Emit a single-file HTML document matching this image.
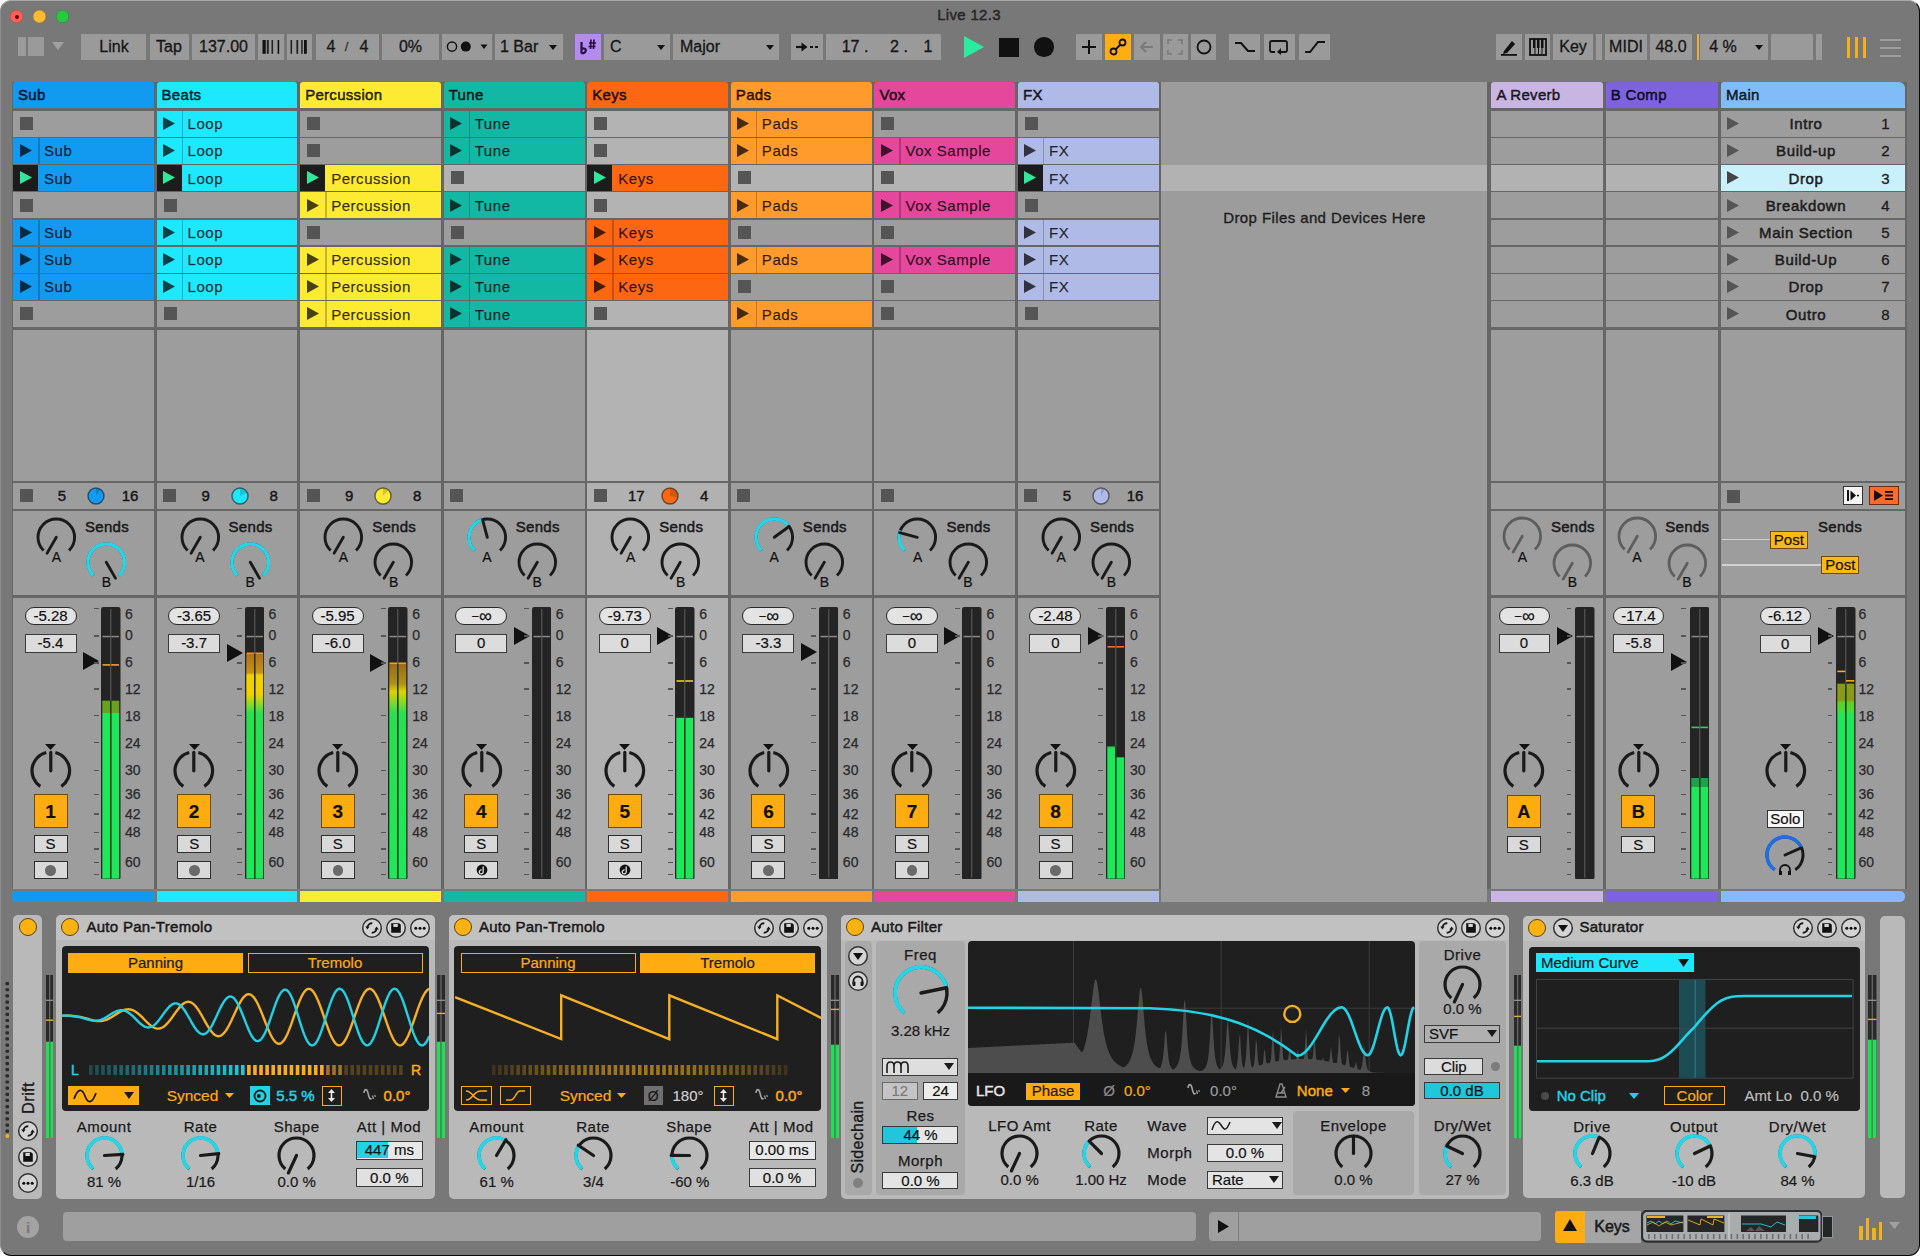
<!DOCTYPE html><html><head><meta charset="utf-8"><style>
*{margin:0;padding:0;box-sizing:border-box}
html,body{width:1920px;height:1256px;overflow:hidden;background:#ffffff}
body{position:relative;font-family:"Liberation Sans",sans-serif}
div,svg{position:absolute}
.t{white-space:nowrap;overflow:visible;-webkit-text-stroke:0.2px currentColor}
</style></head><body><div style="left:0px;top:0px;width:1920px;height:1256px;background:#787878;border-radius:11px;border-top:1px solid #a9a9a9;border-left:1px solid #8c8c8c;border-right:1.5px solid #0a0a0a;border-bottom:1.5px solid #0a0a0a;"></div>
<div style="left:10px;top:10px;width:13px;height:13px;background:#ff5f57;border-radius:50%;box-shadow:inset 0 0 0 0.5px rgba(0,0,0,0.25);"></div>
<div style="left:33px;top:10px;width:13px;height:13px;background:#febc2e;border-radius:50%;box-shadow:inset 0 0 0 0.5px rgba(0,0,0,0.25);"></div>
<div style="left:56px;top:10px;width:13px;height:13px;background:#28c840;border-radius:50%;box-shadow:inset 0 0 0 0.5px rgba(0,0,0,0.25);"></div>
<div style="left:14.5px;top:14.5px;width:4px;height:4px;background:#6b0a06;border-radius:50%;"></div>
<div class="t" style="left:819px;top:5px;width:300px;height:20px;line-height:20px;text-align:center;font-size:15px;letter-spacing:0.3px;-webkit-text-stroke:0.45px currentColor;color:#262626;">Live 12.3</div>
<div style="left:18px;top:37px;width:8px;height:19px;background:#9a9a9a;"></div>
<div style="left:28px;top:37px;width:16px;height:19px;background:#9a9a9a;"></div>
<svg style="position:absolute;left:52px;top:42px;" width="12" height="8" viewBox="0 0 12 8"><path d="M0 0H12L6 8Z" fill="#a0a0a0"/></svg>
<div style="left:81.3px;top:34px;width:65px;height:26px;background:#9a9a9a;"></div>
<div class="t" style="left:-36px;top:37px;width:300px;height:20px;line-height:20px;text-align:center;font-size:16px;color:#161616;-webkit-text-stroke:0.3px #161616;">Link</div>
<div style="left:149.5px;top:34px;width:39.3px;height:26px;background:#9a9a9a;"></div>
<div class="t" style="left:19px;top:37px;width:300px;height:20px;line-height:20px;text-align:center;font-size:16px;color:#161616;-webkit-text-stroke:0.3px #161616;">Tap</div>
<div style="left:191.7px;top:34px;width:63.3px;height:26px;background:#9a9a9a;"></div>
<div class="t" style="left:73.5px;top:37px;width:300px;height:20px;line-height:20px;text-align:center;font-size:16px;color:#161616;-webkit-text-stroke:0.3px #161616;">137.00</div>
<div style="left:257.8px;top:34px;width:26px;height:26px;background:#9a9a9a;"></div>
<svg style="position:absolute;left:262px;top:40px;" width="18" height="14" viewBox="0 0 18 14"><rect x="0.5" y="0" width="3.2" height="13.8" fill="#111"/><rect x="4.8" y="0" width="2" height="13.8" fill="#222"/><rect x="9.5" y="0" width="1.6" height="13.8" fill="#222"/><rect x="15.6" y="0" width="1.6" height="13.8" fill="#111"/></svg>
<div style="left:286.7px;top:34px;width:25.3px;height:26px;background:#9a9a9a;"></div>
<svg style="position:absolute;left:290px;top:40px;" width="18" height="14" viewBox="0 0 18 14"><rect x="0.5" y="0" width="1.6" height="13.8" fill="#222"/><rect x="6.4" y="0" width="1.8" height="13.8" fill="#222"/><rect x="11.2" y="0" width="1.5" height="13.8" fill="#222"/><rect x="14" y="0" width="2.8" height="13.8" fill="#111"/></svg>
<div style="left:315.8px;top:34px;width:62.9px;height:26px;background:#9a9a9a;"></div>
<div class="t" style="left:181px;top:37px;width:300px;height:20px;line-height:20px;text-align:center;font-size:16px;color:#161616;-webkit-text-stroke:0.3px #161616;">4</div>
<div class="t" style="left:196.5px;top:37px;width:300px;height:20px;line-height:20px;text-align:center;font-size:13px;color:#333;-webkit-text-stroke:0.3px #333;">/</div>
<div class="t" style="left:214px;top:37px;width:300px;height:20px;line-height:20px;text-align:center;font-size:16px;color:#161616;-webkit-text-stroke:0.3px #161616;">4</div>
<div style="left:382px;top:34px;width:57px;height:26px;background:#9a9a9a;"></div>
<div class="t" style="left:260.5px;top:37px;width:300px;height:20px;line-height:20px;text-align:center;font-size:16px;color:#161616;-webkit-text-stroke:0.3px #161616;">0%</div>
<div style="left:442px;top:34px;width:50px;height:26px;background:#9a9a9a;"></div>
<svg style="position:absolute;left:445px;top:40px;" width="44" height="14" viewBox="0 0 44 14"><circle cx="7" cy="6.6" r="4.6" fill="none" stroke="#111" stroke-width="1.4"/><circle cx="20.8" cy="6.6" r="5" fill="#111"/><path d="M35.5 4.5H42.5L39 9Z" fill="#111"/></svg>
<div style="left:495px;top:34px;width:67.5px;height:26px;background:#9a9a9a;"></div>
<div class="t" style="left:500px;top:37px;width:300px;height:20px;line-height:20px;text-align:left;font-size:16px;color:#161616;-webkit-text-stroke:0.3px #161616;">1 Bar</div>
<svg style="position:absolute;left:549px;top:45px;" width="8" height="5" viewBox="0 0 8 5"><path d="M0 0H8L4 5Z" fill="#111"/></svg>
<div style="left:575px;top:34px;width:26.3px;height:26px;background:#b48cf0;"></div>
<svg style="position:absolute;left:579px;top:38px;" width="20" height="18" viewBox="0 0 20 18"><path d="M2.5 4V15.5" stroke="#2a1040" stroke-width="2.2"/><path d="M2.5 15.5C8 15 8.5 9.5 2.5 10.5" fill="none" stroke="#2a1040" stroke-width="2.2"/><path d="M10 5H17M9.5 8.5H16.5M12 1.5L11.5 11M15 1.5L14.5 11" stroke="#2a1040" stroke-width="1.6"/></svg>
<div style="left:604px;top:34px;width:66px;height:26px;background:#9a9a9a;"></div>
<div class="t" style="left:610px;top:37px;width:300px;height:20px;line-height:20px;text-align:left;font-size:16px;color:#161616;-webkit-text-stroke:0.3px #161616;">C</div>
<svg style="position:absolute;left:657px;top:45px;" width="8" height="5" viewBox="0 0 8 5"><path d="M0 0H8L4 5Z" fill="#111"/></svg>
<div style="left:673px;top:34px;width:105.7px;height:26px;background:#9a9a9a;"></div>
<div class="t" style="left:680px;top:37px;width:300px;height:20px;line-height:20px;text-align:left;font-size:16px;color:#161616;-webkit-text-stroke:0.3px #161616;">Major</div>
<svg style="position:absolute;left:766px;top:45px;" width="8" height="5" viewBox="0 0 8 5"><path d="M0 0H8L4 5Z" fill="#111"/></svg>
<div style="left:790.8px;top:34px;width:32.2px;height:26px;background:#9a9a9a;"></div>
<svg style="position:absolute;left:795px;top:40px;" width="25" height="14" viewBox="0 0 25 14"><path d="M1 7H8" stroke="#111" stroke-width="2.2"/><path d="M6.5 2.5L12.5 7L6.5 11.5Z" fill="#111"/><rect x="15" y="6" width="3" height="2" fill="#111"/><rect x="20" y="6" width="3" height="2" fill="#111"/></svg>
<div style="left:826px;top:34px;width:114.8px;height:26px;background:#9a9a9a;"></div>
<div class="t" style="left:705px;top:37px;width:300px;height:20px;line-height:20px;text-align:center;font-size:16px;color:#161616;-webkit-text-stroke:0.3px #161616;">17 .</div>
<div class="t" style="left:749px;top:37px;width:300px;height:20px;line-height:20px;text-align:center;font-size:16px;color:#161616;-webkit-text-stroke:0.3px #161616;">2 .</div>
<div class="t" style="left:778px;top:37px;width:300px;height:20px;line-height:20px;text-align:center;font-size:16px;color:#161616;-webkit-text-stroke:0.3px #161616;">1</div>
<svg style="position:absolute;left:963px;top:36px;" width="22" height="22" viewBox="0 0 22 22"><path d="M1 0L21 11L1 22Z" fill="#28eca0"/></svg>
<div style="left:999px;top:37.5px;width:20px;height:19px;background:#111;"></div>
<div style="left:1034px;top:37px;width:19.5px;height:19.5px;background:#111;border-radius:50%;"></div>
<div style="left:1076.4px;top:34px;width:25.2px;height:26px;background:#9a9a9a;"></div>
<svg style="position:absolute;left:1080px;top:38px;" width="18" height="18" viewBox="0 0 18 18"><path d="M9 2V16M2 9H16" stroke="#111" stroke-width="2"/></svg>
<div style="left:1104.9px;top:34px;width:26.1px;height:26px;background:#ffad15;"></div>
<svg style="position:absolute;left:1109px;top:38px;" width="18" height="18" viewBox="0 0 18 18"><circle cx="4.5" cy="13.5" r="3" fill="none" stroke="#111" stroke-width="1.8"/><circle cx="13.5" cy="4.5" r="3" fill="none" stroke="#111" stroke-width="1.8"/><path d="M6.5 11.5L11.5 6.5" stroke="#111" stroke-width="1.8"/></svg>
<div style="left:1134px;top:34px;width:25.5px;height:26px;background:#9a9a9a;"></div>
<svg style="position:absolute;left:1138px;top:38px;" width="18" height="18" viewBox="0 0 18 18"><path d="M3 9H15M8 4L3 9L8 14" fill="none" stroke="#7a7a7a" stroke-width="2"/></svg>
<div style="left:1162.8px;top:34px;width:25.2px;height:26px;background:#9a9a9a;"></div>
<svg style="position:absolute;left:1166px;top:38px;" width="18" height="18" viewBox="0 0 18 18"><path d="M2 6V2H6M12 2H16V6M16 12V16H12M6 16H2V12" fill="none" stroke="#7a7a7a" stroke-width="1.6"/></svg>
<div style="left:1191.3px;top:34px;width:25.1px;height:26px;background:#9a9a9a;"></div>
<svg style="position:absolute;left:1195px;top:38px;" width="18" height="18" viewBox="0 0 18 18"><circle cx="9" cy="9" r="6.5" fill="none" stroke="#111" stroke-width="1.8"/></svg>
<div style="left:1228.5px;top:34px;width:31.5px;height:26px;background:#9a9a9a;"></div>
<svg style="position:absolute;left:1234px;top:38px;" width="22" height="18" viewBox="0 0 22 18"><path d="M1 5H7L14 13H21" fill="none" stroke="#111" stroke-width="2"/></svg>
<div style="left:1263.5px;top:34px;width:31.5px;height:26px;background:#9a9a9a;"></div>
<svg style="position:absolute;left:1268px;top:38px;" width="22" height="18" viewBox="0 0 22 18"><path d="M7 14H4Q2 14 2 12V5Q2 3 4 3H17Q19 3 19 5V12Q19 14 17 14H12" fill="none" stroke="#111" stroke-width="1.8"/><path d="M13 10L9 14L13 17Z" fill="#111"/></svg>
<div style="left:1298.5px;top:34px;width:31.3px;height:26px;background:#9a9a9a;"></div>
<svg style="position:absolute;left:1304px;top:38px;" width="22" height="18" viewBox="0 0 22 18"><path d="M1 14H6L14 4H21" fill="none" stroke="#111" stroke-width="2"/></svg>
<div style="left:1496px;top:34px;width:25.7px;height:26px;background:#9a9a9a;"></div>
<svg style="position:absolute;left:1499px;top:38px;" width="20" height="18" viewBox="0 0 20 18"><path d="M5 13L13 3L16 6L8 15L4 16Z" fill="#111"/><rect x="2" y="16" width="16" height="1.8" fill="#111"/></svg>
<div style="left:1525px;top:34px;width:25px;height:26px;background:#9a9a9a;"></div>
<svg style="position:absolute;left:1529px;top:38px;" width="18" height="18" viewBox="0 0 18 18"><rect x="1" y="1" width="16" height="16" fill="none" stroke="#111" stroke-width="1.8"/><rect x="4" y="1" width="2.5" height="9" fill="#111"/><rect x="8" y="1" width="2.5" height="9" fill="#111"/><rect x="12" y="1" width="2.5" height="9" fill="#111"/><path d="M6 10V17M9.5 10V17M13 10V17" stroke="#111" stroke-width="1"/></svg>
<div style="left:1553px;top:34px;width:39.7px;height:26px;background:#9a9a9a;"></div>
<div class="t" style="left:1423px;top:37px;width:300px;height:20px;line-height:20px;text-align:center;font-size:16px;color:#161616;-webkit-text-stroke:0.3px #161616;">Key</div>
<div style="left:1596px;top:34px;width:5.7px;height:26px;background:#9a9a9a;"></div>
<div style="left:1605px;top:34px;width:41.7px;height:26px;background:#9a9a9a;"></div>
<div class="t" style="left:1476px;top:37px;width:300px;height:20px;line-height:20px;text-align:center;font-size:16px;color:#161616;-webkit-text-stroke:0.3px #161616;">MIDI</div>
<div style="left:1650px;top:34px;width:42.3px;height:26px;background:#9a9a9a;"></div>
<div class="t" style="left:1521px;top:37px;width:300px;height:20px;line-height:20px;text-align:center;font-size:16px;color:#161616;-webkit-text-stroke:0.3px #161616;">48.0</div>
<div style="left:1696.5px;top:34px;width:2px;height:26px;background:#e6b23a;"></div>
<div style="left:1700px;top:34px;width:67.7px;height:26px;background:#9a9a9a;"></div>
<div class="t" style="left:1573px;top:37px;width:300px;height:20px;line-height:20px;text-align:center;font-size:16px;color:#161616;-webkit-text-stroke:0.3px #161616;">4 %</div>
<svg style="position:absolute;left:1755px;top:45px;" width="8" height="5" viewBox="0 0 8 5"><path d="M0 0H8L4 5Z" fill="#111"/></svg>
<div style="left:1771px;top:34px;width:41.7px;height:26px;background:#9a9a9a;"></div>
<div style="left:1816px;top:34px;width:5.7px;height:26px;background:#9a9a9a;"></div>
<div style="left:1847px;top:37px;width:3px;height:21px;background:#f0b020;"></div>
<div style="left:1855px;top:37px;width:3px;height:21px;background:#f0b020;"></div>
<div style="left:1863px;top:37px;width:3px;height:21px;background:#f0b020;"></div>
<div style="left:1880px;top:38.5px;width:21px;height:2.2px;background:#9d9d9d;"></div>
<div style="left:1880px;top:46.5px;width:21px;height:2.2px;background:#9d9d9d;"></div>
<div style="left:1880px;top:54.5px;width:21px;height:2.2px;background:#9d9d9d;"></div>
<div style="left:12px;top:82px;width:1149px;height:807px;background:#666666;"></div>
<div style="left:1158px;top:82px;width:333px;height:807px;background:#666666;"></div>
<div style="left:1489px;top:82px;width:418px;height:807px;background:#666666;"></div>
<div style="left:13px;top:82px;width:140.8px;height:26px;background:#129af0;border-radius:3px 3px 0 0;"></div>
<div class="t" style="left:18px;top:85px;width:300px;height:20px;line-height:20px;text-align:left;font-size:15px;letter-spacing:0.3px;color:rgba(0,0,0,0.8);-webkit-text-stroke:0.55px rgba(0,0,0,0.8);">Sub</div>
<div style="left:13px;top:110.8px;width:140.8px;height:25.8px;background:#9d9d9d;"></div>
<div style="left:20px;top:116.9px;width:13px;height:13px;background:#555555;"></div>
<div style="left:13px;top:138px;width:140.8px;height:25.8px;background:#129af0;"></div>
<svg style="position:absolute;left:19.5px;top:144.2px;" width="12" height="13" viewBox="0 0 12 13"><path d="M0 0L12 6.5L0 13Z" fill="rgba(0,0,0,0.72)"/></svg>
<div style="left:38px;top:138px;width:1.5px;height:25.8px;background:rgba(0,0,0,0.22);"></div>
<div class="t" style="left:44px;top:141.4px;width:300px;height:20px;line-height:20px;text-align:left;font-size:15px;letter-spacing:0.55px;color:rgba(0,0,0,0.8);-webkit-text-stroke:0.25px rgba(0,0,0,0.6);">Sub</div>
<div style="left:13px;top:165.2px;width:140.8px;height:25.8px;background:#129af0;"></div>
<div style="left:13px;top:165.2px;width:25px;height:25.8px;background:#1c1c1c;"></div>
<svg style="position:absolute;left:19.5px;top:171.4px;" width="12" height="13" viewBox="0 0 12 13"><path d="M0 0L12 6.5L0 13Z" fill="#2ee89c"/></svg>
<div class="t" style="left:44px;top:168.6px;width:300px;height:20px;line-height:20px;text-align:left;font-size:15px;letter-spacing:0.55px;color:rgba(0,0,0,0.8);-webkit-text-stroke:0.25px rgba(0,0,0,0.6);">Sub</div>
<div style="left:13px;top:192.4px;width:140.8px;height:25.8px;background:#9d9d9d;"></div>
<div style="left:20px;top:198.5px;width:13px;height:13px;background:#555555;"></div>
<div style="left:13px;top:219.6px;width:140.8px;height:25.8px;background:#129af0;"></div>
<svg style="position:absolute;left:19.5px;top:225.8px;" width="12" height="13" viewBox="0 0 12 13"><path d="M0 0L12 6.5L0 13Z" fill="rgba(0,0,0,0.72)"/></svg>
<div style="left:38px;top:219.6px;width:1.5px;height:25.8px;background:rgba(0,0,0,0.22);"></div>
<div class="t" style="left:44px;top:223px;width:300px;height:20px;line-height:20px;text-align:left;font-size:15px;letter-spacing:0.55px;color:rgba(0,0,0,0.8);-webkit-text-stroke:0.25px rgba(0,0,0,0.6);">Sub</div>
<div style="left:13px;top:246.8px;width:140.8px;height:25.8px;background:#129af0;"></div>
<svg style="position:absolute;left:19.5px;top:253px;" width="12" height="13" viewBox="0 0 12 13"><path d="M0 0L12 6.5L0 13Z" fill="rgba(0,0,0,0.72)"/></svg>
<div style="left:38px;top:246.8px;width:1.5px;height:25.8px;background:rgba(0,0,0,0.22);"></div>
<div class="t" style="left:44px;top:250.2px;width:300px;height:20px;line-height:20px;text-align:left;font-size:15px;letter-spacing:0.55px;color:rgba(0,0,0,0.8);-webkit-text-stroke:0.25px rgba(0,0,0,0.6);">Sub</div>
<div style="left:13px;top:274px;width:140.8px;height:25.8px;background:#129af0;"></div>
<svg style="position:absolute;left:19.5px;top:280.2px;" width="12" height="13" viewBox="0 0 12 13"><path d="M0 0L12 6.5L0 13Z" fill="rgba(0,0,0,0.72)"/></svg>
<div style="left:38px;top:274px;width:1.5px;height:25.8px;background:rgba(0,0,0,0.22);"></div>
<div class="t" style="left:44px;top:277.4px;width:300px;height:20px;line-height:20px;text-align:left;font-size:15px;letter-spacing:0.55px;color:rgba(0,0,0,0.8);-webkit-text-stroke:0.25px rgba(0,0,0,0.6);">Sub</div>
<div style="left:13px;top:301.2px;width:140.8px;height:25.8px;background:#9d9d9d;"></div>
<div style="left:20px;top:307.3px;width:13px;height:13px;background:#555555;"></div>
<div style="left:13px;top:330px;width:140.8px;height:150.5px;background:#9d9d9d;"></div>
<div style="left:156.57px;top:82px;width:140.8px;height:26px;background:#1ee8fe;border-radius:3px 3px 0 0;"></div>
<div class="t" style="left:161.57px;top:85px;width:300px;height:20px;line-height:20px;text-align:left;font-size:15px;letter-spacing:0.3px;color:rgba(0,0,0,0.8);-webkit-text-stroke:0.55px rgba(0,0,0,0.8);">Beats</div>
<div style="left:156.57px;top:110.8px;width:140.8px;height:25.8px;background:#1ee8fe;"></div>
<svg style="position:absolute;left:163.07px;top:117px;" width="12" height="13" viewBox="0 0 12 13"><path d="M0 0L12 6.5L0 13Z" fill="rgba(0,0,0,0.72)"/></svg>
<div style="left:181.57px;top:110.8px;width:1.5px;height:25.8px;background:rgba(0,0,0,0.22);"></div>
<div class="t" style="left:187.57px;top:114.2px;width:300px;height:20px;line-height:20px;text-align:left;font-size:15px;letter-spacing:0.55px;color:rgba(0,0,0,0.8);-webkit-text-stroke:0.25px rgba(0,0,0,0.6);">Loop</div>
<div style="left:156.57px;top:138px;width:140.8px;height:25.8px;background:#1ee8fe;"></div>
<svg style="position:absolute;left:163.07px;top:144.2px;" width="12" height="13" viewBox="0 0 12 13"><path d="M0 0L12 6.5L0 13Z" fill="rgba(0,0,0,0.72)"/></svg>
<div style="left:181.57px;top:138px;width:1.5px;height:25.8px;background:rgba(0,0,0,0.22);"></div>
<div class="t" style="left:187.57px;top:141.4px;width:300px;height:20px;line-height:20px;text-align:left;font-size:15px;letter-spacing:0.55px;color:rgba(0,0,0,0.8);-webkit-text-stroke:0.25px rgba(0,0,0,0.6);">Loop</div>
<div style="left:156.57px;top:165.2px;width:140.8px;height:25.8px;background:#1ee8fe;"></div>
<div style="left:156.57px;top:165.2px;width:25px;height:25.8px;background:#1c1c1c;"></div>
<svg style="position:absolute;left:163.07px;top:171.4px;" width="12" height="13" viewBox="0 0 12 13"><path d="M0 0L12 6.5L0 13Z" fill="#2ee89c"/></svg>
<div class="t" style="left:187.57px;top:168.6px;width:300px;height:20px;line-height:20px;text-align:left;font-size:15px;letter-spacing:0.55px;color:rgba(0,0,0,0.8);-webkit-text-stroke:0.25px rgba(0,0,0,0.6);">Loop</div>
<div style="left:156.57px;top:192.4px;width:140.8px;height:25.8px;background:#9d9d9d;"></div>
<div style="left:163.57px;top:198.5px;width:13px;height:13px;background:#555555;"></div>
<div style="left:156.57px;top:219.6px;width:140.8px;height:25.8px;background:#1ee8fe;"></div>
<svg style="position:absolute;left:163.07px;top:225.8px;" width="12" height="13" viewBox="0 0 12 13"><path d="M0 0L12 6.5L0 13Z" fill="rgba(0,0,0,0.72)"/></svg>
<div style="left:181.57px;top:219.6px;width:1.5px;height:25.8px;background:rgba(0,0,0,0.22);"></div>
<div class="t" style="left:187.57px;top:223px;width:300px;height:20px;line-height:20px;text-align:left;font-size:15px;letter-spacing:0.55px;color:rgba(0,0,0,0.8);-webkit-text-stroke:0.25px rgba(0,0,0,0.6);">Loop</div>
<div style="left:156.57px;top:246.8px;width:140.8px;height:25.8px;background:#1ee8fe;"></div>
<svg style="position:absolute;left:163.07px;top:253px;" width="12" height="13" viewBox="0 0 12 13"><path d="M0 0L12 6.5L0 13Z" fill="rgba(0,0,0,0.72)"/></svg>
<div style="left:181.57px;top:246.8px;width:1.5px;height:25.8px;background:rgba(0,0,0,0.22);"></div>
<div class="t" style="left:187.57px;top:250.2px;width:300px;height:20px;line-height:20px;text-align:left;font-size:15px;letter-spacing:0.55px;color:rgba(0,0,0,0.8);-webkit-text-stroke:0.25px rgba(0,0,0,0.6);">Loop</div>
<div style="left:156.57px;top:274px;width:140.8px;height:25.8px;background:#1ee8fe;"></div>
<svg style="position:absolute;left:163.07px;top:280.2px;" width="12" height="13" viewBox="0 0 12 13"><path d="M0 0L12 6.5L0 13Z" fill="rgba(0,0,0,0.72)"/></svg>
<div style="left:181.57px;top:274px;width:1.5px;height:25.8px;background:rgba(0,0,0,0.22);"></div>
<div class="t" style="left:187.57px;top:277.4px;width:300px;height:20px;line-height:20px;text-align:left;font-size:15px;letter-spacing:0.55px;color:rgba(0,0,0,0.8);-webkit-text-stroke:0.25px rgba(0,0,0,0.6);">Loop</div>
<div style="left:156.57px;top:301.2px;width:140.8px;height:25.8px;background:#9d9d9d;"></div>
<div style="left:163.57px;top:307.3px;width:13px;height:13px;background:#555555;"></div>
<div style="left:156.57px;top:330px;width:140.8px;height:150.5px;background:#9d9d9d;"></div>
<div style="left:300.14px;top:82px;width:140.8px;height:26px;background:#fdea32;border-radius:3px 3px 0 0;"></div>
<div class="t" style="left:305.14px;top:85px;width:300px;height:20px;line-height:20px;text-align:left;font-size:15px;letter-spacing:0.3px;color:rgba(0,0,0,0.8);-webkit-text-stroke:0.55px rgba(0,0,0,0.8);">Percussion</div>
<div style="left:300.14px;top:110.8px;width:140.8px;height:25.8px;background:#9d9d9d;"></div>
<div style="left:307.14px;top:116.9px;width:13px;height:13px;background:#555555;"></div>
<div style="left:300.14px;top:138px;width:140.8px;height:25.8px;background:#9d9d9d;"></div>
<div style="left:307.14px;top:144.1px;width:13px;height:13px;background:#555555;"></div>
<div style="left:300.14px;top:165.2px;width:140.8px;height:25.8px;background:#fdea32;"></div>
<div style="left:300.14px;top:165.2px;width:25px;height:25.8px;background:#1c1c1c;"></div>
<svg style="position:absolute;left:306.64px;top:171.4px;" width="12" height="13" viewBox="0 0 12 13"><path d="M0 0L12 6.5L0 13Z" fill="#2ee89c"/></svg>
<div class="t" style="left:331.14px;top:168.6px;width:300px;height:20px;line-height:20px;text-align:left;font-size:15px;letter-spacing:0.55px;color:rgba(0,0,0,0.8);-webkit-text-stroke:0.25px rgba(0,0,0,0.6);">Percussion</div>
<div style="left:300.14px;top:192.4px;width:140.8px;height:25.8px;background:#fdea32;"></div>
<svg style="position:absolute;left:306.64px;top:198.6px;" width="12" height="13" viewBox="0 0 12 13"><path d="M0 0L12 6.5L0 13Z" fill="rgba(0,0,0,0.72)"/></svg>
<div style="left:325.14px;top:192.4px;width:1.5px;height:25.8px;background:rgba(0,0,0,0.22);"></div>
<div class="t" style="left:331.14px;top:195.8px;width:300px;height:20px;line-height:20px;text-align:left;font-size:15px;letter-spacing:0.55px;color:rgba(0,0,0,0.8);-webkit-text-stroke:0.25px rgba(0,0,0,0.6);">Percussion</div>
<div style="left:300.14px;top:219.6px;width:140.8px;height:25.8px;background:#9d9d9d;"></div>
<div style="left:307.14px;top:225.7px;width:13px;height:13px;background:#555555;"></div>
<div style="left:300.14px;top:246.8px;width:140.8px;height:25.8px;background:#fdea32;"></div>
<svg style="position:absolute;left:306.64px;top:253px;" width="12" height="13" viewBox="0 0 12 13"><path d="M0 0L12 6.5L0 13Z" fill="rgba(0,0,0,0.72)"/></svg>
<div style="left:325.14px;top:246.8px;width:1.5px;height:25.8px;background:rgba(0,0,0,0.22);"></div>
<div class="t" style="left:331.14px;top:250.2px;width:300px;height:20px;line-height:20px;text-align:left;font-size:15px;letter-spacing:0.55px;color:rgba(0,0,0,0.8);-webkit-text-stroke:0.25px rgba(0,0,0,0.6);">Percussion</div>
<div style="left:300.14px;top:274px;width:140.8px;height:25.8px;background:#fdea32;"></div>
<svg style="position:absolute;left:306.64px;top:280.2px;" width="12" height="13" viewBox="0 0 12 13"><path d="M0 0L12 6.5L0 13Z" fill="rgba(0,0,0,0.72)"/></svg>
<div style="left:325.14px;top:274px;width:1.5px;height:25.8px;background:rgba(0,0,0,0.22);"></div>
<div class="t" style="left:331.14px;top:277.4px;width:300px;height:20px;line-height:20px;text-align:left;font-size:15px;letter-spacing:0.55px;color:rgba(0,0,0,0.8);-webkit-text-stroke:0.25px rgba(0,0,0,0.6);">Percussion</div>
<div style="left:300.14px;top:301.2px;width:140.8px;height:25.8px;background:#fdea32;"></div>
<svg style="position:absolute;left:306.64px;top:307.4px;" width="12" height="13" viewBox="0 0 12 13"><path d="M0 0L12 6.5L0 13Z" fill="rgba(0,0,0,0.72)"/></svg>
<div style="left:325.14px;top:301.2px;width:1.5px;height:25.8px;background:rgba(0,0,0,0.22);"></div>
<div class="t" style="left:331.14px;top:304.6px;width:300px;height:20px;line-height:20px;text-align:left;font-size:15px;letter-spacing:0.55px;color:rgba(0,0,0,0.8);-webkit-text-stroke:0.25px rgba(0,0,0,0.6);">Percussion</div>
<div style="left:300.14px;top:330px;width:140.8px;height:150.5px;background:#9d9d9d;"></div>
<div style="left:443.71px;top:82px;width:140.8px;height:26px;background:#13b8a5;border-radius:3px 3px 0 0;"></div>
<div class="t" style="left:448.71px;top:85px;width:300px;height:20px;line-height:20px;text-align:left;font-size:15px;letter-spacing:0.3px;color:rgba(0,0,0,0.8);-webkit-text-stroke:0.55px rgba(0,0,0,0.8);">Tune</div>
<div style="left:443.71px;top:110.8px;width:140.8px;height:25.8px;background:#13b8a5;"></div>
<svg style="position:absolute;left:450.21px;top:117px;" width="12" height="13" viewBox="0 0 12 13"><path d="M0 0L12 6.5L0 13Z" fill="rgba(0,0,0,0.72)"/></svg>
<div style="left:468.71px;top:110.8px;width:1.5px;height:25.8px;background:rgba(0,0,0,0.22);"></div>
<div class="t" style="left:474.71px;top:114.2px;width:300px;height:20px;line-height:20px;text-align:left;font-size:15px;letter-spacing:0.55px;color:rgba(0,0,0,0.8);-webkit-text-stroke:0.25px rgba(0,0,0,0.6);">Tune</div>
<div style="left:443.71px;top:138px;width:140.8px;height:25.8px;background:#13b8a5;"></div>
<svg style="position:absolute;left:450.21px;top:144.2px;" width="12" height="13" viewBox="0 0 12 13"><path d="M0 0L12 6.5L0 13Z" fill="rgba(0,0,0,0.72)"/></svg>
<div style="left:468.71px;top:138px;width:1.5px;height:25.8px;background:rgba(0,0,0,0.22);"></div>
<div class="t" style="left:474.71px;top:141.4px;width:300px;height:20px;line-height:20px;text-align:left;font-size:15px;letter-spacing:0.55px;color:rgba(0,0,0,0.8);-webkit-text-stroke:0.25px rgba(0,0,0,0.6);">Tune</div>
<div style="left:443.71px;top:165.2px;width:140.8px;height:25.8px;background:#b3b3b3;"></div>
<div style="left:450.71px;top:171.3px;width:13px;height:13px;background:#555555;"></div>
<div style="left:443.71px;top:192.4px;width:140.8px;height:25.8px;background:#13b8a5;"></div>
<svg style="position:absolute;left:450.21px;top:198.6px;" width="12" height="13" viewBox="0 0 12 13"><path d="M0 0L12 6.5L0 13Z" fill="rgba(0,0,0,0.72)"/></svg>
<div style="left:468.71px;top:192.4px;width:1.5px;height:25.8px;background:rgba(0,0,0,0.22);"></div>
<div class="t" style="left:474.71px;top:195.8px;width:300px;height:20px;line-height:20px;text-align:left;font-size:15px;letter-spacing:0.55px;color:rgba(0,0,0,0.8);-webkit-text-stroke:0.25px rgba(0,0,0,0.6);">Tune</div>
<div style="left:443.71px;top:219.6px;width:140.8px;height:25.8px;background:#9d9d9d;"></div>
<div style="left:450.71px;top:225.7px;width:13px;height:13px;background:#555555;"></div>
<div style="left:443.71px;top:246.8px;width:140.8px;height:25.8px;background:#13b8a5;"></div>
<svg style="position:absolute;left:450.21px;top:253px;" width="12" height="13" viewBox="0 0 12 13"><path d="M0 0L12 6.5L0 13Z" fill="rgba(0,0,0,0.72)"/></svg>
<div style="left:468.71px;top:246.8px;width:1.5px;height:25.8px;background:rgba(0,0,0,0.22);"></div>
<div class="t" style="left:474.71px;top:250.2px;width:300px;height:20px;line-height:20px;text-align:left;font-size:15px;letter-spacing:0.55px;color:rgba(0,0,0,0.8);-webkit-text-stroke:0.25px rgba(0,0,0,0.6);">Tune</div>
<div style="left:443.71px;top:274px;width:140.8px;height:25.8px;background:#13b8a5;"></div>
<svg style="position:absolute;left:450.21px;top:280.2px;" width="12" height="13" viewBox="0 0 12 13"><path d="M0 0L12 6.5L0 13Z" fill="rgba(0,0,0,0.72)"/></svg>
<div style="left:468.71px;top:274px;width:1.5px;height:25.8px;background:rgba(0,0,0,0.22);"></div>
<div class="t" style="left:474.71px;top:277.4px;width:300px;height:20px;line-height:20px;text-align:left;font-size:15px;letter-spacing:0.55px;color:rgba(0,0,0,0.8);-webkit-text-stroke:0.25px rgba(0,0,0,0.6);">Tune</div>
<div style="left:443.71px;top:301.2px;width:140.8px;height:25.8px;background:#13b8a5;"></div>
<svg style="position:absolute;left:450.21px;top:307.4px;" width="12" height="13" viewBox="0 0 12 13"><path d="M0 0L12 6.5L0 13Z" fill="rgba(0,0,0,0.72)"/></svg>
<div style="left:468.71px;top:301.2px;width:1.5px;height:25.8px;background:rgba(0,0,0,0.22);"></div>
<div class="t" style="left:474.71px;top:304.6px;width:300px;height:20px;line-height:20px;text-align:left;font-size:15px;letter-spacing:0.55px;color:rgba(0,0,0,0.8);-webkit-text-stroke:0.25px rgba(0,0,0,0.6);">Tune</div>
<div style="left:443.71px;top:330px;width:140.8px;height:150.5px;background:#9d9d9d;"></div>
<div style="left:587.28px;top:82px;width:140.8px;height:26px;background:#fe6712;border-radius:3px 3px 0 0;"></div>
<div class="t" style="left:592.28px;top:85px;width:300px;height:20px;line-height:20px;text-align:left;font-size:15px;letter-spacing:0.3px;color:rgba(0,0,0,0.8);-webkit-text-stroke:0.55px rgba(0,0,0,0.8);">Keys</div>
<div style="left:587.28px;top:110.8px;width:140.8px;height:25.8px;background:#b3b3b3;"></div>
<div style="left:594.28px;top:116.9px;width:13px;height:13px;background:#555555;"></div>
<div style="left:587.28px;top:138px;width:140.8px;height:25.8px;background:#b3b3b3;"></div>
<div style="left:594.28px;top:144.1px;width:13px;height:13px;background:#555555;"></div>
<div style="left:587.28px;top:165.2px;width:140.8px;height:25.8px;background:#fe6712;"></div>
<div style="left:587.28px;top:165.2px;width:25px;height:25.8px;background:#1c1c1c;"></div>
<svg style="position:absolute;left:593.78px;top:171.4px;" width="12" height="13" viewBox="0 0 12 13"><path d="M0 0L12 6.5L0 13Z" fill="#2ee89c"/></svg>
<div class="t" style="left:618.28px;top:168.6px;width:300px;height:20px;line-height:20px;text-align:left;font-size:15px;letter-spacing:0.55px;color:rgba(0,0,0,0.8);-webkit-text-stroke:0.25px rgba(0,0,0,0.6);">Keys</div>
<div style="left:587.28px;top:192.4px;width:140.8px;height:25.8px;background:#b3b3b3;"></div>
<div style="left:594.28px;top:198.5px;width:13px;height:13px;background:#555555;"></div>
<div style="left:587.28px;top:219.6px;width:140.8px;height:25.8px;background:#fe6712;"></div>
<svg style="position:absolute;left:593.78px;top:225.8px;" width="12" height="13" viewBox="0 0 12 13"><path d="M0 0L12 6.5L0 13Z" fill="rgba(0,0,0,0.72)"/></svg>
<div style="left:612.28px;top:219.6px;width:1.5px;height:25.8px;background:rgba(0,0,0,0.22);"></div>
<div class="t" style="left:618.28px;top:223px;width:300px;height:20px;line-height:20px;text-align:left;font-size:15px;letter-spacing:0.55px;color:rgba(0,0,0,0.8);-webkit-text-stroke:0.25px rgba(0,0,0,0.6);">Keys</div>
<div style="left:587.28px;top:246.8px;width:140.8px;height:25.8px;background:#fe6712;"></div>
<svg style="position:absolute;left:593.78px;top:253px;" width="12" height="13" viewBox="0 0 12 13"><path d="M0 0L12 6.5L0 13Z" fill="rgba(0,0,0,0.72)"/></svg>
<div style="left:612.28px;top:246.8px;width:1.5px;height:25.8px;background:rgba(0,0,0,0.22);"></div>
<div class="t" style="left:618.28px;top:250.2px;width:300px;height:20px;line-height:20px;text-align:left;font-size:15px;letter-spacing:0.55px;color:rgba(0,0,0,0.8);-webkit-text-stroke:0.25px rgba(0,0,0,0.6);">Keys</div>
<div style="left:587.28px;top:274px;width:140.8px;height:25.8px;background:#fe6712;"></div>
<svg style="position:absolute;left:593.78px;top:280.2px;" width="12" height="13" viewBox="0 0 12 13"><path d="M0 0L12 6.5L0 13Z" fill="rgba(0,0,0,0.72)"/></svg>
<div style="left:612.28px;top:274px;width:1.5px;height:25.8px;background:rgba(0,0,0,0.22);"></div>
<div class="t" style="left:618.28px;top:277.4px;width:300px;height:20px;line-height:20px;text-align:left;font-size:15px;letter-spacing:0.55px;color:rgba(0,0,0,0.8);-webkit-text-stroke:0.25px rgba(0,0,0,0.6);">Keys</div>
<div style="left:587.28px;top:301.2px;width:140.8px;height:25.8px;background:#b3b3b3;"></div>
<div style="left:594.28px;top:307.3px;width:13px;height:13px;background:#555555;"></div>
<div style="left:587.28px;top:330px;width:140.8px;height:150.5px;background:#b3b3b3;"></div>
<div style="left:730.85px;top:82px;width:140.8px;height:26px;background:#fe9b2c;border-radius:3px 3px 0 0;"></div>
<div class="t" style="left:735.85px;top:85px;width:300px;height:20px;line-height:20px;text-align:left;font-size:15px;letter-spacing:0.3px;color:rgba(0,0,0,0.8);-webkit-text-stroke:0.55px rgba(0,0,0,0.8);">Pads</div>
<div style="left:730.85px;top:110.8px;width:140.8px;height:25.8px;background:#fe9b2c;"></div>
<svg style="position:absolute;left:737.35px;top:117px;" width="12" height="13" viewBox="0 0 12 13"><path d="M0 0L12 6.5L0 13Z" fill="rgba(0,0,0,0.72)"/></svg>
<div style="left:755.85px;top:110.8px;width:1.5px;height:25.8px;background:rgba(0,0,0,0.22);"></div>
<div class="t" style="left:761.85px;top:114.2px;width:300px;height:20px;line-height:20px;text-align:left;font-size:15px;letter-spacing:0.55px;color:rgba(0,0,0,0.8);-webkit-text-stroke:0.25px rgba(0,0,0,0.6);">Pads</div>
<div style="left:730.85px;top:138px;width:140.8px;height:25.8px;background:#fe9b2c;"></div>
<svg style="position:absolute;left:737.35px;top:144.2px;" width="12" height="13" viewBox="0 0 12 13"><path d="M0 0L12 6.5L0 13Z" fill="rgba(0,0,0,0.72)"/></svg>
<div style="left:755.85px;top:138px;width:1.5px;height:25.8px;background:rgba(0,0,0,0.22);"></div>
<div class="t" style="left:761.85px;top:141.4px;width:300px;height:20px;line-height:20px;text-align:left;font-size:15px;letter-spacing:0.55px;color:rgba(0,0,0,0.8);-webkit-text-stroke:0.25px rgba(0,0,0,0.6);">Pads</div>
<div style="left:730.85px;top:165.2px;width:140.8px;height:25.8px;background:#b3b3b3;"></div>
<div style="left:737.85px;top:171.3px;width:13px;height:13px;background:#555555;"></div>
<div style="left:730.85px;top:192.4px;width:140.8px;height:25.8px;background:#fe9b2c;"></div>
<svg style="position:absolute;left:737.35px;top:198.6px;" width="12" height="13" viewBox="0 0 12 13"><path d="M0 0L12 6.5L0 13Z" fill="rgba(0,0,0,0.72)"/></svg>
<div style="left:755.85px;top:192.4px;width:1.5px;height:25.8px;background:rgba(0,0,0,0.22);"></div>
<div class="t" style="left:761.85px;top:195.8px;width:300px;height:20px;line-height:20px;text-align:left;font-size:15px;letter-spacing:0.55px;color:rgba(0,0,0,0.8);-webkit-text-stroke:0.25px rgba(0,0,0,0.6);">Pads</div>
<div style="left:730.85px;top:219.6px;width:140.8px;height:25.8px;background:#9d9d9d;"></div>
<div style="left:737.85px;top:225.7px;width:13px;height:13px;background:#555555;"></div>
<div style="left:730.85px;top:246.8px;width:140.8px;height:25.8px;background:#fe9b2c;"></div>
<svg style="position:absolute;left:737.35px;top:253px;" width="12" height="13" viewBox="0 0 12 13"><path d="M0 0L12 6.5L0 13Z" fill="rgba(0,0,0,0.72)"/></svg>
<div style="left:755.85px;top:246.8px;width:1.5px;height:25.8px;background:rgba(0,0,0,0.22);"></div>
<div class="t" style="left:761.85px;top:250.2px;width:300px;height:20px;line-height:20px;text-align:left;font-size:15px;letter-spacing:0.55px;color:rgba(0,0,0,0.8);-webkit-text-stroke:0.25px rgba(0,0,0,0.6);">Pads</div>
<div style="left:730.85px;top:274px;width:140.8px;height:25.8px;background:#9d9d9d;"></div>
<div style="left:737.85px;top:280.1px;width:13px;height:13px;background:#555555;"></div>
<div style="left:730.85px;top:301.2px;width:140.8px;height:25.8px;background:#fe9b2c;"></div>
<svg style="position:absolute;left:737.35px;top:307.4px;" width="12" height="13" viewBox="0 0 12 13"><path d="M0 0L12 6.5L0 13Z" fill="rgba(0,0,0,0.72)"/></svg>
<div style="left:755.85px;top:301.2px;width:1.5px;height:25.8px;background:rgba(0,0,0,0.22);"></div>
<div class="t" style="left:761.85px;top:304.6px;width:300px;height:20px;line-height:20px;text-align:left;font-size:15px;letter-spacing:0.55px;color:rgba(0,0,0,0.8);-webkit-text-stroke:0.25px rgba(0,0,0,0.6);">Pads</div>
<div style="left:730.85px;top:330px;width:140.8px;height:150.5px;background:#9d9d9d;"></div>
<div style="left:874.42px;top:82px;width:140.8px;height:26px;background:#e4479b;border-radius:3px 3px 0 0;"></div>
<div class="t" style="left:879.42px;top:85px;width:300px;height:20px;line-height:20px;text-align:left;font-size:15px;letter-spacing:0.3px;color:rgba(0,0,0,0.8);-webkit-text-stroke:0.55px rgba(0,0,0,0.8);">Vox</div>
<div style="left:874.42px;top:110.8px;width:140.8px;height:25.8px;background:#9d9d9d;"></div>
<div style="left:881.42px;top:116.9px;width:13px;height:13px;background:#555555;"></div>
<div style="left:874.42px;top:138px;width:140.8px;height:25.8px;background:#e4479b;"></div>
<svg style="position:absolute;left:880.92px;top:144.2px;" width="12" height="13" viewBox="0 0 12 13"><path d="M0 0L12 6.5L0 13Z" fill="rgba(0,0,0,0.72)"/></svg>
<div style="left:899.42px;top:138px;width:1.5px;height:25.8px;background:rgba(0,0,0,0.22);"></div>
<div class="t" style="left:905.42px;top:141.4px;width:300px;height:20px;line-height:20px;text-align:left;font-size:15px;letter-spacing:0.55px;color:rgba(0,0,0,0.8);-webkit-text-stroke:0.25px rgba(0,0,0,0.6);">Vox Sample</div>
<div style="left:874.42px;top:165.2px;width:140.8px;height:25.8px;background:#b3b3b3;"></div>
<div style="left:881.42px;top:171.3px;width:13px;height:13px;background:#555555;"></div>
<div style="left:874.42px;top:192.4px;width:140.8px;height:25.8px;background:#e4479b;"></div>
<svg style="position:absolute;left:880.92px;top:198.6px;" width="12" height="13" viewBox="0 0 12 13"><path d="M0 0L12 6.5L0 13Z" fill="rgba(0,0,0,0.72)"/></svg>
<div style="left:899.42px;top:192.4px;width:1.5px;height:25.8px;background:rgba(0,0,0,0.22);"></div>
<div class="t" style="left:905.42px;top:195.8px;width:300px;height:20px;line-height:20px;text-align:left;font-size:15px;letter-spacing:0.55px;color:rgba(0,0,0,0.8);-webkit-text-stroke:0.25px rgba(0,0,0,0.6);">Vox Sample</div>
<div style="left:874.42px;top:219.6px;width:140.8px;height:25.8px;background:#9d9d9d;"></div>
<div style="left:881.42px;top:225.7px;width:13px;height:13px;background:#555555;"></div>
<div style="left:874.42px;top:246.8px;width:140.8px;height:25.8px;background:#e4479b;"></div>
<svg style="position:absolute;left:880.92px;top:253px;" width="12" height="13" viewBox="0 0 12 13"><path d="M0 0L12 6.5L0 13Z" fill="rgba(0,0,0,0.72)"/></svg>
<div style="left:899.42px;top:246.8px;width:1.5px;height:25.8px;background:rgba(0,0,0,0.22);"></div>
<div class="t" style="left:905.42px;top:250.2px;width:300px;height:20px;line-height:20px;text-align:left;font-size:15px;letter-spacing:0.55px;color:rgba(0,0,0,0.8);-webkit-text-stroke:0.25px rgba(0,0,0,0.6);">Vox Sample</div>
<div style="left:874.42px;top:274px;width:140.8px;height:25.8px;background:#9d9d9d;"></div>
<div style="left:881.42px;top:280.1px;width:13px;height:13px;background:#555555;"></div>
<div style="left:874.42px;top:301.2px;width:140.8px;height:25.8px;background:#9d9d9d;"></div>
<div style="left:881.42px;top:307.3px;width:13px;height:13px;background:#555555;"></div>
<div style="left:874.42px;top:330px;width:140.8px;height:150.5px;background:#9d9d9d;"></div>
<div style="left:1017.99px;top:82px;width:140.8px;height:26px;background:#b0bae6;border-radius:3px 3px 0 0;"></div>
<div class="t" style="left:1022.99px;top:85px;width:300px;height:20px;line-height:20px;text-align:left;font-size:15px;letter-spacing:0.3px;color:rgba(0,0,0,0.8);-webkit-text-stroke:0.55px rgba(0,0,0,0.8);">FX</div>
<div style="left:1017.99px;top:110.8px;width:140.8px;height:25.8px;background:#9d9d9d;"></div>
<div style="left:1024.99px;top:116.9px;width:13px;height:13px;background:#555555;"></div>
<div style="left:1017.99px;top:138px;width:140.8px;height:25.8px;background:#b0bae6;"></div>
<svg style="position:absolute;left:1024.49px;top:144.2px;" width="12" height="13" viewBox="0 0 12 13"><path d="M0 0L12 6.5L0 13Z" fill="rgba(0,0,0,0.72)"/></svg>
<div style="left:1042.99px;top:138px;width:1.5px;height:25.8px;background:rgba(0,0,0,0.22);"></div>
<div class="t" style="left:1048.99px;top:141.4px;width:300px;height:20px;line-height:20px;text-align:left;font-size:15px;letter-spacing:0.55px;color:rgba(0,0,0,0.8);-webkit-text-stroke:0.25px rgba(0,0,0,0.6);">FX</div>
<div style="left:1017.99px;top:165.2px;width:140.8px;height:25.8px;background:#b0bae6;"></div>
<div style="left:1017.99px;top:165.2px;width:25px;height:25.8px;background:#1c1c1c;"></div>
<svg style="position:absolute;left:1024.49px;top:171.4px;" width="12" height="13" viewBox="0 0 12 13"><path d="M0 0L12 6.5L0 13Z" fill="#2ee89c"/></svg>
<div class="t" style="left:1048.99px;top:168.6px;width:300px;height:20px;line-height:20px;text-align:left;font-size:15px;letter-spacing:0.55px;color:rgba(0,0,0,0.8);-webkit-text-stroke:0.25px rgba(0,0,0,0.6);">FX</div>
<div style="left:1017.99px;top:192.4px;width:140.8px;height:25.8px;background:#9d9d9d;"></div>
<div style="left:1024.99px;top:198.5px;width:13px;height:13px;background:#555555;"></div>
<div style="left:1017.99px;top:219.6px;width:140.8px;height:25.8px;background:#b0bae6;"></div>
<svg style="position:absolute;left:1024.49px;top:225.8px;" width="12" height="13" viewBox="0 0 12 13"><path d="M0 0L12 6.5L0 13Z" fill="rgba(0,0,0,0.72)"/></svg>
<div style="left:1042.99px;top:219.6px;width:1.5px;height:25.8px;background:rgba(0,0,0,0.22);"></div>
<div class="t" style="left:1048.99px;top:223px;width:300px;height:20px;line-height:20px;text-align:left;font-size:15px;letter-spacing:0.55px;color:rgba(0,0,0,0.8);-webkit-text-stroke:0.25px rgba(0,0,0,0.6);">FX</div>
<div style="left:1017.99px;top:246.8px;width:140.8px;height:25.8px;background:#b0bae6;"></div>
<svg style="position:absolute;left:1024.49px;top:253px;" width="12" height="13" viewBox="0 0 12 13"><path d="M0 0L12 6.5L0 13Z" fill="rgba(0,0,0,0.72)"/></svg>
<div style="left:1042.99px;top:246.8px;width:1.5px;height:25.8px;background:rgba(0,0,0,0.22);"></div>
<div class="t" style="left:1048.99px;top:250.2px;width:300px;height:20px;line-height:20px;text-align:left;font-size:15px;letter-spacing:0.55px;color:rgba(0,0,0,0.8);-webkit-text-stroke:0.25px rgba(0,0,0,0.6);">FX</div>
<div style="left:1017.99px;top:274px;width:140.8px;height:25.8px;background:#b0bae6;"></div>
<svg style="position:absolute;left:1024.49px;top:280.2px;" width="12" height="13" viewBox="0 0 12 13"><path d="M0 0L12 6.5L0 13Z" fill="rgba(0,0,0,0.72)"/></svg>
<div style="left:1042.99px;top:274px;width:1.5px;height:25.8px;background:rgba(0,0,0,0.22);"></div>
<div class="t" style="left:1048.99px;top:277.4px;width:300px;height:20px;line-height:20px;text-align:left;font-size:15px;letter-spacing:0.55px;color:rgba(0,0,0,0.8);-webkit-text-stroke:0.25px rgba(0,0,0,0.6);">FX</div>
<div style="left:1017.99px;top:301.2px;width:140.8px;height:25.8px;background:#9d9d9d;"></div>
<div style="left:1024.99px;top:307.3px;width:13px;height:13px;background:#555555;"></div>
<div style="left:1017.99px;top:330px;width:140.8px;height:150.5px;background:#9d9d9d;"></div>
<div style="left:13px;top:483px;width:140.8px;height:25.5px;background:#9d9d9d;"></div>
<div style="left:19.5px;top:489px;width:13px;height:13px;background:#555555;"></div>
<div class="t" style="left:-88px;top:486px;width:300px;height:20px;line-height:20px;text-align:center;font-size:15px;color:#151515;-webkit-text-stroke:0.4px #151515;">5</div>
<svg style="position:absolute;left:86px;top:486px;" width="20" height="20" viewBox="0 0 20 20"><circle cx="10" cy="10" r="8" fill="#129af0"/><path d="M10 10L10 2.6A7.4 7.4 0 0 1 14.35 4.01Z" fill="rgba(0,0,0,0.16)"/><circle cx="10" cy="10" r="8" fill="none" stroke="rgba(0,0,0,0.5)" stroke-width="1.4"/></svg>
<div class="t" style="left:-20px;top:486px;width:300px;height:20px;line-height:20px;text-align:center;font-size:15px;color:#151515;-webkit-text-stroke:0.4px #151515;">16</div>
<div style="left:13px;top:511px;width:140.8px;height:83.5px;background:#9d9d9d;"></div>
<div class="t" style="left:85px;top:517.4px;width:300px;height:20px;line-height:20px;text-align:left;font-size:15px;letter-spacing:0.3px;color:#1a1a1a;-webkit-text-stroke:0.5px #1a1a1a;">Sends</div>
<svg style="position:absolute;left:32px;top:512.7px;" width="48.6" height="48.6" viewBox="0 0 48.6 48.6"><path d="M11.59 37.46A18.3 18.3 0 1 1 37.01 37.46" fill="none" stroke="#1a1a1a" stroke-width="2.9"/><line x1="24.3" y1="24.3" x2="15.15" y2="40.15" stroke="#1a1a1a" stroke-width="2.9" stroke-linecap="round"/></svg>
<div class="t" style="left:-93.7px;top:546.5px;width:300px;height:20px;line-height:20px;text-align:center;font-size:14px;color:#111;">A</div>
<svg style="position:absolute;left:82.2px;top:537.7px;" width="48.6" height="48.6" viewBox="0 0 48.6 48.6"><path d="M11.59 37.46A18.3 18.3 0 1 1 37.01 37.46" fill="none" stroke="#1a1a1a" stroke-width="2.9"/><path d="M11.59 37.46A18.3 18.3 0 1 1 37.01 37.46" fill="none" stroke="#23d6e8" stroke-width="3.3349999999999995"/><line x1="24.3" y1="24.3" x2="33.45" y2="40.15" stroke="#1a1a1a" stroke-width="2.9" stroke-linecap="round"/></svg>
<div class="t" style="left:-43.5px;top:571.5px;width:300px;height:20px;line-height:20px;text-align:center;font-size:14px;color:#111;">B</div>
<div style="left:13px;top:597.5px;width:140.8px;height:291px;background:#9d9d9d;"></div>
<div style="left:24.5px;top:607.3px;width:52px;height:18px;background:#e3e3e3;border:1.4px solid #2a2a2a;border-radius:9px;"></div>
<div class="t" style="left:-99.5px;top:606.3px;width:300px;height:20px;line-height:20px;text-align:center;font-size:15px;color:#111;">-5.28</div>
<div style="left:24.5px;top:634px;width:52px;height:18.7px;background:#dcdcdc;border:1.4px solid #3a3a3a;"></div>
<div class="t" style="left:-99.5px;top:633.4px;width:300px;height:20px;line-height:20px;text-align:center;font-size:15px;color:#111;">-5.4</div>
<svg style="position:absolute;left:83px;top:651.5px;" width="16" height="18" viewBox="0 0 16 18"><path d="M0 0L16 9L0 18Z" fill="#111"/></svg>
<svg style="position:absolute;left:101px;top:606.7px;" width="19.5" height="272.8" viewBox="0 0 19.5 272.8"><rect x="0" y="0" width="19.5" height="272.8" rx="2.5" fill="#242424"/><defs><linearGradient id="g101_0" gradientUnits="userSpaceOnUse" x1="0" y1="0" x2="0" y2="272.8"><stop offset="0.34" stop-color="#6aa020"/><stop offset="0.39" stop-color="#6aa020"/><stop offset="0.39" stop-color="#1ee85a"/><stop offset="1" stop-color="#1ee85a"/></linearGradient></defs><rect x="1.3" y="93.7" width="8.1" height="177.9" fill="url(#g101_0)"/><defs><linearGradient id="g101_1" gradientUnits="userSpaceOnUse" x1="0" y1="0" x2="0" y2="272.8"><stop offset="0.34" stop-color="#6aa020"/><stop offset="0.39" stop-color="#6aa020"/><stop offset="0.39" stop-color="#1ee85a"/><stop offset="1" stop-color="#1ee85a"/></linearGradient></defs><rect x="10.1" y="93.7" width="8.1" height="177.9" fill="url(#g101_1)"/><rect x="1.5" y="28.8" width="16.5" height="1.5" fill="#8a8a8a"/><rect x="1.5" y="57.1" width="16.5" height="1.6" fill="#f0a030"/><rect x="9.15" y="2" width="1.2" height="268.8" fill="#555"/><rect x="9.15" y="93.7" width="1.2" height="178.1" fill="#0d3a18"/></svg>
<div style="left:93.5px;top:607.9px;width:5px;height:1.3px;background:#555;"></div>
<div style="left:93.5px;top:635.4px;width:5px;height:1.3px;background:#555;"></div>
<div style="left:93.5px;top:662.4px;width:5px;height:1.3px;background:#555;"></div>
<div style="left:93.5px;top:688.4px;width:5px;height:1.3px;background:#555;"></div>
<div style="left:93.5px;top:715.2px;width:5px;height:1.3px;background:#555;"></div>
<div style="left:93.5px;top:742.2px;width:5px;height:1.3px;background:#555;"></div>
<div style="left:93.5px;top:769.6px;width:5px;height:1.3px;background:#555;"></div>
<div style="left:93.5px;top:793.8px;width:5px;height:1.3px;background:#555;"></div>
<div style="left:93.5px;top:813.4px;width:5px;height:1.3px;background:#555;"></div>
<div style="left:93.5px;top:831.7px;width:5px;height:1.3px;background:#555;"></div>
<div style="left:93.5px;top:848.4px;width:5px;height:1.3px;background:#555;"></div>
<div style="left:93.5px;top:861.8px;width:5px;height:1.3px;background:#555;"></div>
<div style="left:93.5px;top:874px;width:5px;height:1.3px;background:#555;"></div>
<div class="t" style="left:125px;top:604px;width:300px;height:20px;line-height:20px;text-align:left;font-size:14px;color:#2a2a2a;-webkit-text-stroke:0.25px #2a2a2a;">6</div>
<div class="t" style="left:125px;top:625.4px;width:300px;height:20px;line-height:20px;text-align:left;font-size:14px;color:#2a2a2a;-webkit-text-stroke:0.25px #2a2a2a;">0</div>
<div class="t" style="left:125px;top:652px;width:300px;height:20px;line-height:20px;text-align:left;font-size:14px;color:#2a2a2a;-webkit-text-stroke:0.25px #2a2a2a;">6</div>
<div class="t" style="left:125px;top:678.5px;width:300px;height:20px;line-height:20px;text-align:left;font-size:14px;color:#2a2a2a;-webkit-text-stroke:0.25px #2a2a2a;">12</div>
<div class="t" style="left:125px;top:705.5px;width:300px;height:20px;line-height:20px;text-align:left;font-size:14px;color:#2a2a2a;-webkit-text-stroke:0.25px #2a2a2a;">18</div>
<div class="t" style="left:125px;top:733px;width:300px;height:20px;line-height:20px;text-align:left;font-size:14px;color:#2a2a2a;-webkit-text-stroke:0.25px #2a2a2a;">24</div>
<div class="t" style="left:125px;top:760px;width:300px;height:20px;line-height:20px;text-align:left;font-size:14px;color:#2a2a2a;-webkit-text-stroke:0.25px #2a2a2a;">30</div>
<div class="t" style="left:125px;top:784px;width:300px;height:20px;line-height:20px;text-align:left;font-size:14px;color:#2a2a2a;-webkit-text-stroke:0.25px #2a2a2a;">36</div>
<div class="t" style="left:125px;top:804px;width:300px;height:20px;line-height:20px;text-align:left;font-size:14px;color:#2a2a2a;-webkit-text-stroke:0.25px #2a2a2a;">42</div>
<div class="t" style="left:125px;top:822.2px;width:300px;height:20px;line-height:20px;text-align:left;font-size:14px;color:#2a2a2a;-webkit-text-stroke:0.25px #2a2a2a;">48</div>
<div class="t" style="left:125px;top:852px;width:300px;height:20px;line-height:20px;text-align:left;font-size:14px;color:#2a2a2a;-webkit-text-stroke:0.25px #2a2a2a;">60</div>
<svg style="position:absolute;left:45.2px;top:744px;" width="11" height="6" viewBox="0 0 11 6"><path d="M0 0H11L5.5 6Z" fill="#111"/></svg>
<svg style="position:absolute;left:25.9px;top:745.6px;" width="49.6" height="49.6" viewBox="0 0 49.6 49.6"><path d="M14.29 40.39A18.8 18.8 0 0 1 20.25 6.56" fill="none" stroke="#1a1a1a" stroke-width="3.2"/><path d="M29.35 6.56A18.8 18.8 0 0 1 35.31 40.39" fill="none" stroke="#1a1a1a" stroke-width="3.2"/><line x1="24.8" y1="24.8" x2="24.8" y2="6.38" stroke="#1a1a1a" stroke-width="3.2" stroke-linecap="round"/></svg>
<div style="left:33.6px;top:794px;width:34px;height:34px;background:#ffab12;border:1.3px solid #6a4a10;"></div>
<div class="t" style="left:-99.4px;top:801.5px;width:300px;height:20px;line-height:20px;text-align:center;font-size:19px;font-weight:bold;color:#111;">1</div>
<div style="left:33.6px;top:835.4px;width:34px;height:18px;background:#d9d9d9;border:1.3px solid #2e2e2e;"></div>
<div class="t" style="left:-99.4px;top:834.4px;width:300px;height:20px;line-height:20px;text-align:center;font-size:15px;color:#111;">S</div>
<div style="left:33.6px;top:860.8px;width:34px;height:18.6px;background:#d9d9d9;border:1.3px solid #2e2e2e;"></div>
<div style="left:45.4px;top:865px;width:10.6px;height:10.6px;background:#6a6a6a;border-radius:50%;"></div>
<div style="left:12px;top:891px;width:141.8px;height:11px;background:#129af0;border-radius:4px 0 0 4px;"></div>
<div style="left:156.57px;top:483px;width:140.8px;height:25.5px;background:#9d9d9d;"></div>
<div style="left:163.07px;top:489px;width:13px;height:13px;background:#555555;"></div>
<div class="t" style="left:55.57px;top:486px;width:300px;height:20px;line-height:20px;text-align:center;font-size:15px;color:#151515;-webkit-text-stroke:0.4px #151515;">9</div>
<svg style="position:absolute;left:229.57px;top:486px;" width="20" height="20" viewBox="0 0 20 20"><circle cx="10" cy="10" r="8" fill="#1ee8fe"/><path d="M10 10L10 2.6A7.4 7.4 0 0 1 16.7 6.85Z" fill="rgba(0,0,0,0.16)"/><circle cx="10" cy="10" r="8" fill="none" stroke="rgba(0,0,0,0.5)" stroke-width="1.4"/></svg>
<div class="t" style="left:123.57px;top:486px;width:300px;height:20px;line-height:20px;text-align:center;font-size:15px;color:#151515;-webkit-text-stroke:0.4px #151515;">8</div>
<div style="left:156.57px;top:511px;width:140.8px;height:83.5px;background:#9d9d9d;"></div>
<div class="t" style="left:228.57px;top:517.4px;width:300px;height:20px;line-height:20px;text-align:left;font-size:15px;letter-spacing:0.3px;color:#1a1a1a;-webkit-text-stroke:0.5px #1a1a1a;">Sends</div>
<svg style="position:absolute;left:175.57px;top:512.7px;" width="48.6" height="48.6" viewBox="0 0 48.6 48.6"><path d="M11.59 37.46A18.3 18.3 0 1 1 37.01 37.46" fill="none" stroke="#1a1a1a" stroke-width="2.9"/><line x1="24.3" y1="24.3" x2="15.15" y2="40.15" stroke="#1a1a1a" stroke-width="2.9" stroke-linecap="round"/></svg>
<div class="t" style="left:49.87px;top:546.5px;width:300px;height:20px;line-height:20px;text-align:center;font-size:14px;color:#111;">A</div>
<svg style="position:absolute;left:225.77px;top:537.7px;" width="48.6" height="48.6" viewBox="0 0 48.6 48.6"><path d="M11.59 37.46A18.3 18.3 0 1 1 37.01 37.46" fill="none" stroke="#1a1a1a" stroke-width="2.9"/><path d="M11.59 37.46A18.3 18.3 0 1 1 37.01 37.46" fill="none" stroke="#23d6e8" stroke-width="3.3349999999999995"/><line x1="24.3" y1="24.3" x2="33.45" y2="40.15" stroke="#1a1a1a" stroke-width="2.9" stroke-linecap="round"/></svg>
<div class="t" style="left:100.07px;top:571.5px;width:300px;height:20px;line-height:20px;text-align:center;font-size:14px;color:#111;">B</div>
<div style="left:156.57px;top:597.5px;width:140.8px;height:291px;background:#9d9d9d;"></div>
<div style="left:168.07px;top:607.3px;width:52px;height:18px;background:#e3e3e3;border:1.4px solid #2a2a2a;border-radius:9px;"></div>
<div class="t" style="left:44.07px;top:606.3px;width:300px;height:20px;line-height:20px;text-align:center;font-size:15px;color:#111;">-3.65</div>
<div style="left:168.07px;top:634px;width:52px;height:18.7px;background:#dcdcdc;border:1.4px solid #3a3a3a;"></div>
<div class="t" style="left:44.07px;top:633.4px;width:300px;height:20px;line-height:20px;text-align:center;font-size:15px;color:#111;">-3.7</div>
<svg style="position:absolute;left:226.57px;top:644px;" width="16" height="18" viewBox="0 0 16 18"><path d="M0 0L16 9L0 18Z" fill="#111"/></svg>
<svg style="position:absolute;left:244.57px;top:606.7px;" width="19.5" height="272.8" viewBox="0 0 19.5 272.8"><rect x="0" y="0" width="19.5" height="272.8" rx="2.5" fill="#242424"/><defs><linearGradient id="g244_0" gradientUnits="userSpaceOnUse" x1="0" y1="0" x2="0" y2="272.8"><stop offset="0.17" stop-color="#b07018"/><stop offset="0.24" stop-color="#c89018"/><stop offset="0.25" stop-color="#f2d000"/><stop offset="0.32" stop-color="#f2d000"/><stop offset="0.39" stop-color="#28e050"/><stop offset="1" stop-color="#1ee85a"/></linearGradient></defs><rect x="1.3" y="46.8" width="8.1" height="224.8" fill="url(#g244_0)"/><defs><linearGradient id="g244_1" gradientUnits="userSpaceOnUse" x1="0" y1="0" x2="0" y2="272.8"><stop offset="0.17" stop-color="#b07018"/><stop offset="0.24" stop-color="#c89018"/><stop offset="0.25" stop-color="#f2d000"/><stop offset="0.32" stop-color="#f2d000"/><stop offset="0.39" stop-color="#28e050"/><stop offset="1" stop-color="#1ee85a"/></linearGradient></defs><rect x="10.1" y="46.8" width="8.1" height="224.8" fill="url(#g244_1)"/><rect x="1.5" y="28.8" width="16.5" height="1.5" fill="#8a8a8a"/><rect x="1.5" y="45.5" width="16.5" height="1.6" fill="#f09020"/><rect x="9.15" y="2" width="1.2" height="268.8" fill="#555"/><rect x="9.15" y="46.8" width="1.2" height="225" fill="#0d3a18"/></svg>
<div style="left:237.07px;top:607.9px;width:5px;height:1.3px;background:#555;"></div>
<div style="left:237.07px;top:635.4px;width:5px;height:1.3px;background:#555;"></div>
<div style="left:237.07px;top:662.4px;width:5px;height:1.3px;background:#555;"></div>
<div style="left:237.07px;top:688.4px;width:5px;height:1.3px;background:#555;"></div>
<div style="left:237.07px;top:715.2px;width:5px;height:1.3px;background:#555;"></div>
<div style="left:237.07px;top:742.2px;width:5px;height:1.3px;background:#555;"></div>
<div style="left:237.07px;top:769.6px;width:5px;height:1.3px;background:#555;"></div>
<div style="left:237.07px;top:793.8px;width:5px;height:1.3px;background:#555;"></div>
<div style="left:237.07px;top:813.4px;width:5px;height:1.3px;background:#555;"></div>
<div style="left:237.07px;top:831.7px;width:5px;height:1.3px;background:#555;"></div>
<div style="left:237.07px;top:848.4px;width:5px;height:1.3px;background:#555;"></div>
<div style="left:237.07px;top:861.8px;width:5px;height:1.3px;background:#555;"></div>
<div style="left:237.07px;top:874px;width:5px;height:1.3px;background:#555;"></div>
<div class="t" style="left:268.57px;top:604px;width:300px;height:20px;line-height:20px;text-align:left;font-size:14px;color:#2a2a2a;-webkit-text-stroke:0.25px #2a2a2a;">6</div>
<div class="t" style="left:268.57px;top:625.4px;width:300px;height:20px;line-height:20px;text-align:left;font-size:14px;color:#2a2a2a;-webkit-text-stroke:0.25px #2a2a2a;">0</div>
<div class="t" style="left:268.57px;top:652px;width:300px;height:20px;line-height:20px;text-align:left;font-size:14px;color:#2a2a2a;-webkit-text-stroke:0.25px #2a2a2a;">6</div>
<div class="t" style="left:268.57px;top:678.5px;width:300px;height:20px;line-height:20px;text-align:left;font-size:14px;color:#2a2a2a;-webkit-text-stroke:0.25px #2a2a2a;">12</div>
<div class="t" style="left:268.57px;top:705.5px;width:300px;height:20px;line-height:20px;text-align:left;font-size:14px;color:#2a2a2a;-webkit-text-stroke:0.25px #2a2a2a;">18</div>
<div class="t" style="left:268.57px;top:733px;width:300px;height:20px;line-height:20px;text-align:left;font-size:14px;color:#2a2a2a;-webkit-text-stroke:0.25px #2a2a2a;">24</div>
<div class="t" style="left:268.57px;top:760px;width:300px;height:20px;line-height:20px;text-align:left;font-size:14px;color:#2a2a2a;-webkit-text-stroke:0.25px #2a2a2a;">30</div>
<div class="t" style="left:268.57px;top:784px;width:300px;height:20px;line-height:20px;text-align:left;font-size:14px;color:#2a2a2a;-webkit-text-stroke:0.25px #2a2a2a;">36</div>
<div class="t" style="left:268.57px;top:804px;width:300px;height:20px;line-height:20px;text-align:left;font-size:14px;color:#2a2a2a;-webkit-text-stroke:0.25px #2a2a2a;">42</div>
<div class="t" style="left:268.57px;top:822.2px;width:300px;height:20px;line-height:20px;text-align:left;font-size:14px;color:#2a2a2a;-webkit-text-stroke:0.25px #2a2a2a;">48</div>
<div class="t" style="left:268.57px;top:852px;width:300px;height:20px;line-height:20px;text-align:left;font-size:14px;color:#2a2a2a;-webkit-text-stroke:0.25px #2a2a2a;">60</div>
<svg style="position:absolute;left:188.77px;top:744px;" width="11" height="6" viewBox="0 0 11 6"><path d="M0 0H11L5.5 6Z" fill="#111"/></svg>
<svg style="position:absolute;left:169.47px;top:745.6px;" width="49.6" height="49.6" viewBox="0 0 49.6 49.6"><path d="M14.29 40.39A18.8 18.8 0 0 1 20.25 6.56" fill="none" stroke="#1a1a1a" stroke-width="3.2"/><path d="M29.35 6.56A18.8 18.8 0 0 1 35.31 40.39" fill="none" stroke="#1a1a1a" stroke-width="3.2"/><line x1="24.8" y1="24.8" x2="24.8" y2="6.38" stroke="#1a1a1a" stroke-width="3.2" stroke-linecap="round"/></svg>
<div style="left:177.17px;top:794px;width:34px;height:34px;background:#ffab12;border:1.3px solid #6a4a10;"></div>
<div class="t" style="left:44.17px;top:801.5px;width:300px;height:20px;line-height:20px;text-align:center;font-size:19px;font-weight:bold;color:#111;">2</div>
<div style="left:177.17px;top:835.4px;width:34px;height:18px;background:#d9d9d9;border:1.3px solid #2e2e2e;"></div>
<div class="t" style="left:44.17px;top:834.4px;width:300px;height:20px;line-height:20px;text-align:center;font-size:15px;color:#111;">S</div>
<div style="left:177.17px;top:860.8px;width:34px;height:18.6px;background:#d9d9d9;border:1.3px solid #2e2e2e;"></div>
<div style="left:188.97px;top:865px;width:10.6px;height:10.6px;background:#6a6a6a;border-radius:50%;"></div>
<div style="left:156.57px;top:891px;width:140.8px;height:11px;background:#1ee8fe;"></div>
<div style="left:300.14px;top:483px;width:140.8px;height:25.5px;background:#9d9d9d;"></div>
<div style="left:306.64px;top:489px;width:13px;height:13px;background:#555555;"></div>
<div class="t" style="left:199.14px;top:486px;width:300px;height:20px;line-height:20px;text-align:center;font-size:15px;color:#151515;-webkit-text-stroke:0.4px #151515;">9</div>
<svg style="position:absolute;left:373.14px;top:486px;" width="20" height="20" viewBox="0 0 20 20"><circle cx="10" cy="10" r="8" fill="#fdea32"/><path d="M10 10L10 2.6A7.4 7.4 0 0 1 15.07 4.61Z" fill="rgba(0,0,0,0.16)"/><circle cx="10" cy="10" r="8" fill="none" stroke="rgba(0,0,0,0.5)" stroke-width="1.4"/></svg>
<div class="t" style="left:267.14px;top:486px;width:300px;height:20px;line-height:20px;text-align:center;font-size:15px;color:#151515;-webkit-text-stroke:0.4px #151515;">8</div>
<div style="left:300.14px;top:511px;width:140.8px;height:83.5px;background:#9d9d9d;"></div>
<div class="t" style="left:372.14px;top:517.4px;width:300px;height:20px;line-height:20px;text-align:left;font-size:15px;letter-spacing:0.3px;color:#1a1a1a;-webkit-text-stroke:0.5px #1a1a1a;">Sends</div>
<svg style="position:absolute;left:319.14px;top:512.7px;" width="48.6" height="48.6" viewBox="0 0 48.6 48.6"><path d="M11.59 37.46A18.3 18.3 0 1 1 37.01 37.46" fill="none" stroke="#1a1a1a" stroke-width="2.9"/><line x1="24.3" y1="24.3" x2="15.15" y2="40.15" stroke="#1a1a1a" stroke-width="2.9" stroke-linecap="round"/></svg>
<div class="t" style="left:193.44px;top:546.5px;width:300px;height:20px;line-height:20px;text-align:center;font-size:14px;color:#111;">A</div>
<svg style="position:absolute;left:369.34px;top:537.7px;" width="48.6" height="48.6" viewBox="0 0 48.6 48.6"><path d="M11.59 37.46A18.3 18.3 0 1 1 37.01 37.46" fill="none" stroke="#1a1a1a" stroke-width="2.9"/><line x1="24.3" y1="24.3" x2="15.15" y2="40.15" stroke="#1a1a1a" stroke-width="2.9" stroke-linecap="round"/></svg>
<div class="t" style="left:243.64px;top:571.5px;width:300px;height:20px;line-height:20px;text-align:center;font-size:14px;color:#111;">B</div>
<div style="left:300.14px;top:597.5px;width:140.8px;height:291px;background:#9d9d9d;"></div>
<div style="left:311.64px;top:607.3px;width:52px;height:18px;background:#e3e3e3;border:1.4px solid #2a2a2a;border-radius:9px;"></div>
<div class="t" style="left:187.64px;top:606.3px;width:300px;height:20px;line-height:20px;text-align:center;font-size:15px;color:#111;">-5.95</div>
<div style="left:311.64px;top:634px;width:52px;height:18.7px;background:#dcdcdc;border:1.4px solid #3a3a3a;"></div>
<div class="t" style="left:187.64px;top:633.4px;width:300px;height:20px;line-height:20px;text-align:center;font-size:15px;color:#111;">-6.0</div>
<svg style="position:absolute;left:370.14px;top:654px;" width="16" height="18" viewBox="0 0 16 18"><path d="M0 0L16 9L0 18Z" fill="#111"/></svg>
<svg style="position:absolute;left:388.14px;top:606.7px;" width="19.5" height="272.8" viewBox="0 0 19.5 272.8"><rect x="0" y="0" width="19.5" height="272.8" rx="2.5" fill="#242424"/><defs><linearGradient id="g388_0" gradientUnits="userSpaceOnUse" x1="0" y1="0" x2="0" y2="272.8"><stop offset="0.21" stop-color="#9a6a18"/><stop offset="0.28" stop-color="#b09018"/><stop offset="0.31" stop-color="#e0d000"/><stop offset="0.39" stop-color="#28e050"/><stop offset="1" stop-color="#1ee85a"/></linearGradient></defs><rect x="1.3" y="56.8" width="8.1" height="214.8" fill="url(#g388_0)"/><defs><linearGradient id="g388_1" gradientUnits="userSpaceOnUse" x1="0" y1="0" x2="0" y2="272.8"><stop offset="0.21" stop-color="#9a6a18"/><stop offset="0.28" stop-color="#b09018"/><stop offset="0.31" stop-color="#e0d000"/><stop offset="0.39" stop-color="#28e050"/><stop offset="1" stop-color="#1ee85a"/></linearGradient></defs><rect x="10.1" y="56.8" width="8.1" height="214.8" fill="url(#g388_1)"/><rect x="1.5" y="28.8" width="16.5" height="1.5" fill="#8a8a8a"/><rect x="1.5" y="55.5" width="16.5" height="1.6" fill="#f0a020"/><rect x="9.15" y="2" width="1.2" height="268.8" fill="#555"/><rect x="9.15" y="56.8" width="1.2" height="215" fill="#0d3a18"/></svg>
<div style="left:380.64px;top:607.9px;width:5px;height:1.3px;background:#555;"></div>
<div style="left:380.64px;top:635.4px;width:5px;height:1.3px;background:#555;"></div>
<div style="left:380.64px;top:662.4px;width:5px;height:1.3px;background:#555;"></div>
<div style="left:380.64px;top:688.4px;width:5px;height:1.3px;background:#555;"></div>
<div style="left:380.64px;top:715.2px;width:5px;height:1.3px;background:#555;"></div>
<div style="left:380.64px;top:742.2px;width:5px;height:1.3px;background:#555;"></div>
<div style="left:380.64px;top:769.6px;width:5px;height:1.3px;background:#555;"></div>
<div style="left:380.64px;top:793.8px;width:5px;height:1.3px;background:#555;"></div>
<div style="left:380.64px;top:813.4px;width:5px;height:1.3px;background:#555;"></div>
<div style="left:380.64px;top:831.7px;width:5px;height:1.3px;background:#555;"></div>
<div style="left:380.64px;top:848.4px;width:5px;height:1.3px;background:#555;"></div>
<div style="left:380.64px;top:861.8px;width:5px;height:1.3px;background:#555;"></div>
<div style="left:380.64px;top:874px;width:5px;height:1.3px;background:#555;"></div>
<div class="t" style="left:412.14px;top:604px;width:300px;height:20px;line-height:20px;text-align:left;font-size:14px;color:#2a2a2a;-webkit-text-stroke:0.25px #2a2a2a;">6</div>
<div class="t" style="left:412.14px;top:625.4px;width:300px;height:20px;line-height:20px;text-align:left;font-size:14px;color:#2a2a2a;-webkit-text-stroke:0.25px #2a2a2a;">0</div>
<div class="t" style="left:412.14px;top:652px;width:300px;height:20px;line-height:20px;text-align:left;font-size:14px;color:#2a2a2a;-webkit-text-stroke:0.25px #2a2a2a;">6</div>
<div class="t" style="left:412.14px;top:678.5px;width:300px;height:20px;line-height:20px;text-align:left;font-size:14px;color:#2a2a2a;-webkit-text-stroke:0.25px #2a2a2a;">12</div>
<div class="t" style="left:412.14px;top:705.5px;width:300px;height:20px;line-height:20px;text-align:left;font-size:14px;color:#2a2a2a;-webkit-text-stroke:0.25px #2a2a2a;">18</div>
<div class="t" style="left:412.14px;top:733px;width:300px;height:20px;line-height:20px;text-align:left;font-size:14px;color:#2a2a2a;-webkit-text-stroke:0.25px #2a2a2a;">24</div>
<div class="t" style="left:412.14px;top:760px;width:300px;height:20px;line-height:20px;text-align:left;font-size:14px;color:#2a2a2a;-webkit-text-stroke:0.25px #2a2a2a;">30</div>
<div class="t" style="left:412.14px;top:784px;width:300px;height:20px;line-height:20px;text-align:left;font-size:14px;color:#2a2a2a;-webkit-text-stroke:0.25px #2a2a2a;">36</div>
<div class="t" style="left:412.14px;top:804px;width:300px;height:20px;line-height:20px;text-align:left;font-size:14px;color:#2a2a2a;-webkit-text-stroke:0.25px #2a2a2a;">42</div>
<div class="t" style="left:412.14px;top:822.2px;width:300px;height:20px;line-height:20px;text-align:left;font-size:14px;color:#2a2a2a;-webkit-text-stroke:0.25px #2a2a2a;">48</div>
<div class="t" style="left:412.14px;top:852px;width:300px;height:20px;line-height:20px;text-align:left;font-size:14px;color:#2a2a2a;-webkit-text-stroke:0.25px #2a2a2a;">60</div>
<svg style="position:absolute;left:332.34px;top:744px;" width="11" height="6" viewBox="0 0 11 6"><path d="M0 0H11L5.5 6Z" fill="#111"/></svg>
<svg style="position:absolute;left:313.04px;top:745.6px;" width="49.6" height="49.6" viewBox="0 0 49.6 49.6"><path d="M14.29 40.39A18.8 18.8 0 0 1 20.25 6.56" fill="none" stroke="#1a1a1a" stroke-width="3.2"/><path d="M29.35 6.56A18.8 18.8 0 0 1 35.31 40.39" fill="none" stroke="#1a1a1a" stroke-width="3.2"/><line x1="24.8" y1="24.8" x2="24.8" y2="6.38" stroke="#1a1a1a" stroke-width="3.2" stroke-linecap="round"/></svg>
<div style="left:320.74px;top:794px;width:34px;height:34px;background:#ffab12;border:1.3px solid #6a4a10;"></div>
<div class="t" style="left:187.74px;top:801.5px;width:300px;height:20px;line-height:20px;text-align:center;font-size:19px;font-weight:bold;color:#111;">3</div>
<div style="left:320.74px;top:835.4px;width:34px;height:18px;background:#d9d9d9;border:1.3px solid #2e2e2e;"></div>
<div class="t" style="left:187.74px;top:834.4px;width:300px;height:20px;line-height:20px;text-align:center;font-size:15px;color:#111;">S</div>
<div style="left:320.74px;top:860.8px;width:34px;height:18.6px;background:#d9d9d9;border:1.3px solid #2e2e2e;"></div>
<div style="left:332.54px;top:865px;width:10.6px;height:10.6px;background:#6a6a6a;border-radius:50%;"></div>
<div style="left:300.14px;top:891px;width:140.8px;height:11px;background:#fdea32;"></div>
<div style="left:443.71px;top:483px;width:140.8px;height:25.5px;background:#9d9d9d;"></div>
<div style="left:450.21px;top:489px;width:13px;height:13px;background:#555555;"></div>
<div style="left:443.71px;top:511px;width:140.8px;height:83.5px;background:#9d9d9d;"></div>
<div class="t" style="left:515.71px;top:517.4px;width:300px;height:20px;line-height:20px;text-align:left;font-size:15px;letter-spacing:0.3px;color:#1a1a1a;-webkit-text-stroke:0.5px #1a1a1a;">Sends</div>
<svg style="position:absolute;left:462.71px;top:512.7px;" width="48.6" height="48.6" viewBox="0 0 48.6 48.6"><path d="M11.59 37.46A18.3 18.3 0 1 1 37.01 37.46" fill="none" stroke="#1a1a1a" stroke-width="2.9"/><path d="M11.59 37.46A18.3 18.3 0 0 1 20 6.51" fill="none" stroke="#23d6e8" stroke-width="3.3349999999999995"/><line x1="24.3" y1="24.3" x2="19.56" y2="6.62" stroke="#1a1a1a" stroke-width="2.9" stroke-linecap="round"/></svg>
<div class="t" style="left:337.01px;top:546.5px;width:300px;height:20px;line-height:20px;text-align:center;font-size:14px;color:#111;">A</div>
<svg style="position:absolute;left:512.91px;top:537.7px;" width="48.6" height="48.6" viewBox="0 0 48.6 48.6"><path d="M11.59 37.46A18.3 18.3 0 1 1 37.01 37.46" fill="none" stroke="#1a1a1a" stroke-width="2.9"/><line x1="24.3" y1="24.3" x2="15.15" y2="40.15" stroke="#1a1a1a" stroke-width="2.9" stroke-linecap="round"/></svg>
<div class="t" style="left:387.21px;top:571.5px;width:300px;height:20px;line-height:20px;text-align:center;font-size:14px;color:#111;">B</div>
<div style="left:443.71px;top:597.5px;width:140.8px;height:291px;background:#9d9d9d;"></div>
<div style="left:455.21px;top:607.3px;width:52px;height:18px;background:#e3e3e3;border:1.4px solid #2a2a2a;border-radius:9px;"></div>
<div class="t" style="left:331.21px;top:606.3px;width:300px;height:20px;line-height:20px;text-align:center;font-size:15px;color:#111;"><span style="font-size:13px;position:relative;top:-1px">&minus;</span><span style="font-size:18px;letter-spacing:-1px">&infin;</span></div>
<div style="left:455.21px;top:634px;width:52px;height:18.7px;background:#dcdcdc;border:1.4px solid #3a3a3a;"></div>
<div class="t" style="left:331.21px;top:633.4px;width:300px;height:20px;line-height:20px;text-align:center;font-size:15px;color:#111;">0</div>
<svg style="position:absolute;left:513.71px;top:626.5px;" width="16" height="18" viewBox="0 0 16 18"><path d="M0 0L16 9L0 18Z" fill="#111"/></svg>
<svg style="position:absolute;left:531.71px;top:606.7px;" width="19.5" height="272.8" viewBox="0 0 19.5 272.8"><rect x="0" y="0" width="19.5" height="272.8" rx="2.5" fill="#242424"/><rect x="1.5" y="28.8" width="16.5" height="1.5" fill="#8a8a8a"/><rect x="9.15" y="2" width="1.2" height="268.8" fill="#555"/></svg>
<div style="left:524.21px;top:607.9px;width:5px;height:1.3px;background:#555;"></div>
<div style="left:524.21px;top:635.4px;width:5px;height:1.3px;background:#555;"></div>
<div style="left:524.21px;top:662.4px;width:5px;height:1.3px;background:#555;"></div>
<div style="left:524.21px;top:688.4px;width:5px;height:1.3px;background:#555;"></div>
<div style="left:524.21px;top:715.2px;width:5px;height:1.3px;background:#555;"></div>
<div style="left:524.21px;top:742.2px;width:5px;height:1.3px;background:#555;"></div>
<div style="left:524.21px;top:769.6px;width:5px;height:1.3px;background:#555;"></div>
<div style="left:524.21px;top:793.8px;width:5px;height:1.3px;background:#555;"></div>
<div style="left:524.21px;top:813.4px;width:5px;height:1.3px;background:#555;"></div>
<div style="left:524.21px;top:831.7px;width:5px;height:1.3px;background:#555;"></div>
<div style="left:524.21px;top:848.4px;width:5px;height:1.3px;background:#555;"></div>
<div style="left:524.21px;top:861.8px;width:5px;height:1.3px;background:#555;"></div>
<div style="left:524.21px;top:874px;width:5px;height:1.3px;background:#555;"></div>
<div class="t" style="left:555.71px;top:604px;width:300px;height:20px;line-height:20px;text-align:left;font-size:14px;color:#2a2a2a;-webkit-text-stroke:0.25px #2a2a2a;">6</div>
<div class="t" style="left:555.71px;top:625.4px;width:300px;height:20px;line-height:20px;text-align:left;font-size:14px;color:#2a2a2a;-webkit-text-stroke:0.25px #2a2a2a;">0</div>
<div class="t" style="left:555.71px;top:652px;width:300px;height:20px;line-height:20px;text-align:left;font-size:14px;color:#2a2a2a;-webkit-text-stroke:0.25px #2a2a2a;">6</div>
<div class="t" style="left:555.71px;top:678.5px;width:300px;height:20px;line-height:20px;text-align:left;font-size:14px;color:#2a2a2a;-webkit-text-stroke:0.25px #2a2a2a;">12</div>
<div class="t" style="left:555.71px;top:705.5px;width:300px;height:20px;line-height:20px;text-align:left;font-size:14px;color:#2a2a2a;-webkit-text-stroke:0.25px #2a2a2a;">18</div>
<div class="t" style="left:555.71px;top:733px;width:300px;height:20px;line-height:20px;text-align:left;font-size:14px;color:#2a2a2a;-webkit-text-stroke:0.25px #2a2a2a;">24</div>
<div class="t" style="left:555.71px;top:760px;width:300px;height:20px;line-height:20px;text-align:left;font-size:14px;color:#2a2a2a;-webkit-text-stroke:0.25px #2a2a2a;">30</div>
<div class="t" style="left:555.71px;top:784px;width:300px;height:20px;line-height:20px;text-align:left;font-size:14px;color:#2a2a2a;-webkit-text-stroke:0.25px #2a2a2a;">36</div>
<div class="t" style="left:555.71px;top:804px;width:300px;height:20px;line-height:20px;text-align:left;font-size:14px;color:#2a2a2a;-webkit-text-stroke:0.25px #2a2a2a;">42</div>
<div class="t" style="left:555.71px;top:822.2px;width:300px;height:20px;line-height:20px;text-align:left;font-size:14px;color:#2a2a2a;-webkit-text-stroke:0.25px #2a2a2a;">48</div>
<div class="t" style="left:555.71px;top:852px;width:300px;height:20px;line-height:20px;text-align:left;font-size:14px;color:#2a2a2a;-webkit-text-stroke:0.25px #2a2a2a;">60</div>
<svg style="position:absolute;left:475.91px;top:744px;" width="11" height="6" viewBox="0 0 11 6"><path d="M0 0H11L5.5 6Z" fill="#111"/></svg>
<svg style="position:absolute;left:456.61px;top:745.6px;" width="49.6" height="49.6" viewBox="0 0 49.6 49.6"><path d="M14.29 40.39A18.8 18.8 0 0 1 20.25 6.56" fill="none" stroke="#1a1a1a" stroke-width="3.2"/><path d="M29.35 6.56A18.8 18.8 0 0 1 35.31 40.39" fill="none" stroke="#1a1a1a" stroke-width="3.2"/><line x1="24.8" y1="24.8" x2="24.8" y2="6.38" stroke="#1a1a1a" stroke-width="3.2" stroke-linecap="round"/></svg>
<div style="left:464.31px;top:794px;width:34px;height:34px;background:#ffab12;border:1.3px solid #6a4a10;"></div>
<div class="t" style="left:331.31px;top:801.5px;width:300px;height:20px;line-height:20px;text-align:center;font-size:19px;font-weight:bold;color:#111;">4</div>
<div style="left:464.31px;top:835.4px;width:34px;height:18px;background:#d9d9d9;border:1.3px solid #2e2e2e;"></div>
<div class="t" style="left:331.31px;top:834.4px;width:300px;height:20px;line-height:20px;text-align:center;font-size:15px;color:#111;">S</div>
<div style="left:464.31px;top:860.8px;width:34px;height:18.6px;background:#d9d9d9;border:1.3px solid #2e2e2e;"></div>
<svg style="position:absolute;left:475.51px;top:864.3px;" width="12" height="12" viewBox="0 0 12 12"><circle cx="6" cy="6" r="5.4" fill="#111"/><path d="M7.2 2.6V7.6A2 2 0 1 1 5.6 6" fill="none" stroke="#e0e0e0" stroke-width="1.3"/></svg>
<div style="left:443.71px;top:891px;width:140.8px;height:11px;background:#13b8a5;"></div>
<div style="left:587.28px;top:483px;width:140.8px;height:25.5px;background:#b1b1b1;"></div>
<div style="left:593.78px;top:489px;width:13px;height:13px;background:#555555;"></div>
<div class="t" style="left:486.28px;top:486px;width:300px;height:20px;line-height:20px;text-align:center;font-size:15px;color:#151515;-webkit-text-stroke:0.4px #151515;">17</div>
<svg style="position:absolute;left:660.28px;top:486px;" width="20" height="20" viewBox="0 0 20 20"><circle cx="10" cy="10" r="8" fill="#fe6712"/><path d="M10 10L10 2.6A7.4 7.4 0 0 1 17.27 11.39Z" fill="rgba(0,0,0,0.16)"/><circle cx="10" cy="10" r="8" fill="none" stroke="rgba(0,0,0,0.5)" stroke-width="1.4"/></svg>
<div class="t" style="left:554.28px;top:486px;width:300px;height:20px;line-height:20px;text-align:center;font-size:15px;color:#151515;-webkit-text-stroke:0.4px #151515;">4</div>
<div style="left:587.28px;top:511px;width:140.8px;height:83.5px;background:#b1b1b1;"></div>
<div class="t" style="left:659.28px;top:517.4px;width:300px;height:20px;line-height:20px;text-align:left;font-size:15px;letter-spacing:0.3px;color:#1a1a1a;-webkit-text-stroke:0.5px #1a1a1a;">Sends</div>
<svg style="position:absolute;left:606.28px;top:512.7px;" width="48.6" height="48.6" viewBox="0 0 48.6 48.6"><path d="M11.59 37.46A18.3 18.3 0 1 1 37.01 37.46" fill="none" stroke="#1a1a1a" stroke-width="2.9"/><line x1="24.3" y1="24.3" x2="15.15" y2="40.15" stroke="#1a1a1a" stroke-width="2.9" stroke-linecap="round"/></svg>
<div class="t" style="left:480.58px;top:546.5px;width:300px;height:20px;line-height:20px;text-align:center;font-size:14px;color:#111;">A</div>
<svg style="position:absolute;left:656.48px;top:537.7px;" width="48.6" height="48.6" viewBox="0 0 48.6 48.6"><path d="M11.59 37.46A18.3 18.3 0 1 1 37.01 37.46" fill="none" stroke="#1a1a1a" stroke-width="2.9"/><line x1="24.3" y1="24.3" x2="15.15" y2="40.15" stroke="#1a1a1a" stroke-width="2.9" stroke-linecap="round"/></svg>
<div class="t" style="left:530.78px;top:571.5px;width:300px;height:20px;line-height:20px;text-align:center;font-size:14px;color:#111;">B</div>
<div style="left:587.28px;top:597.5px;width:140.8px;height:291px;background:#b1b1b1;"></div>
<div style="left:598.78px;top:607.3px;width:52px;height:18px;background:#e3e3e3;border:1.4px solid #2a2a2a;border-radius:9px;"></div>
<div class="t" style="left:474.78px;top:606.3px;width:300px;height:20px;line-height:20px;text-align:center;font-size:15px;color:#111;">-9.73</div>
<div style="left:598.78px;top:634px;width:52px;height:18.7px;background:#dcdcdc;border:1.4px solid #3a3a3a;"></div>
<div class="t" style="left:474.78px;top:633.4px;width:300px;height:20px;line-height:20px;text-align:center;font-size:15px;color:#111;">0</div>
<svg style="position:absolute;left:657.28px;top:626.5px;" width="16" height="18" viewBox="0 0 16 18"><path d="M0 0L16 9L0 18Z" fill="#111"/></svg>
<svg style="position:absolute;left:675.28px;top:606.7px;" width="19.5" height="272.8" viewBox="0 0 19.5 272.8"><rect x="0" y="0" width="19.5" height="272.8" rx="2.5" fill="#242424"/><defs><linearGradient id="g675_0" gradientUnits="userSpaceOnUse" x1="0" y1="0" x2="0" y2="272.8"><stop offset="0.4" stop-color="#1ee85a"/><stop offset="1" stop-color="#1ee85a"/></linearGradient></defs><rect x="1.3" y="110.8" width="8.1" height="160.8" fill="url(#g675_0)"/><defs><linearGradient id="g675_1" gradientUnits="userSpaceOnUse" x1="0" y1="0" x2="0" y2="272.8"><stop offset="0.4" stop-color="#1ee85a"/><stop offset="1" stop-color="#1ee85a"/></linearGradient></defs><rect x="10.1" y="110.8" width="8.1" height="160.8" fill="url(#g675_1)"/><rect x="1.5" y="28.8" width="16.5" height="1.5" fill="#8a8a8a"/><rect x="1.5" y="73.2" width="16.5" height="1.6" fill="#e8d020"/><rect x="9.15" y="2" width="1.2" height="268.8" fill="#555"/><rect x="9.15" y="110.8" width="1.2" height="161" fill="#0d3a18"/></svg>
<div style="left:667.78px;top:607.9px;width:5px;height:1.3px;background:#555;"></div>
<div style="left:667.78px;top:635.4px;width:5px;height:1.3px;background:#555;"></div>
<div style="left:667.78px;top:662.4px;width:5px;height:1.3px;background:#555;"></div>
<div style="left:667.78px;top:688.4px;width:5px;height:1.3px;background:#555;"></div>
<div style="left:667.78px;top:715.2px;width:5px;height:1.3px;background:#555;"></div>
<div style="left:667.78px;top:742.2px;width:5px;height:1.3px;background:#555;"></div>
<div style="left:667.78px;top:769.6px;width:5px;height:1.3px;background:#555;"></div>
<div style="left:667.78px;top:793.8px;width:5px;height:1.3px;background:#555;"></div>
<div style="left:667.78px;top:813.4px;width:5px;height:1.3px;background:#555;"></div>
<div style="left:667.78px;top:831.7px;width:5px;height:1.3px;background:#555;"></div>
<div style="left:667.78px;top:848.4px;width:5px;height:1.3px;background:#555;"></div>
<div style="left:667.78px;top:861.8px;width:5px;height:1.3px;background:#555;"></div>
<div style="left:667.78px;top:874px;width:5px;height:1.3px;background:#555;"></div>
<div class="t" style="left:699.28px;top:604px;width:300px;height:20px;line-height:20px;text-align:left;font-size:14px;color:#2a2a2a;-webkit-text-stroke:0.25px #2a2a2a;">6</div>
<div class="t" style="left:699.28px;top:625.4px;width:300px;height:20px;line-height:20px;text-align:left;font-size:14px;color:#2a2a2a;-webkit-text-stroke:0.25px #2a2a2a;">0</div>
<div class="t" style="left:699.28px;top:652px;width:300px;height:20px;line-height:20px;text-align:left;font-size:14px;color:#2a2a2a;-webkit-text-stroke:0.25px #2a2a2a;">6</div>
<div class="t" style="left:699.28px;top:678.5px;width:300px;height:20px;line-height:20px;text-align:left;font-size:14px;color:#2a2a2a;-webkit-text-stroke:0.25px #2a2a2a;">12</div>
<div class="t" style="left:699.28px;top:705.5px;width:300px;height:20px;line-height:20px;text-align:left;font-size:14px;color:#2a2a2a;-webkit-text-stroke:0.25px #2a2a2a;">18</div>
<div class="t" style="left:699.28px;top:733px;width:300px;height:20px;line-height:20px;text-align:left;font-size:14px;color:#2a2a2a;-webkit-text-stroke:0.25px #2a2a2a;">24</div>
<div class="t" style="left:699.28px;top:760px;width:300px;height:20px;line-height:20px;text-align:left;font-size:14px;color:#2a2a2a;-webkit-text-stroke:0.25px #2a2a2a;">30</div>
<div class="t" style="left:699.28px;top:784px;width:300px;height:20px;line-height:20px;text-align:left;font-size:14px;color:#2a2a2a;-webkit-text-stroke:0.25px #2a2a2a;">36</div>
<div class="t" style="left:699.28px;top:804px;width:300px;height:20px;line-height:20px;text-align:left;font-size:14px;color:#2a2a2a;-webkit-text-stroke:0.25px #2a2a2a;">42</div>
<div class="t" style="left:699.28px;top:822.2px;width:300px;height:20px;line-height:20px;text-align:left;font-size:14px;color:#2a2a2a;-webkit-text-stroke:0.25px #2a2a2a;">48</div>
<div class="t" style="left:699.28px;top:852px;width:300px;height:20px;line-height:20px;text-align:left;font-size:14px;color:#2a2a2a;-webkit-text-stroke:0.25px #2a2a2a;">60</div>
<svg style="position:absolute;left:619.48px;top:744px;" width="11" height="6" viewBox="0 0 11 6"><path d="M0 0H11L5.5 6Z" fill="#111"/></svg>
<svg style="position:absolute;left:600.18px;top:745.6px;" width="49.6" height="49.6" viewBox="0 0 49.6 49.6"><path d="M14.29 40.39A18.8 18.8 0 0 1 20.25 6.56" fill="none" stroke="#1a1a1a" stroke-width="3.2"/><path d="M29.35 6.56A18.8 18.8 0 0 1 35.31 40.39" fill="none" stroke="#1a1a1a" stroke-width="3.2"/><line x1="24.8" y1="24.8" x2="24.8" y2="6.38" stroke="#1a1a1a" stroke-width="3.2" stroke-linecap="round"/></svg>
<div style="left:607.88px;top:794px;width:34px;height:34px;background:#ffab12;border:1.3px solid #6a4a10;"></div>
<div class="t" style="left:474.88px;top:801.5px;width:300px;height:20px;line-height:20px;text-align:center;font-size:19px;font-weight:bold;color:#111;">5</div>
<div style="left:607.88px;top:835.4px;width:34px;height:18px;background:#d9d9d9;border:1.3px solid #2e2e2e;"></div>
<div class="t" style="left:474.88px;top:834.4px;width:300px;height:20px;line-height:20px;text-align:center;font-size:15px;color:#111;">S</div>
<div style="left:607.88px;top:860.8px;width:34px;height:18.6px;background:#d9d9d9;border:1.3px solid #2e2e2e;"></div>
<svg style="position:absolute;left:619.08px;top:864.3px;" width="12" height="12" viewBox="0 0 12 12"><circle cx="6" cy="6" r="5.4" fill="#111"/><path d="M7.2 2.6V7.6A2 2 0 1 1 5.6 6" fill="none" stroke="#e0e0e0" stroke-width="1.3"/></svg>
<div style="left:587.28px;top:891px;width:140.8px;height:11px;background:#fe6712;"></div>
<div style="left:730.85px;top:483px;width:140.8px;height:25.5px;background:#9d9d9d;"></div>
<div style="left:737.35px;top:489px;width:13px;height:13px;background:#555555;"></div>
<div style="left:730.85px;top:511px;width:140.8px;height:83.5px;background:#9d9d9d;"></div>
<div class="t" style="left:802.85px;top:517.4px;width:300px;height:20px;line-height:20px;text-align:left;font-size:15px;letter-spacing:0.3px;color:#1a1a1a;-webkit-text-stroke:0.5px #1a1a1a;">Sends</div>
<svg style="position:absolute;left:749.85px;top:512.7px;" width="48.6" height="48.6" viewBox="0 0 48.6 48.6"><path d="M11.59 37.46A18.3 18.3 0 1 1 37.01 37.46" fill="none" stroke="#1a1a1a" stroke-width="2.9"/><path d="M11.59 37.46A18.3 18.3 0 1 1 38.1 12.28" fill="none" stroke="#23d6e8" stroke-width="3.3349999999999995"/><line x1="24.3" y1="24.3" x2="39.11" y2="13.54" stroke="#1a1a1a" stroke-width="2.9" stroke-linecap="round"/></svg>
<div class="t" style="left:624.15px;top:546.5px;width:300px;height:20px;line-height:20px;text-align:center;font-size:14px;color:#111;">A</div>
<svg style="position:absolute;left:800.05px;top:537.7px;" width="48.6" height="48.6" viewBox="0 0 48.6 48.6"><path d="M11.59 37.46A18.3 18.3 0 1 1 37.01 37.46" fill="none" stroke="#1a1a1a" stroke-width="2.9"/><line x1="24.3" y1="24.3" x2="15.15" y2="40.15" stroke="#1a1a1a" stroke-width="2.9" stroke-linecap="round"/></svg>
<div class="t" style="left:674.35px;top:571.5px;width:300px;height:20px;line-height:20px;text-align:center;font-size:14px;color:#111;">B</div>
<div style="left:730.85px;top:597.5px;width:140.8px;height:291px;background:#9d9d9d;"></div>
<div style="left:742.35px;top:607.3px;width:52px;height:18px;background:#e3e3e3;border:1.4px solid #2a2a2a;border-radius:9px;"></div>
<div class="t" style="left:618.35px;top:606.3px;width:300px;height:20px;line-height:20px;text-align:center;font-size:15px;color:#111;"><span style="font-size:13px;position:relative;top:-1px">&minus;</span><span style="font-size:18px;letter-spacing:-1px">&infin;</span></div>
<div style="left:742.35px;top:634px;width:52px;height:18.7px;background:#dcdcdc;border:1.4px solid #3a3a3a;"></div>
<div class="t" style="left:618.35px;top:633.4px;width:300px;height:20px;line-height:20px;text-align:center;font-size:15px;color:#111;">-3.3</div>
<svg style="position:absolute;left:800.85px;top:642.6px;" width="16" height="18" viewBox="0 0 16 18"><path d="M0 0L16 9L0 18Z" fill="#111"/></svg>
<svg style="position:absolute;left:818.85px;top:606.7px;" width="19.5" height="272.8" viewBox="0 0 19.5 272.8"><rect x="0" y="0" width="19.5" height="272.8" rx="2.5" fill="#242424"/><rect x="1.5" y="28.8" width="16.5" height="1.5" fill="#8a8a8a"/><rect x="9.15" y="2" width="1.2" height="268.8" fill="#555"/></svg>
<div style="left:811.35px;top:607.9px;width:5px;height:1.3px;background:#555;"></div>
<div style="left:811.35px;top:635.4px;width:5px;height:1.3px;background:#555;"></div>
<div style="left:811.35px;top:662.4px;width:5px;height:1.3px;background:#555;"></div>
<div style="left:811.35px;top:688.4px;width:5px;height:1.3px;background:#555;"></div>
<div style="left:811.35px;top:715.2px;width:5px;height:1.3px;background:#555;"></div>
<div style="left:811.35px;top:742.2px;width:5px;height:1.3px;background:#555;"></div>
<div style="left:811.35px;top:769.6px;width:5px;height:1.3px;background:#555;"></div>
<div style="left:811.35px;top:793.8px;width:5px;height:1.3px;background:#555;"></div>
<div style="left:811.35px;top:813.4px;width:5px;height:1.3px;background:#555;"></div>
<div style="left:811.35px;top:831.7px;width:5px;height:1.3px;background:#555;"></div>
<div style="left:811.35px;top:848.4px;width:5px;height:1.3px;background:#555;"></div>
<div style="left:811.35px;top:861.8px;width:5px;height:1.3px;background:#555;"></div>
<div style="left:811.35px;top:874px;width:5px;height:1.3px;background:#555;"></div>
<div class="t" style="left:842.85px;top:604px;width:300px;height:20px;line-height:20px;text-align:left;font-size:14px;color:#2a2a2a;-webkit-text-stroke:0.25px #2a2a2a;">6</div>
<div class="t" style="left:842.85px;top:625.4px;width:300px;height:20px;line-height:20px;text-align:left;font-size:14px;color:#2a2a2a;-webkit-text-stroke:0.25px #2a2a2a;">0</div>
<div class="t" style="left:842.85px;top:652px;width:300px;height:20px;line-height:20px;text-align:left;font-size:14px;color:#2a2a2a;-webkit-text-stroke:0.25px #2a2a2a;">6</div>
<div class="t" style="left:842.85px;top:678.5px;width:300px;height:20px;line-height:20px;text-align:left;font-size:14px;color:#2a2a2a;-webkit-text-stroke:0.25px #2a2a2a;">12</div>
<div class="t" style="left:842.85px;top:705.5px;width:300px;height:20px;line-height:20px;text-align:left;font-size:14px;color:#2a2a2a;-webkit-text-stroke:0.25px #2a2a2a;">18</div>
<div class="t" style="left:842.85px;top:733px;width:300px;height:20px;line-height:20px;text-align:left;font-size:14px;color:#2a2a2a;-webkit-text-stroke:0.25px #2a2a2a;">24</div>
<div class="t" style="left:842.85px;top:760px;width:300px;height:20px;line-height:20px;text-align:left;font-size:14px;color:#2a2a2a;-webkit-text-stroke:0.25px #2a2a2a;">30</div>
<div class="t" style="left:842.85px;top:784px;width:300px;height:20px;line-height:20px;text-align:left;font-size:14px;color:#2a2a2a;-webkit-text-stroke:0.25px #2a2a2a;">36</div>
<div class="t" style="left:842.85px;top:804px;width:300px;height:20px;line-height:20px;text-align:left;font-size:14px;color:#2a2a2a;-webkit-text-stroke:0.25px #2a2a2a;">42</div>
<div class="t" style="left:842.85px;top:822.2px;width:300px;height:20px;line-height:20px;text-align:left;font-size:14px;color:#2a2a2a;-webkit-text-stroke:0.25px #2a2a2a;">48</div>
<div class="t" style="left:842.85px;top:852px;width:300px;height:20px;line-height:20px;text-align:left;font-size:14px;color:#2a2a2a;-webkit-text-stroke:0.25px #2a2a2a;">60</div>
<svg style="position:absolute;left:763.05px;top:744px;" width="11" height="6" viewBox="0 0 11 6"><path d="M0 0H11L5.5 6Z" fill="#111"/></svg>
<svg style="position:absolute;left:743.75px;top:745.6px;" width="49.6" height="49.6" viewBox="0 0 49.6 49.6"><path d="M14.29 40.39A18.8 18.8 0 0 1 20.25 6.56" fill="none" stroke="#1a1a1a" stroke-width="3.2"/><path d="M29.35 6.56A18.8 18.8 0 0 1 35.31 40.39" fill="none" stroke="#1a1a1a" stroke-width="3.2"/><line x1="24.8" y1="24.8" x2="24.8" y2="6.38" stroke="#1a1a1a" stroke-width="3.2" stroke-linecap="round"/></svg>
<div style="left:751.45px;top:794px;width:34px;height:34px;background:#ffab12;border:1.3px solid #6a4a10;"></div>
<div class="t" style="left:618.45px;top:801.5px;width:300px;height:20px;line-height:20px;text-align:center;font-size:19px;font-weight:bold;color:#111;">6</div>
<div style="left:751.45px;top:835.4px;width:34px;height:18px;background:#d9d9d9;border:1.3px solid #2e2e2e;"></div>
<div class="t" style="left:618.45px;top:834.4px;width:300px;height:20px;line-height:20px;text-align:center;font-size:15px;color:#111;">S</div>
<div style="left:751.45px;top:860.8px;width:34px;height:18.6px;background:#d9d9d9;border:1.3px solid #2e2e2e;"></div>
<div style="left:763.25px;top:865px;width:10.6px;height:10.6px;background:#6a6a6a;border-radius:50%;"></div>
<div style="left:730.85px;top:891px;width:140.8px;height:11px;background:#fe9b2c;"></div>
<div style="left:874.42px;top:483px;width:140.8px;height:25.5px;background:#9d9d9d;"></div>
<div style="left:880.92px;top:489px;width:13px;height:13px;background:#555555;"></div>
<div style="left:874.42px;top:511px;width:140.8px;height:83.5px;background:#9d9d9d;"></div>
<div class="t" style="left:946.42px;top:517.4px;width:300px;height:20px;line-height:20px;text-align:left;font-size:15px;letter-spacing:0.3px;color:#1a1a1a;-webkit-text-stroke:0.5px #1a1a1a;">Sends</div>
<svg style="position:absolute;left:893.42px;top:512.7px;" width="48.6" height="48.6" viewBox="0 0 48.6 48.6"><path d="M11.59 37.46A18.3 18.3 0 1 1 37.01 37.46" fill="none" stroke="#1a1a1a" stroke-width="2.9"/><path d="M11.59 37.46A18.3 18.3 0 0 1 7.33 17.44" fill="none" stroke="#23d6e8" stroke-width="3.3349999999999995"/><line x1="24.3" y1="24.3" x2="6.62" y2="19.56" stroke="#1a1a1a" stroke-width="2.9" stroke-linecap="round"/></svg>
<div class="t" style="left:767.72px;top:546.5px;width:300px;height:20px;line-height:20px;text-align:center;font-size:14px;color:#111;">A</div>
<svg style="position:absolute;left:943.62px;top:537.7px;" width="48.6" height="48.6" viewBox="0 0 48.6 48.6"><path d="M11.59 37.46A18.3 18.3 0 1 1 37.01 37.46" fill="none" stroke="#1a1a1a" stroke-width="2.9"/><line x1="24.3" y1="24.3" x2="15.15" y2="40.15" stroke="#1a1a1a" stroke-width="2.9" stroke-linecap="round"/></svg>
<div class="t" style="left:817.92px;top:571.5px;width:300px;height:20px;line-height:20px;text-align:center;font-size:14px;color:#111;">B</div>
<div style="left:874.42px;top:597.5px;width:140.8px;height:291px;background:#9d9d9d;"></div>
<div style="left:885.92px;top:607.3px;width:52px;height:18px;background:#e3e3e3;border:1.4px solid #2a2a2a;border-radius:9px;"></div>
<div class="t" style="left:761.92px;top:606.3px;width:300px;height:20px;line-height:20px;text-align:center;font-size:15px;color:#111;"><span style="font-size:13px;position:relative;top:-1px">&minus;</span><span style="font-size:18px;letter-spacing:-1px">&infin;</span></div>
<div style="left:885.92px;top:634px;width:52px;height:18.7px;background:#dcdcdc;border:1.4px solid #3a3a3a;"></div>
<div class="t" style="left:761.92px;top:633.4px;width:300px;height:20px;line-height:20px;text-align:center;font-size:15px;color:#111;">0</div>
<svg style="position:absolute;left:944.42px;top:626.5px;" width="16" height="18" viewBox="0 0 16 18"><path d="M0 0L16 9L0 18Z" fill="#111"/></svg>
<svg style="position:absolute;left:962.42px;top:606.7px;" width="19.5" height="272.8" viewBox="0 0 19.5 272.8"><rect x="0" y="0" width="19.5" height="272.8" rx="2.5" fill="#242424"/><rect x="1.5" y="28.8" width="16.5" height="1.5" fill="#8a8a8a"/><rect x="9.15" y="2" width="1.2" height="268.8" fill="#555"/></svg>
<div style="left:954.92px;top:607.9px;width:5px;height:1.3px;background:#555;"></div>
<div style="left:954.92px;top:635.4px;width:5px;height:1.3px;background:#555;"></div>
<div style="left:954.92px;top:662.4px;width:5px;height:1.3px;background:#555;"></div>
<div style="left:954.92px;top:688.4px;width:5px;height:1.3px;background:#555;"></div>
<div style="left:954.92px;top:715.2px;width:5px;height:1.3px;background:#555;"></div>
<div style="left:954.92px;top:742.2px;width:5px;height:1.3px;background:#555;"></div>
<div style="left:954.92px;top:769.6px;width:5px;height:1.3px;background:#555;"></div>
<div style="left:954.92px;top:793.8px;width:5px;height:1.3px;background:#555;"></div>
<div style="left:954.92px;top:813.4px;width:5px;height:1.3px;background:#555;"></div>
<div style="left:954.92px;top:831.7px;width:5px;height:1.3px;background:#555;"></div>
<div style="left:954.92px;top:848.4px;width:5px;height:1.3px;background:#555;"></div>
<div style="left:954.92px;top:861.8px;width:5px;height:1.3px;background:#555;"></div>
<div style="left:954.92px;top:874px;width:5px;height:1.3px;background:#555;"></div>
<div class="t" style="left:986.42px;top:604px;width:300px;height:20px;line-height:20px;text-align:left;font-size:14px;color:#2a2a2a;-webkit-text-stroke:0.25px #2a2a2a;">6</div>
<div class="t" style="left:986.42px;top:625.4px;width:300px;height:20px;line-height:20px;text-align:left;font-size:14px;color:#2a2a2a;-webkit-text-stroke:0.25px #2a2a2a;">0</div>
<div class="t" style="left:986.42px;top:652px;width:300px;height:20px;line-height:20px;text-align:left;font-size:14px;color:#2a2a2a;-webkit-text-stroke:0.25px #2a2a2a;">6</div>
<div class="t" style="left:986.42px;top:678.5px;width:300px;height:20px;line-height:20px;text-align:left;font-size:14px;color:#2a2a2a;-webkit-text-stroke:0.25px #2a2a2a;">12</div>
<div class="t" style="left:986.42px;top:705.5px;width:300px;height:20px;line-height:20px;text-align:left;font-size:14px;color:#2a2a2a;-webkit-text-stroke:0.25px #2a2a2a;">18</div>
<div class="t" style="left:986.42px;top:733px;width:300px;height:20px;line-height:20px;text-align:left;font-size:14px;color:#2a2a2a;-webkit-text-stroke:0.25px #2a2a2a;">24</div>
<div class="t" style="left:986.42px;top:760px;width:300px;height:20px;line-height:20px;text-align:left;font-size:14px;color:#2a2a2a;-webkit-text-stroke:0.25px #2a2a2a;">30</div>
<div class="t" style="left:986.42px;top:784px;width:300px;height:20px;line-height:20px;text-align:left;font-size:14px;color:#2a2a2a;-webkit-text-stroke:0.25px #2a2a2a;">36</div>
<div class="t" style="left:986.42px;top:804px;width:300px;height:20px;line-height:20px;text-align:left;font-size:14px;color:#2a2a2a;-webkit-text-stroke:0.25px #2a2a2a;">42</div>
<div class="t" style="left:986.42px;top:822.2px;width:300px;height:20px;line-height:20px;text-align:left;font-size:14px;color:#2a2a2a;-webkit-text-stroke:0.25px #2a2a2a;">48</div>
<div class="t" style="left:986.42px;top:852px;width:300px;height:20px;line-height:20px;text-align:left;font-size:14px;color:#2a2a2a;-webkit-text-stroke:0.25px #2a2a2a;">60</div>
<svg style="position:absolute;left:906.62px;top:744px;" width="11" height="6" viewBox="0 0 11 6"><path d="M0 0H11L5.5 6Z" fill="#111"/></svg>
<svg style="position:absolute;left:887.32px;top:745.6px;" width="49.6" height="49.6" viewBox="0 0 49.6 49.6"><path d="M14.29 40.39A18.8 18.8 0 0 1 20.25 6.56" fill="none" stroke="#1a1a1a" stroke-width="3.2"/><path d="M29.35 6.56A18.8 18.8 0 0 1 35.31 40.39" fill="none" stroke="#1a1a1a" stroke-width="3.2"/><line x1="24.8" y1="24.8" x2="24.8" y2="6.38" stroke="#1a1a1a" stroke-width="3.2" stroke-linecap="round"/></svg>
<div style="left:895.02px;top:794px;width:34px;height:34px;background:#ffab12;border:1.3px solid #6a4a10;"></div>
<div class="t" style="left:762.02px;top:801.5px;width:300px;height:20px;line-height:20px;text-align:center;font-size:19px;font-weight:bold;color:#111;">7</div>
<div style="left:895.02px;top:835.4px;width:34px;height:18px;background:#d9d9d9;border:1.3px solid #2e2e2e;"></div>
<div class="t" style="left:762.02px;top:834.4px;width:300px;height:20px;line-height:20px;text-align:center;font-size:15px;color:#111;">S</div>
<div style="left:895.02px;top:860.8px;width:34px;height:18.6px;background:#d9d9d9;border:1.3px solid #2e2e2e;"></div>
<div style="left:906.82px;top:865px;width:10.6px;height:10.6px;background:#6a6a6a;border-radius:50%;"></div>
<div style="left:874.42px;top:891px;width:140.8px;height:11px;background:#e4479b;"></div>
<div style="left:1017.99px;top:483px;width:140.8px;height:25.5px;background:#9d9d9d;"></div>
<div style="left:1024.49px;top:489px;width:13px;height:13px;background:#555555;"></div>
<div class="t" style="left:916.99px;top:486px;width:300px;height:20px;line-height:20px;text-align:center;font-size:15px;color:#151515;-webkit-text-stroke:0.4px #151515;">5</div>
<svg style="position:absolute;left:1090.99px;top:486px;" width="20" height="20" viewBox="0 0 20 20"><circle cx="10" cy="10" r="8" fill="#b0bae6"/><path d="M10 10L10 2.6A7.4 7.4 0 0 1 13.56 3.52Z" fill="rgba(0,0,0,0.16)"/><circle cx="10" cy="10" r="8" fill="none" stroke="rgba(0,0,0,0.5)" stroke-width="1.4"/></svg>
<div class="t" style="left:984.99px;top:486px;width:300px;height:20px;line-height:20px;text-align:center;font-size:15px;color:#151515;-webkit-text-stroke:0.4px #151515;">16</div>
<div style="left:1017.99px;top:511px;width:140.8px;height:83.5px;background:#9d9d9d;"></div>
<div class="t" style="left:1089.99px;top:517.4px;width:300px;height:20px;line-height:20px;text-align:left;font-size:15px;letter-spacing:0.3px;color:#1a1a1a;-webkit-text-stroke:0.5px #1a1a1a;">Sends</div>
<svg style="position:absolute;left:1036.99px;top:512.7px;" width="48.6" height="48.6" viewBox="0 0 48.6 48.6"><path d="M11.59 37.46A18.3 18.3 0 1 1 37.01 37.46" fill="none" stroke="#1a1a1a" stroke-width="2.9"/><line x1="24.3" y1="24.3" x2="15.15" y2="40.15" stroke="#1a1a1a" stroke-width="2.9" stroke-linecap="round"/></svg>
<div class="t" style="left:911.29px;top:546.5px;width:300px;height:20px;line-height:20px;text-align:center;font-size:14px;color:#111;">A</div>
<svg style="position:absolute;left:1087.19px;top:537.7px;" width="48.6" height="48.6" viewBox="0 0 48.6 48.6"><path d="M11.59 37.46A18.3 18.3 0 1 1 37.01 37.46" fill="none" stroke="#1a1a1a" stroke-width="2.9"/><line x1="24.3" y1="24.3" x2="15.15" y2="40.15" stroke="#1a1a1a" stroke-width="2.9" stroke-linecap="round"/></svg>
<div class="t" style="left:961.49px;top:571.5px;width:300px;height:20px;line-height:20px;text-align:center;font-size:14px;color:#111;">B</div>
<div style="left:1017.99px;top:597.5px;width:140.8px;height:291px;background:#9d9d9d;"></div>
<div style="left:1029.49px;top:607.3px;width:52px;height:18px;background:#e3e3e3;border:1.4px solid #2a2a2a;border-radius:9px;"></div>
<div class="t" style="left:905.49px;top:606.3px;width:300px;height:20px;line-height:20px;text-align:center;font-size:15px;color:#111;">-2.48</div>
<div style="left:1029.49px;top:634px;width:52px;height:18.7px;background:#dcdcdc;border:1.4px solid #3a3a3a;"></div>
<div class="t" style="left:905.49px;top:633.4px;width:300px;height:20px;line-height:20px;text-align:center;font-size:15px;color:#111;">0</div>
<svg style="position:absolute;left:1087.99px;top:626.5px;" width="16" height="18" viewBox="0 0 16 18"><path d="M0 0L16 9L0 18Z" fill="#111"/></svg>
<svg style="position:absolute;left:1105.99px;top:606.7px;" width="19.5" height="272.8" viewBox="0 0 19.5 272.8"><rect x="0" y="0" width="19.5" height="272.8" rx="2.5" fill="#242424"/><defs><linearGradient id="g1105_0" gradientUnits="userSpaceOnUse" x1="0" y1="0" x2="0" y2="272.8"><stop offset="0.51" stop-color="#20b048"/><stop offset="0.52" stop-color="#1ee85a"/><stop offset="1" stop-color="#1ee85a"/></linearGradient></defs><rect x="1.3" y="139.3" width="8.1" height="132.3" fill="url(#g1105_0)"/><defs><linearGradient id="g1105_1" gradientUnits="userSpaceOnUse" x1="0" y1="0" x2="0" y2="272.8"><stop offset="0.55" stop-color="#1ee85a"/><stop offset="1" stop-color="#1ee85a"/></linearGradient></defs><rect x="10.1" y="150.3" width="8.1" height="121.3" fill="url(#g1105_1)"/><rect x="1.5" y="28.8" width="16.5" height="1.5" fill="#8a8a8a"/><rect x="1.5" y="39" width="16.5" height="1.6" fill="#f07020"/><rect x="9.15" y="2" width="1.2" height="268.8" fill="#555"/><rect x="9.15" y="139.3" width="1.2" height="132.5" fill="#0d3a18"/></svg>
<div style="left:1098.49px;top:607.9px;width:5px;height:1.3px;background:#555;"></div>
<div style="left:1098.49px;top:635.4px;width:5px;height:1.3px;background:#555;"></div>
<div style="left:1098.49px;top:662.4px;width:5px;height:1.3px;background:#555;"></div>
<div style="left:1098.49px;top:688.4px;width:5px;height:1.3px;background:#555;"></div>
<div style="left:1098.49px;top:715.2px;width:5px;height:1.3px;background:#555;"></div>
<div style="left:1098.49px;top:742.2px;width:5px;height:1.3px;background:#555;"></div>
<div style="left:1098.49px;top:769.6px;width:5px;height:1.3px;background:#555;"></div>
<div style="left:1098.49px;top:793.8px;width:5px;height:1.3px;background:#555;"></div>
<div style="left:1098.49px;top:813.4px;width:5px;height:1.3px;background:#555;"></div>
<div style="left:1098.49px;top:831.7px;width:5px;height:1.3px;background:#555;"></div>
<div style="left:1098.49px;top:848.4px;width:5px;height:1.3px;background:#555;"></div>
<div style="left:1098.49px;top:861.8px;width:5px;height:1.3px;background:#555;"></div>
<div style="left:1098.49px;top:874px;width:5px;height:1.3px;background:#555;"></div>
<div class="t" style="left:1129.99px;top:604px;width:300px;height:20px;line-height:20px;text-align:left;font-size:14px;color:#2a2a2a;-webkit-text-stroke:0.25px #2a2a2a;">6</div>
<div class="t" style="left:1129.99px;top:625.4px;width:300px;height:20px;line-height:20px;text-align:left;font-size:14px;color:#2a2a2a;-webkit-text-stroke:0.25px #2a2a2a;">0</div>
<div class="t" style="left:1129.99px;top:652px;width:300px;height:20px;line-height:20px;text-align:left;font-size:14px;color:#2a2a2a;-webkit-text-stroke:0.25px #2a2a2a;">6</div>
<div class="t" style="left:1129.99px;top:678.5px;width:300px;height:20px;line-height:20px;text-align:left;font-size:14px;color:#2a2a2a;-webkit-text-stroke:0.25px #2a2a2a;">12</div>
<div class="t" style="left:1129.99px;top:705.5px;width:300px;height:20px;line-height:20px;text-align:left;font-size:14px;color:#2a2a2a;-webkit-text-stroke:0.25px #2a2a2a;">18</div>
<div class="t" style="left:1129.99px;top:733px;width:300px;height:20px;line-height:20px;text-align:left;font-size:14px;color:#2a2a2a;-webkit-text-stroke:0.25px #2a2a2a;">24</div>
<div class="t" style="left:1129.99px;top:760px;width:300px;height:20px;line-height:20px;text-align:left;font-size:14px;color:#2a2a2a;-webkit-text-stroke:0.25px #2a2a2a;">30</div>
<div class="t" style="left:1129.99px;top:784px;width:300px;height:20px;line-height:20px;text-align:left;font-size:14px;color:#2a2a2a;-webkit-text-stroke:0.25px #2a2a2a;">36</div>
<div class="t" style="left:1129.99px;top:804px;width:300px;height:20px;line-height:20px;text-align:left;font-size:14px;color:#2a2a2a;-webkit-text-stroke:0.25px #2a2a2a;">42</div>
<div class="t" style="left:1129.99px;top:822.2px;width:300px;height:20px;line-height:20px;text-align:left;font-size:14px;color:#2a2a2a;-webkit-text-stroke:0.25px #2a2a2a;">48</div>
<div class="t" style="left:1129.99px;top:852px;width:300px;height:20px;line-height:20px;text-align:left;font-size:14px;color:#2a2a2a;-webkit-text-stroke:0.25px #2a2a2a;">60</div>
<svg style="position:absolute;left:1050.19px;top:744px;" width="11" height="6" viewBox="0 0 11 6"><path d="M0 0H11L5.5 6Z" fill="#111"/></svg>
<svg style="position:absolute;left:1030.89px;top:745.6px;" width="49.6" height="49.6" viewBox="0 0 49.6 49.6"><path d="M14.29 40.39A18.8 18.8 0 0 1 20.25 6.56" fill="none" stroke="#1a1a1a" stroke-width="3.2"/><path d="M29.35 6.56A18.8 18.8 0 0 1 35.31 40.39" fill="none" stroke="#1a1a1a" stroke-width="3.2"/><line x1="24.8" y1="24.8" x2="24.8" y2="6.38" stroke="#1a1a1a" stroke-width="3.2" stroke-linecap="round"/></svg>
<div style="left:1038.59px;top:794px;width:34px;height:34px;background:#ffab12;border:1.3px solid #6a4a10;"></div>
<div class="t" style="left:905.59px;top:801.5px;width:300px;height:20px;line-height:20px;text-align:center;font-size:19px;font-weight:bold;color:#111;">8</div>
<div style="left:1038.59px;top:835.4px;width:34px;height:18px;background:#d9d9d9;border:1.3px solid #2e2e2e;"></div>
<div class="t" style="left:905.59px;top:834.4px;width:300px;height:20px;line-height:20px;text-align:center;font-size:15px;color:#111;">S</div>
<div style="left:1038.59px;top:860.8px;width:34px;height:18.6px;background:#d9d9d9;border:1.3px solid #2e2e2e;"></div>
<div style="left:1050.39px;top:865px;width:10.6px;height:10.6px;background:#6a6a6a;border-radius:50%;"></div>
<div style="left:1017.99px;top:891px;width:140.8px;height:11px;background:#b0bae6;"></div>
<div style="left:1161px;top:82px;width:326px;height:819.7px;background:#9c9c9c;"></div>
<div style="left:1161px;top:164.9px;width:326px;height:26.6px;background:#b2b2b2;"></div>
<div class="t" style="left:1174.5px;top:207.5px;width:300px;height:20px;line-height:20px;text-align:center;font-size:15px;letter-spacing:0.4px;color:#1e1e1e;-webkit-text-stroke:0.35px #1e1e1e;">Drop Files and Devices Here</div>
<div style="left:1491.4px;top:82px;width:112px;height:26px;background:#c8b5e2;border-radius:3px 3px 0 0;"></div>
<div class="t" style="left:1496.4px;top:85px;width:300px;height:20px;line-height:20px;text-align:left;font-size:15px;letter-spacing:0.3px;color:rgba(0,0,0,0.8);-webkit-text-stroke:0.55px rgba(0,0,0,0.8);">A Reverb</div>
<div style="left:1491.4px;top:110.8px;width:112px;height:25.8px;background:#9d9d9d;"></div>
<div style="left:1491.4px;top:138px;width:112px;height:25.8px;background:#9d9d9d;"></div>
<div style="left:1491.4px;top:165.2px;width:112px;height:25.8px;background:#b2b2b2;"></div>
<div style="left:1491.4px;top:192.4px;width:112px;height:25.8px;background:#9d9d9d;"></div>
<div style="left:1491.4px;top:219.6px;width:112px;height:25.8px;background:#9d9d9d;"></div>
<div style="left:1491.4px;top:246.8px;width:112px;height:25.8px;background:#9d9d9d;"></div>
<div style="left:1491.4px;top:274px;width:112px;height:25.8px;background:#9d9d9d;"></div>
<div style="left:1491.4px;top:301.2px;width:112px;height:25.8px;background:#9d9d9d;"></div>
<div style="left:1491.4px;top:330px;width:112px;height:150.5px;background:#9d9d9d;"></div>
<div style="left:1491.4px;top:483px;width:112px;height:25.5px;background:#9d9d9d;"></div>
<div style="left:1491.4px;top:511px;width:112px;height:83.5px;background:#9d9d9d;"></div>
<div style="left:1491.4px;top:597.5px;width:112px;height:291px;background:#9d9d9d;"></div>
<div style="left:1491.4px;top:891px;width:112px;height:10.5px;background:#c8b5e2;"></div>
<div style="left:1605.8px;top:82px;width:112.5px;height:26px;background:#7d63e0;border-radius:3px 3px 0 0;"></div>
<div class="t" style="left:1610.8px;top:85px;width:300px;height:20px;line-height:20px;text-align:left;font-size:15px;letter-spacing:0.3px;color:rgba(0,0,0,0.8);-webkit-text-stroke:0.55px rgba(0,0,0,0.8);">B Comp</div>
<div style="left:1605.8px;top:110.8px;width:112.5px;height:25.8px;background:#9d9d9d;"></div>
<div style="left:1605.8px;top:138px;width:112.5px;height:25.8px;background:#9d9d9d;"></div>
<div style="left:1605.8px;top:165.2px;width:112.5px;height:25.8px;background:#b2b2b2;"></div>
<div style="left:1605.8px;top:192.4px;width:112.5px;height:25.8px;background:#9d9d9d;"></div>
<div style="left:1605.8px;top:219.6px;width:112.5px;height:25.8px;background:#9d9d9d;"></div>
<div style="left:1605.8px;top:246.8px;width:112.5px;height:25.8px;background:#9d9d9d;"></div>
<div style="left:1605.8px;top:274px;width:112.5px;height:25.8px;background:#9d9d9d;"></div>
<div style="left:1605.8px;top:301.2px;width:112.5px;height:25.8px;background:#9d9d9d;"></div>
<div style="left:1605.8px;top:330px;width:112.5px;height:150.5px;background:#9d9d9d;"></div>
<div style="left:1605.8px;top:483px;width:112.5px;height:25.5px;background:#9d9d9d;"></div>
<div style="left:1605.8px;top:511px;width:112.5px;height:83.5px;background:#9d9d9d;"></div>
<div style="left:1605.8px;top:597.5px;width:112.5px;height:291px;background:#9d9d9d;"></div>
<div style="left:1605.8px;top:891px;width:112.5px;height:10.5px;background:#7d63e0;"></div>
<div style="left:1721px;top:82px;width:184px;height:26px;background:#81bcf8;border-radius:3px 6px 0 0;"></div>
<div class="t" style="left:1726px;top:85px;width:300px;height:20px;line-height:20px;text-align:left;font-size:15px;letter-spacing:0.3px;color:rgba(0,0,0,0.8);-webkit-text-stroke:0.55px rgba(0,0,0,0.8);">Main</div>
<div style="left:1721px;top:110.8px;width:184px;height:25.8px;background:#9d9d9d;"></div>
<svg style="position:absolute;left:1727px;top:117px;" width="12" height="13" viewBox="0 0 12 13"><path d="M0 0L12 6.5L0 13Z" fill="#555555"/></svg>
<div class="t" style="left:1656px;top:114.2px;width:300px;height:20px;line-height:20px;text-align:center;font-size:15px;letter-spacing:0.6px;color:#1c1c1c;-webkit-text-stroke:0.5px #1c1c1c;">Intro</div>
<div class="t" style="left:1735.5px;top:114.2px;width:300px;height:20px;line-height:20px;text-align:center;font-size:15px;color:#1c1c1c;-webkit-text-stroke:0.3px #1c1c1c;">1</div>
<div style="left:1721px;top:138px;width:184px;height:25.8px;background:#9d9d9d;"></div>
<svg style="position:absolute;left:1727px;top:144.2px;" width="12" height="13" viewBox="0 0 12 13"><path d="M0 0L12 6.5L0 13Z" fill="#555555"/></svg>
<div class="t" style="left:1656px;top:141.4px;width:300px;height:20px;line-height:20px;text-align:center;font-size:15px;letter-spacing:0.6px;color:#1c1c1c;-webkit-text-stroke:0.5px #1c1c1c;">Build-up</div>
<div class="t" style="left:1735.5px;top:141.4px;width:300px;height:20px;line-height:20px;text-align:center;font-size:15px;color:#1c1c1c;-webkit-text-stroke:0.3px #1c1c1c;">2</div>
<div style="left:1721px;top:165.2px;width:184px;height:25.8px;background:#c9f1fb;"></div>
<svg style="position:absolute;left:1727px;top:171.4px;" width="12" height="13" viewBox="0 0 12 13"><path d="M0 0L12 6.5L0 13Z" fill="#444444"/></svg>
<div class="t" style="left:1656px;top:168.6px;width:300px;height:20px;line-height:20px;text-align:center;font-size:15px;letter-spacing:0.6px;color:#1c1c1c;-webkit-text-stroke:0.5px #1c1c1c;">Drop</div>
<div class="t" style="left:1735.5px;top:168.6px;width:300px;height:20px;line-height:20px;text-align:center;font-size:15px;color:#1c1c1c;-webkit-text-stroke:0.3px #1c1c1c;">3</div>
<div style="left:1721px;top:192.4px;width:184px;height:25.8px;background:#9d9d9d;"></div>
<svg style="position:absolute;left:1727px;top:198.6px;" width="12" height="13" viewBox="0 0 12 13"><path d="M0 0L12 6.5L0 13Z" fill="#555555"/></svg>
<div class="t" style="left:1656px;top:195.8px;width:300px;height:20px;line-height:20px;text-align:center;font-size:15px;letter-spacing:0.6px;color:#1c1c1c;-webkit-text-stroke:0.5px #1c1c1c;">Breakdown</div>
<div class="t" style="left:1735.5px;top:195.8px;width:300px;height:20px;line-height:20px;text-align:center;font-size:15px;color:#1c1c1c;-webkit-text-stroke:0.3px #1c1c1c;">4</div>
<div style="left:1721px;top:219.6px;width:184px;height:25.8px;background:#9d9d9d;"></div>
<svg style="position:absolute;left:1727px;top:225.8px;" width="12" height="13" viewBox="0 0 12 13"><path d="M0 0L12 6.5L0 13Z" fill="#555555"/></svg>
<div class="t" style="left:1656px;top:223px;width:300px;height:20px;line-height:20px;text-align:center;font-size:15px;letter-spacing:0.6px;color:#1c1c1c;-webkit-text-stroke:0.5px #1c1c1c;">Main Section</div>
<div class="t" style="left:1735.5px;top:223px;width:300px;height:20px;line-height:20px;text-align:center;font-size:15px;color:#1c1c1c;-webkit-text-stroke:0.3px #1c1c1c;">5</div>
<div style="left:1721px;top:246.8px;width:184px;height:25.8px;background:#9d9d9d;"></div>
<svg style="position:absolute;left:1727px;top:253px;" width="12" height="13" viewBox="0 0 12 13"><path d="M0 0L12 6.5L0 13Z" fill="#555555"/></svg>
<div class="t" style="left:1656px;top:250.2px;width:300px;height:20px;line-height:20px;text-align:center;font-size:15px;letter-spacing:0.6px;color:#1c1c1c;-webkit-text-stroke:0.5px #1c1c1c;">Build-Up</div>
<div class="t" style="left:1735.5px;top:250.2px;width:300px;height:20px;line-height:20px;text-align:center;font-size:15px;color:#1c1c1c;-webkit-text-stroke:0.3px #1c1c1c;">6</div>
<div style="left:1721px;top:274px;width:184px;height:25.8px;background:#9d9d9d;"></div>
<svg style="position:absolute;left:1727px;top:280.2px;" width="12" height="13" viewBox="0 0 12 13"><path d="M0 0L12 6.5L0 13Z" fill="#555555"/></svg>
<div class="t" style="left:1656px;top:277.4px;width:300px;height:20px;line-height:20px;text-align:center;font-size:15px;letter-spacing:0.6px;color:#1c1c1c;-webkit-text-stroke:0.5px #1c1c1c;">Drop</div>
<div class="t" style="left:1735.5px;top:277.4px;width:300px;height:20px;line-height:20px;text-align:center;font-size:15px;color:#1c1c1c;-webkit-text-stroke:0.3px #1c1c1c;">7</div>
<div style="left:1721px;top:301.2px;width:184px;height:25.8px;background:#9d9d9d;"></div>
<svg style="position:absolute;left:1727px;top:307.4px;" width="12" height="13" viewBox="0 0 12 13"><path d="M0 0L12 6.5L0 13Z" fill="#555555"/></svg>
<div class="t" style="left:1656px;top:304.6px;width:300px;height:20px;line-height:20px;text-align:center;font-size:15px;letter-spacing:0.6px;color:#1c1c1c;-webkit-text-stroke:0.5px #1c1c1c;">Outro</div>
<div class="t" style="left:1735.5px;top:304.6px;width:300px;height:20px;line-height:20px;text-align:center;font-size:15px;color:#1c1c1c;-webkit-text-stroke:0.3px #1c1c1c;">8</div>
<div style="left:1721px;top:330px;width:184px;height:150.5px;background:#9d9d9d;"></div>
<div style="left:1721px;top:483px;width:184px;height:25.5px;background:#9d9d9d;"></div>
<div style="left:1721px;top:511px;width:184px;height:83.5px;background:#9d9d9d;"></div>
<div style="left:1721px;top:597.5px;width:184px;height:291px;background:#9d9d9d;"></div>
<div style="left:1721px;top:891px;width:184px;height:10.5px;background:#81bcf8;border-radius:0 5px 5px 0;"></div>
<div class="t" style="left:1550.9px;top:517.3px;width:300px;height:20px;line-height:20px;text-align:left;font-size:15px;letter-spacing:0.3px;color:#1a1a1a;-webkit-text-stroke:0.5px #1a1a1a;">Sends</div>
<svg style="position:absolute;left:1498.1px;top:512.2px;" width="48.6" height="48.6" viewBox="0 0 48.6 48.6"><path d="M11.59 37.46A18.3 18.3 0 1 1 37.01 37.46" fill="none" stroke="#5e5e5e" stroke-width="2.8"/><line x1="24.3" y1="24.3" x2="15.15" y2="40.15" stroke="#5e5e5e" stroke-width="2.8" stroke-linecap="round"/></svg>
<div class="t" style="left:1372.4px;top:546.6px;width:300px;height:20px;line-height:20px;text-align:center;font-size:14px;color:#111;">A</div>
<svg style="position:absolute;left:1548.1px;top:538.5px;" width="48.6" height="48.6" viewBox="0 0 48.6 48.6"><path d="M11.59 37.46A18.3 18.3 0 1 1 37.01 37.46" fill="none" stroke="#5e5e5e" stroke-width="2.8"/><line x1="24.3" y1="24.3" x2="15.15" y2="40.15" stroke="#5e5e5e" stroke-width="2.8" stroke-linecap="round"/></svg>
<div class="t" style="left:1422.4px;top:572px;width:300px;height:20px;line-height:20px;text-align:center;font-size:14px;color:#111;">B</div>
<div style="left:1498.5px;top:607.3px;width:51px;height:18px;background:#e3e3e3;border:1.4px solid #2a2a2a;border-radius:9px;"></div>
<div class="t" style="left:1374px;top:606.3px;width:300px;height:20px;line-height:20px;text-align:center;font-size:15px;color:#111;"><span style="font-size:13px;position:relative;top:-1px">&minus;</span><span style="font-size:18px;letter-spacing:-1px">&infin;</span></div>
<div style="left:1498.5px;top:634px;width:51px;height:18.7px;background:#dcdcdc;border:1.4px solid #3a3a3a;"></div>
<div class="t" style="left:1374px;top:633.4px;width:300px;height:20px;line-height:20px;text-align:center;font-size:15px;color:#111;">0</div>
<svg style="position:absolute;left:1556.5px;top:627.3px;" width="16" height="18" viewBox="0 0 16 18"><path d="M0 0L16 9L0 18Z" fill="#111"/></svg>
<svg style="position:absolute;left:1575px;top:606.7px;" width="19.5" height="272.8" viewBox="0 0 19.5 272.8"><rect x="0" y="0" width="19.5" height="272.8" rx="2.5" fill="#242424"/><rect x="1.5" y="28.8" width="16.5" height="1.5" fill="#8a8a8a"/><rect x="9.15" y="2" width="1.2" height="268.8" fill="#555"/></svg>
<div style="left:1566.9px;top:607.9px;width:4.5px;height:1.3px;background:#555;"></div>
<div style="left:1566.9px;top:635.4px;width:4.5px;height:1.3px;background:#555;"></div>
<div style="left:1566.9px;top:662.4px;width:4.5px;height:1.3px;background:#555;"></div>
<div style="left:1566.9px;top:688.4px;width:4.5px;height:1.3px;background:#555;"></div>
<div style="left:1566.9px;top:715.2px;width:4.5px;height:1.3px;background:#555;"></div>
<div style="left:1566.9px;top:742.2px;width:4.5px;height:1.3px;background:#555;"></div>
<div style="left:1566.9px;top:769.6px;width:4.5px;height:1.3px;background:#555;"></div>
<div style="left:1566.9px;top:793.8px;width:4.5px;height:1.3px;background:#555;"></div>
<div style="left:1566.9px;top:813.4px;width:4.5px;height:1.3px;background:#555;"></div>
<div style="left:1566.9px;top:831.7px;width:4.5px;height:1.3px;background:#555;"></div>
<div style="left:1566.9px;top:848.4px;width:4.5px;height:1.3px;background:#555;"></div>
<div style="left:1566.9px;top:861.8px;width:4.5px;height:1.3px;background:#555;"></div>
<div style="left:1566.9px;top:874px;width:4.5px;height:1.3px;background:#555;"></div>
<svg style="position:absolute;left:1518.5px;top:744px;" width="11" height="6" viewBox="0 0 11 6"><path d="M0 0H11L5.5 6Z" fill="#111"/></svg>
<svg style="position:absolute;left:1499.2px;top:745.5px;" width="49.6" height="49.6" viewBox="0 0 49.6 49.6"><path d="M14.29 40.39A18.8 18.8 0 0 1 20.25 6.56" fill="none" stroke="#1a1a1a" stroke-width="3.2"/><path d="M29.35 6.56A18.8 18.8 0 0 1 35.31 40.39" fill="none" stroke="#1a1a1a" stroke-width="3.2"/><line x1="24.8" y1="24.8" x2="24.8" y2="6.38" stroke="#1a1a1a" stroke-width="3.2" stroke-linecap="round"/></svg>
<div style="left:1507px;top:794.5px;width:33.5px;height:33px;background:#ffab12;border:1.3px solid #6a4a10;"></div>
<div class="t" style="left:1373.8px;top:801.5px;width:300px;height:20px;line-height:20px;text-align:center;font-size:18px;font-weight:bold;color:#111;">A</div>
<div style="left:1507px;top:835.7px;width:33.5px;height:17.8px;background:#d9d9d9;border:1.3px solid #2e2e2e;"></div>
<div class="t" style="left:1373.8px;top:834.6px;width:300px;height:20px;line-height:20px;text-align:center;font-size:15px;color:#111;">S</div>
<div class="t" style="left:1665.3px;top:517.3px;width:300px;height:20px;line-height:20px;text-align:left;font-size:15px;letter-spacing:0.3px;color:#1a1a1a;-webkit-text-stroke:0.5px #1a1a1a;">Sends</div>
<svg style="position:absolute;left:1612.5px;top:512.2px;" width="48.6" height="48.6" viewBox="0 0 48.6 48.6"><path d="M11.59 37.46A18.3 18.3 0 1 1 37.01 37.46" fill="none" stroke="#5e5e5e" stroke-width="2.8"/><line x1="24.3" y1="24.3" x2="15.15" y2="40.15" stroke="#5e5e5e" stroke-width="2.8" stroke-linecap="round"/></svg>
<div class="t" style="left:1486.8px;top:546.6px;width:300px;height:20px;line-height:20px;text-align:center;font-size:14px;color:#111;">A</div>
<svg style="position:absolute;left:1662.5px;top:538.5px;" width="48.6" height="48.6" viewBox="0 0 48.6 48.6"><path d="M11.59 37.46A18.3 18.3 0 1 1 37.01 37.46" fill="none" stroke="#5e5e5e" stroke-width="2.8"/><line x1="24.3" y1="24.3" x2="15.15" y2="40.15" stroke="#5e5e5e" stroke-width="2.8" stroke-linecap="round"/></svg>
<div class="t" style="left:1536.8px;top:572px;width:300px;height:20px;line-height:20px;text-align:center;font-size:14px;color:#111;">B</div>
<div style="left:1612.9px;top:607.3px;width:51px;height:18px;background:#e3e3e3;border:1.4px solid #2a2a2a;border-radius:9px;"></div>
<div class="t" style="left:1488.4px;top:606.3px;width:300px;height:20px;line-height:20px;text-align:center;font-size:15px;color:#111;">-17.4</div>
<div style="left:1612.9px;top:634px;width:51px;height:18.7px;background:#dcdcdc;border:1.4px solid #3a3a3a;"></div>
<div class="t" style="left:1488.4px;top:633.4px;width:300px;height:20px;line-height:20px;text-align:center;font-size:15px;color:#111;">-5.8</div>
<svg style="position:absolute;left:1671px;top:652.7px;" width="16" height="18" viewBox="0 0 16 18"><path d="M0 0L16 9L0 18Z" fill="#111"/></svg>
<svg style="position:absolute;left:1689.8px;top:606.7px;" width="19.5" height="272.8" viewBox="0 0 19.5 272.8"><rect x="0" y="0" width="19.5" height="272.8" rx="2.5" fill="#242424"/><defs><linearGradient id="g1689_0" gradientUnits="userSpaceOnUse" x1="0" y1="0" x2="0" y2="272.8"><stop offset="0.62" stop-color="#20a048"/><stop offset="0.66" stop-color="#20a048"/><stop offset="0.66" stop-color="#1ee85a"/><stop offset="1" stop-color="#1ee85a"/></linearGradient></defs><rect x="1.3" y="171" width="8.1" height="100.6" fill="url(#g1689_0)"/><defs><linearGradient id="g1689_1" gradientUnits="userSpaceOnUse" x1="0" y1="0" x2="0" y2="272.8"><stop offset="0.62" stop-color="#20a048"/><stop offset="0.66" stop-color="#20a048"/><stop offset="0.66" stop-color="#1ee85a"/><stop offset="1" stop-color="#1ee85a"/></linearGradient></defs><rect x="10.1" y="171" width="8.1" height="100.6" fill="url(#g1689_1)"/><rect x="1.5" y="28.8" width="16.5" height="1.5" fill="#8a8a8a"/><rect x="1.5" y="119.6" width="16.5" height="1.6" fill="#30d060"/><rect x="9.15" y="2" width="1.2" height="268.8" fill="#555"/><rect x="9.15" y="171" width="1.2" height="100.8" fill="#0d3a18"/></svg>
<div style="left:1681.3px;top:607.9px;width:4.5px;height:1.3px;background:#555;"></div>
<div style="left:1681.3px;top:635.4px;width:4.5px;height:1.3px;background:#555;"></div>
<div style="left:1681.3px;top:662.4px;width:4.5px;height:1.3px;background:#555;"></div>
<div style="left:1681.3px;top:688.4px;width:4.5px;height:1.3px;background:#555;"></div>
<div style="left:1681.3px;top:715.2px;width:4.5px;height:1.3px;background:#555;"></div>
<div style="left:1681.3px;top:742.2px;width:4.5px;height:1.3px;background:#555;"></div>
<div style="left:1681.3px;top:769.6px;width:4.5px;height:1.3px;background:#555;"></div>
<div style="left:1681.3px;top:793.8px;width:4.5px;height:1.3px;background:#555;"></div>
<div style="left:1681.3px;top:813.4px;width:4.5px;height:1.3px;background:#555;"></div>
<div style="left:1681.3px;top:831.7px;width:4.5px;height:1.3px;background:#555;"></div>
<div style="left:1681.3px;top:848.4px;width:4.5px;height:1.3px;background:#555;"></div>
<div style="left:1681.3px;top:861.8px;width:4.5px;height:1.3px;background:#555;"></div>
<div style="left:1681.3px;top:874px;width:4.5px;height:1.3px;background:#555;"></div>
<svg style="position:absolute;left:1632.9px;top:744px;" width="11" height="6" viewBox="0 0 11 6"><path d="M0 0H11L5.5 6Z" fill="#111"/></svg>
<svg style="position:absolute;left:1613.6px;top:745.5px;" width="49.6" height="49.6" viewBox="0 0 49.6 49.6"><path d="M14.29 40.39A18.8 18.8 0 0 1 20.25 6.56" fill="none" stroke="#1a1a1a" stroke-width="3.2"/><path d="M29.35 6.56A18.8 18.8 0 0 1 35.31 40.39" fill="none" stroke="#1a1a1a" stroke-width="3.2"/><line x1="24.8" y1="24.8" x2="24.8" y2="6.38" stroke="#1a1a1a" stroke-width="3.2" stroke-linecap="round"/></svg>
<div style="left:1621.4px;top:794.5px;width:33.5px;height:33px;background:#ffab12;border:1.3px solid #6a4a10;"></div>
<div class="t" style="left:1488.2px;top:801.5px;width:300px;height:20px;line-height:20px;text-align:center;font-size:18px;font-weight:bold;color:#111;">B</div>
<div style="left:1621.4px;top:835.7px;width:33.5px;height:17.8px;background:#d9d9d9;border:1.3px solid #2e2e2e;"></div>
<div class="t" style="left:1488.2px;top:834.6px;width:300px;height:20px;line-height:20px;text-align:center;font-size:15px;color:#111;">S</div>
<div style="left:1727px;top:489.5px;width:13px;height:13px;background:#555555;"></div>
<div style="left:1843.2px;top:486px;width:19.5px;height:18.8px;background:#f4f4f4;border:1.2px solid #333;"></div>
<svg style="position:absolute;left:1846px;top:489px;" width="14" height="13" viewBox="0 0 14 13"><rect x="1" y="1" width="2" height="11" fill="#111"/><path d="M4.5 1.5L10 6.5L4.5 11.5Z" fill="#111"/><rect x="11" y="5.8" width="2" height="1.5" fill="#111"/></svg>
<div style="left:1869px;top:486px;width:30px;height:18.8px;background:#fe6a2a;border:1.2px solid #6a2a10;"></div>
<svg style="position:absolute;left:1873px;top:489px;" width="22" height="13" viewBox="0 0 22 13"><path d="M1 1L10 6.5L1 12Z" fill="#111"/><rect x="12" y="2" width="8" height="1.8" fill="#111"/><rect x="12" y="5.6" width="8" height="1.8" fill="#111"/><rect x="12" y="9.2" width="8" height="1.8" fill="#111"/></svg>
<div class="t" style="left:1818px;top:517.3px;width:300px;height:20px;line-height:20px;text-align:left;font-size:15px;letter-spacing:0.3px;color:#1a1a1a;-webkit-text-stroke:0.5px #1a1a1a;">Sends</div>
<div style="left:1721.7px;top:538.5px;width:48.5px;height:1.5px;background:#d0d0d0;"></div>
<div style="left:1769.9px;top:530.7px;width:37.8px;height:18px;background:#fcb814;border:1.2px solid #6a4a10;"></div>
<div class="t" style="left:1638.8px;top:529.7px;width:300px;height:20px;line-height:20px;text-align:center;font-size:15px;color:#111;">Post</div>
<div style="left:1721.7px;top:564.4px;width:99.7px;height:1.5px;background:#d0d0d0;"></div>
<div style="left:1821.4px;top:556px;width:37.8px;height:18.3px;background:#fcb814;border:1.2px solid #6a4a10;"></div>
<div class="t" style="left:1690.3px;top:555.2px;width:300px;height:20px;line-height:20px;text-align:center;font-size:15px;color:#111;">Post</div>
<div style="left:1759.6px;top:607.4px;width:51px;height:18px;background:#e3e3e3;border:1.4px solid #2a2a2a;border-radius:9px;"></div>
<div class="t" style="left:1635.1px;top:606.4px;width:300px;height:20px;line-height:20px;text-align:center;font-size:15px;color:#111;">-6.12</div>
<div style="left:1759.6px;top:634.5px;width:51px;height:18px;background:#dcdcdc;border:1.4px solid #3a3a3a;"></div>
<div class="t" style="left:1635.1px;top:633.5px;width:300px;height:20px;line-height:20px;text-align:center;font-size:15px;color:#111;">0</div>
<svg style="position:absolute;left:1817.6px;top:627.3px;" width="16" height="18" viewBox="0 0 16 18"><path d="M0 0L16 9L0 18Z" fill="#111"/></svg>
<svg style="position:absolute;left:1836px;top:606.7px;" width="19.5" height="272.8" viewBox="0 0 19.5 272.8"><rect x="0" y="0" width="19.5" height="272.8" rx="2.5" fill="#242424"/><defs><linearGradient id="g1836_0" gradientUnits="userSpaceOnUse" x1="0" y1="0" x2="0" y2="272.8"><stop offset="0.28" stop-color="#8a9a18"/><stop offset="0.34" stop-color="#8a9a18"/><stop offset="0.35" stop-color="#60d020"/><stop offset="0.39" stop-color="#40e040"/><stop offset="0.39" stop-color="#1ee85a"/><stop offset="1" stop-color="#1ee85a"/></linearGradient></defs><rect x="1.3" y="76.7" width="8.1" height="194.9" fill="url(#g1836_0)"/><defs><linearGradient id="g1836_1" gradientUnits="userSpaceOnUse" x1="0" y1="0" x2="0" y2="272.8"><stop offset="0.28" stop-color="#8a9a18"/><stop offset="0.34" stop-color="#8a9a18"/><stop offset="0.35" stop-color="#60d020"/><stop offset="0.39" stop-color="#40e040"/><stop offset="0.39" stop-color="#1ee85a"/><stop offset="1" stop-color="#1ee85a"/></linearGradient></defs><rect x="10.1" y="76.7" width="8.1" height="194.9" fill="url(#g1836_1)"/><rect x="1.5" y="28.8" width="16.5" height="1.5" fill="#8a8a8a"/><rect x="9.15" y="2" width="1.2" height="268.8" fill="#555"/><rect x="9.15" y="76.7" width="1.2" height="195.1" fill="#0d3a18"/></svg>
<svg style="position:absolute;left:1836px;top:606.7px;" width="19.5" height="100" viewBox="0 0 19.5 100"><rect x="1.3" y="63.6" width="8.1" height="1.6" fill="#f0b020"/><rect x="10.1" y="73" width="8.1" height="1.6" fill="#f0b020"/></svg>
<div style="left:1827.5px;top:607.9px;width:4.5px;height:1.3px;background:#555;"></div>
<div style="left:1827.5px;top:635.4px;width:4.5px;height:1.3px;background:#555;"></div>
<div style="left:1827.5px;top:662.4px;width:4.5px;height:1.3px;background:#555;"></div>
<div style="left:1827.5px;top:688.4px;width:4.5px;height:1.3px;background:#555;"></div>
<div style="left:1827.5px;top:715.2px;width:4.5px;height:1.3px;background:#555;"></div>
<div style="left:1827.5px;top:742.2px;width:4.5px;height:1.3px;background:#555;"></div>
<div style="left:1827.5px;top:769.6px;width:4.5px;height:1.3px;background:#555;"></div>
<div style="left:1827.5px;top:793.8px;width:4.5px;height:1.3px;background:#555;"></div>
<div style="left:1827.5px;top:813.4px;width:4.5px;height:1.3px;background:#555;"></div>
<div style="left:1827.5px;top:831.7px;width:4.5px;height:1.3px;background:#555;"></div>
<div style="left:1827.5px;top:848.4px;width:4.5px;height:1.3px;background:#555;"></div>
<div style="left:1827.5px;top:861.8px;width:4.5px;height:1.3px;background:#555;"></div>
<div style="left:1827.5px;top:874px;width:4.5px;height:1.3px;background:#555;"></div>
<div class="t" style="left:1858.5px;top:604px;width:300px;height:20px;line-height:20px;text-align:left;font-size:14px;color:#2a2a2a;-webkit-text-stroke:0.25px #2a2a2a;">6</div>
<div class="t" style="left:1858.5px;top:625.4px;width:300px;height:20px;line-height:20px;text-align:left;font-size:14px;color:#2a2a2a;-webkit-text-stroke:0.25px #2a2a2a;">0</div>
<div class="t" style="left:1858.5px;top:652px;width:300px;height:20px;line-height:20px;text-align:left;font-size:14px;color:#2a2a2a;-webkit-text-stroke:0.25px #2a2a2a;">6</div>
<div class="t" style="left:1858.5px;top:678.5px;width:300px;height:20px;line-height:20px;text-align:left;font-size:14px;color:#2a2a2a;-webkit-text-stroke:0.25px #2a2a2a;">12</div>
<div class="t" style="left:1858.5px;top:705.5px;width:300px;height:20px;line-height:20px;text-align:left;font-size:14px;color:#2a2a2a;-webkit-text-stroke:0.25px #2a2a2a;">18</div>
<div class="t" style="left:1858.5px;top:733px;width:300px;height:20px;line-height:20px;text-align:left;font-size:14px;color:#2a2a2a;-webkit-text-stroke:0.25px #2a2a2a;">24</div>
<div class="t" style="left:1858.5px;top:760px;width:300px;height:20px;line-height:20px;text-align:left;font-size:14px;color:#2a2a2a;-webkit-text-stroke:0.25px #2a2a2a;">30</div>
<div class="t" style="left:1858.5px;top:784px;width:300px;height:20px;line-height:20px;text-align:left;font-size:14px;color:#2a2a2a;-webkit-text-stroke:0.25px #2a2a2a;">36</div>
<div class="t" style="left:1858.5px;top:804px;width:300px;height:20px;line-height:20px;text-align:left;font-size:14px;color:#2a2a2a;-webkit-text-stroke:0.25px #2a2a2a;">42</div>
<div class="t" style="left:1858.5px;top:822.2px;width:300px;height:20px;line-height:20px;text-align:left;font-size:14px;color:#2a2a2a;-webkit-text-stroke:0.25px #2a2a2a;">48</div>
<div class="t" style="left:1858.5px;top:852px;width:300px;height:20px;line-height:20px;text-align:left;font-size:14px;color:#2a2a2a;-webkit-text-stroke:0.25px #2a2a2a;">60</div>
<svg style="position:absolute;left:1779.8px;top:744px;" width="11" height="6" viewBox="0 0 11 6"><path d="M0 0H11L5.5 6Z" fill="#111"/></svg>
<svg style="position:absolute;left:1760.5px;top:745.5px;" width="49.6" height="49.6" viewBox="0 0 49.6 49.6"><path d="M14.29 40.39A18.8 18.8 0 0 1 20.25 6.56" fill="none" stroke="#1a1a1a" stroke-width="3.2"/><path d="M29.35 6.56A18.8 18.8 0 0 1 35.31 40.39" fill="none" stroke="#1a1a1a" stroke-width="3.2"/><line x1="24.8" y1="24.8" x2="24.8" y2="6.38" stroke="#1a1a1a" stroke-width="3.2" stroke-linecap="round"/></svg>
<div style="left:1766.8px;top:809.8px;width:37px;height:18.5px;background:#f6f6f6;border:1.2px solid #333;"></div>
<div class="t" style="left:1635.3px;top:809px;width:300px;height:20px;line-height:20px;text-align:center;font-size:15px;color:#111;">Solo</div>
<svg style="position:absolute;left:1761.3px;top:831.4px;" width="48" height="48" viewBox="0 0 48 48"><path d="M13.68 38.74A18 18 0 1 1 34.32 38.74" fill="none" stroke="#1a1a1a" stroke-width="3"/><path d="M13.68 38.74A18 18 0 1 1 40.15 16.05" fill="none" stroke="#1f6fe0" stroke-width="3.4499999999999997"/><line x1="24" y1="24" x2="39.62" y2="17.04" stroke="#1a1a1a" stroke-width="3" stroke-linecap="round"/></svg>
<svg style="position:absolute;left:1777px;top:862px;" width="16" height="14" viewBox="0 0 16 14"><path d="M3 12V8A5 5 0 0 1 13 8V12" fill="none" stroke="#111" stroke-width="1.8"/><rect x="2" y="9" width="3" height="4" fill="#111"/><rect x="11" y="9" width="3" height="4" fill="#111"/></svg>
<div style="left:13.4px;top:914.6px;width:28.6px;height:284.2px;background:#b9b9b9;border-radius:5px;"></div>
<div style="left:18.7px;top:918.3px;width:18px;height:18px;background:#fdb213;border-radius:50%;border:1.5px solid #5a4410;"></div>
<div class="t" style="left:-2.2px;top:1088px;width:60px;height:20px;line-height:20px;text-align:center;transform:rotate(-90deg);font-size:16.5px;letter-spacing:0.3px;color:#1a1a1a;-webkit-text-stroke:0.35px #1a1a1a;">Drift</div>
<svg style="position:absolute;left:16.8px;top:1120px;" width="22" height="22" viewBox="0 0 22 22"><circle cx="11" cy="11" r="9.3" fill="#d4d4d4" stroke="#333" stroke-width="1.5"/><path d="M11.3 6.3A4.7 4.7 0 0 0 6.4 10.6" fill="none" stroke="#1a1a1a" stroke-width="1.9"/><path d="M10.7 15.7A4.7 4.7 0 0 0 15.6 11.4" fill="none" stroke="#1a1a1a" stroke-width="1.9"/><path d="M4.2 9.6L8.6 9.6L6.4 12.6Z M17.8 12.4L13.4 12.4L15.6 9.4Z" fill="#1a1a1a"/></svg>
<svg style="position:absolute;left:16.8px;top:1146px;" width="22" height="22" viewBox="0 0 22 22"><circle cx="11" cy="11" r="9.3" fill="#d4d4d4" stroke="#333" stroke-width="1.5"/><path d="M6.2 6.2H14.2L15.8 7.8V15.8H6.2Z" fill="#111"/><rect x="8.4" y="7" width="4.4" height="3" fill="#d4d4d4"/></svg>
<svg style="position:absolute;left:16.8px;top:1172px;" width="22" height="22" viewBox="0 0 22 22"><circle cx="11" cy="11" r="9.3" fill="#d4d4d4" stroke="#333" stroke-width="1.5"/><circle cx="6.8" cy="11.2" r="1.5" fill="#111"/><circle cx="11" cy="11.2" r="1.5" fill="#111"/><circle cx="15.2" cy="11.2" r="1.5" fill="#111"/></svg>
<svg style="position:absolute;left:4.5px;top:982px;" width="5" height="160" viewBox="0 0 5 160"><rect x="0.5" y="0" width="3.5" height="3.2" rx="1" fill="#2a2a2a"/><rect x="0.5" y="6.15" width="3.5" height="3.2" rx="1" fill="#2a2a2a"/><rect x="0.5" y="12.3" width="3.5" height="3.2" rx="1" fill="#2a2a2a"/><rect x="0.5" y="18.45" width="3.5" height="3.2" rx="1" fill="#2a2a2a"/><rect x="0.5" y="24.6" width="3.5" height="3.2" rx="1" fill="#2a2a2a"/><rect x="0.5" y="30.75" width="3.5" height="3.2" rx="1" fill="#2a2a2a"/><rect x="0.5" y="36.9" width="3.5" height="3.2" rx="1" fill="#2a2a2a"/><rect x="0.5" y="43.05" width="3.5" height="3.2" rx="1" fill="#2a2a2a"/><rect x="0.5" y="49.2" width="3.5" height="3.2" rx="1" fill="#2a2a2a"/><rect x="0.5" y="55.35" width="3.5" height="3.2" rx="1" fill="#2a2a2a"/><rect x="0.5" y="61.5" width="3.5" height="3.2" rx="1" fill="#2a2a2a"/><rect x="0.5" y="67.65" width="3.5" height="3.2" rx="1" fill="#2a2a2a"/><rect x="0.5" y="73.8" width="3.5" height="3.2" rx="1" fill="#2a2a2a"/><rect x="0.5" y="79.95" width="3.5" height="3.2" rx="1" fill="#2a2a2a"/><rect x="0.5" y="86.1" width="3.5" height="3.2" rx="1" fill="#2a2a2a"/><rect x="0.5" y="92.25" width="3.5" height="3.2" rx="1" fill="#2a2a2a"/><rect x="0.5" y="98.4" width="3.5" height="3.2" rx="1" fill="#2a2a2a"/><rect x="0.5" y="104.55" width="3.5" height="3.2" rx="1" fill="#2a2a2a"/><rect x="0.5" y="110.7" width="3.5" height="3.2" rx="1" fill="#2a2a2a"/><rect x="0.5" y="116.85" width="3.5" height="3.2" rx="1" fill="#2a2a2a"/><rect x="0.5" y="123" width="3.5" height="3.2" rx="1" fill="#2a2a2a"/><rect x="0.5" y="129.15" width="3.5" height="3.2" rx="1" fill="#2a2a2a"/><rect x="0.5" y="135.3" width="3.5" height="3.2" rx="1" fill="#2a2a2a"/><rect x="0.5" y="141.45" width="3.5" height="3.2" rx="1" fill="#2a2a2a"/><rect x="0.5" y="147.6" width="3.5" height="3.2" rx="1" fill="#2a2a2a"/><circle cx="2.3" cy="154" r="2" fill="#f0b020"/></svg>
<svg style="position:absolute;left:45.7px;top:975.3px;" width="7.5" height="163" viewBox="0 0 7.5 163"><rect x="0" y="0" width="3.25" height="163" fill="#2a2a2a"/><rect x="0" y="66.7" width="3.25" height="96.3" fill="#22dd55"/><rect x="4.25" y="0" width="3.25" height="163" fill="#2a2a2a"/><rect x="4.25" y="66.7" width="3.25" height="96.3" fill="#22dd55"/><rect x="0" y="24.7" width="7.5" height="1.2" fill="#9a9a9a"/><rect x="0" y="44.5" width="7.5" height="1.4" fill="#e0b030"/></svg>
<div style="left:56px;top:914.6px;width:378.6px;height:284.2px;background:#b9b9b9;border-radius:5px;"></div>
<div style="left:56px;top:914.6px;width:378.6px;height:25px;background:#c1c1c1;border-radius:5px 5px 0 0;"></div>
<div class="t" style="left:86.4px;top:917.3px;width:300px;height:20px;line-height:20px;text-align:left;font-size:15px;letter-spacing:0.3px;color:#1a1a1a;-webkit-text-stroke:0.5px #1a1a1a;">Auto Pan-Tremolo</div>
<svg style="position:absolute;left:360.6px;top:916.6px;" width="22" height="22" viewBox="0 0 22 22"><circle cx="11" cy="11" r="9.3" fill="#d4d4d4" stroke="#333" stroke-width="1.5"/><path d="M11.3 6.3A4.7 4.7 0 0 0 6.4 10.6" fill="none" stroke="#1a1a1a" stroke-width="1.9"/><path d="M10.7 15.7A4.7 4.7 0 0 0 15.6 11.4" fill="none" stroke="#1a1a1a" stroke-width="1.9"/><path d="M4.2 9.6L8.6 9.6L6.4 12.6Z M17.8 12.4L13.4 12.4L15.6 9.4Z" fill="#1a1a1a"/></svg>
<svg style="position:absolute;left:385px;top:916.6px;" width="22" height="22" viewBox="0 0 22 22"><circle cx="11" cy="11" r="9.3" fill="#d4d4d4" stroke="#333" stroke-width="1.5"/><path d="M6.2 6.2H14.2L15.8 7.8V15.8H6.2Z" fill="#111"/><rect x="8.4" y="7" width="4.4" height="3" fill="#d4d4d4"/></svg>
<svg style="position:absolute;left:409px;top:916.6px;" width="22" height="22" viewBox="0 0 22 22"><circle cx="11" cy="11" r="9.3" fill="#d4d4d4" stroke="#333" stroke-width="1.5"/><circle cx="6.8" cy="11.2" r="1.5" fill="#111"/><circle cx="11" cy="11.2" r="1.5" fill="#111"/><circle cx="15.2" cy="11.2" r="1.5" fill="#111"/></svg>
<div style="left:61px;top:918.3px;width:18px;height:18px;background:#fdb213;border-radius:50%;border:1.5px solid #5a4410;"></div>
<div style="left:61.7px;top:946.4px;width:367.3px;height:164.6px;background:#1f1f1f;border-radius:4px;"></div>
<div style="left:68px;top:953px;width:175px;height:19.8px;background:#ffab12;"></div>
<div class="t" style="left:5.5px;top:953px;width:300px;height:20px;line-height:20px;text-align:center;font-size:15px;color:#1a1a1a;">Panning</div>
<div style="left:247.7px;top:953px;width:175px;height:19.8px;border:1.6px solid #ffab12;"></div>
<div class="t" style="left:185px;top:953px;width:300px;height:20px;line-height:20px;text-align:center;font-size:15px;color:#ffab12;">Tremolo</div>
<div class="t" style="left:-46px;top:1117px;width:300px;height:20px;line-height:20px;text-align:center;font-size:15px;letter-spacing:0.5px;color:#1a1a1a;-webkit-text-stroke:0.25px #1a1a1a;">Amount</div>
<div class="t" style="left:50.6px;top:1117px;width:300px;height:20px;line-height:20px;text-align:center;font-size:15px;letter-spacing:0.5px;color:#1a1a1a;-webkit-text-stroke:0.25px #1a1a1a;">Rate</div>
<div class="t" style="left:146.6px;top:1117px;width:300px;height:20px;line-height:20px;text-align:center;font-size:15px;letter-spacing:0.5px;color:#1a1a1a;-webkit-text-stroke:0.25px #1a1a1a;">Shape</div>
<div class="t" style="left:239px;top:1117px;width:300px;height:20px;line-height:20px;text-align:center;font-size:15px;letter-spacing:0.5px;color:#1a1a1a;-webkit-text-stroke:0.25px #1a1a1a;">Att | Mod</div>
<div style="left:448.5px;top:914.6px;width:378.6px;height:284.2px;background:#b9b9b9;border-radius:5px;"></div>
<div style="left:448.5px;top:914.6px;width:378.6px;height:25px;background:#c1c1c1;border-radius:5px 5px 0 0;"></div>
<div class="t" style="left:478.9px;top:917.3px;width:300px;height:20px;line-height:20px;text-align:left;font-size:15px;letter-spacing:0.3px;color:#1a1a1a;-webkit-text-stroke:0.5px #1a1a1a;">Auto Pan-Tremolo</div>
<svg style="position:absolute;left:753.1px;top:916.6px;" width="22" height="22" viewBox="0 0 22 22"><circle cx="11" cy="11" r="9.3" fill="#d4d4d4" stroke="#333" stroke-width="1.5"/><path d="M11.3 6.3A4.7 4.7 0 0 0 6.4 10.6" fill="none" stroke="#1a1a1a" stroke-width="1.9"/><path d="M10.7 15.7A4.7 4.7 0 0 0 15.6 11.4" fill="none" stroke="#1a1a1a" stroke-width="1.9"/><path d="M4.2 9.6L8.6 9.6L6.4 12.6Z M17.8 12.4L13.4 12.4L15.6 9.4Z" fill="#1a1a1a"/></svg>
<svg style="position:absolute;left:777.5px;top:916.6px;" width="22" height="22" viewBox="0 0 22 22"><circle cx="11" cy="11" r="9.3" fill="#d4d4d4" stroke="#333" stroke-width="1.5"/><path d="M6.2 6.2H14.2L15.8 7.8V15.8H6.2Z" fill="#111"/><rect x="8.4" y="7" width="4.4" height="3" fill="#d4d4d4"/></svg>
<svg style="position:absolute;left:801.5px;top:916.6px;" width="22" height="22" viewBox="0 0 22 22"><circle cx="11" cy="11" r="9.3" fill="#d4d4d4" stroke="#333" stroke-width="1.5"/><circle cx="6.8" cy="11.2" r="1.5" fill="#111"/><circle cx="11" cy="11.2" r="1.5" fill="#111"/><circle cx="15.2" cy="11.2" r="1.5" fill="#111"/></svg>
<div style="left:453.5px;top:918.3px;width:18px;height:18px;background:#fdb213;border-radius:50%;border:1.5px solid #5a4410;"></div>
<div style="left:454.2px;top:946.4px;width:367.3px;height:164.6px;background:#1f1f1f;border-radius:4px;"></div>
<div style="left:460.5px;top:953px;width:175px;height:19.8px;border:1.6px solid #ffab12;"></div>
<div class="t" style="left:398px;top:953px;width:300px;height:20px;line-height:20px;text-align:center;font-size:15px;color:#ffab12;">Panning</div>
<div style="left:640.2px;top:953px;width:175px;height:19.8px;background:#ffab12;"></div>
<div class="t" style="left:577.5px;top:953px;width:300px;height:20px;line-height:20px;text-align:center;font-size:15px;color:#1a1a1a;">Tremolo</div>
<div class="t" style="left:346.5px;top:1117px;width:300px;height:20px;line-height:20px;text-align:center;font-size:15px;letter-spacing:0.5px;color:#1a1a1a;-webkit-text-stroke:0.25px #1a1a1a;">Amount</div>
<div class="t" style="left:443.1px;top:1117px;width:300px;height:20px;line-height:20px;text-align:center;font-size:15px;letter-spacing:0.5px;color:#1a1a1a;-webkit-text-stroke:0.25px #1a1a1a;">Rate</div>
<div class="t" style="left:539.1px;top:1117px;width:300px;height:20px;line-height:20px;text-align:center;font-size:15px;letter-spacing:0.5px;color:#1a1a1a;-webkit-text-stroke:0.25px #1a1a1a;">Shape</div>
<div class="t" style="left:631.5px;top:1117px;width:300px;height:20px;line-height:20px;text-align:center;font-size:15px;letter-spacing:0.5px;color:#1a1a1a;-webkit-text-stroke:0.25px #1a1a1a;">Att | Mod</div>
<svg style="position:absolute;left:437px;top:975.3px;" width="8" height="163" viewBox="0 0 8 163"><rect x="0" y="0" width="3.5" height="163" fill="#2a2a2a"/><rect x="0" y="66.7" width="3.5" height="96.3" fill="#22dd55"/><rect x="4.5" y="0" width="3.5" height="163" fill="#2a2a2a"/><rect x="4.5" y="66.7" width="3.5" height="96.3" fill="#22dd55"/><rect x="0" y="24.7" width="8" height="1.2" fill="#9a9a9a"/><rect x="0" y="37.7" width="8" height="1.4" fill="#e0b030"/></svg>
<svg style="position:absolute;left:830.5px;top:975.3px;" width="8" height="163" viewBox="0 0 8 163"><rect x="0" y="0" width="3.5" height="163" fill="#2a2a2a"/><rect x="0" y="69.7" width="3.5" height="93.3" fill="#22dd55"/><rect x="4.5" y="0" width="3.5" height="163" fill="#2a2a2a"/><rect x="4.5" y="69.7" width="3.5" height="93.3" fill="#22dd55"/><rect x="0" y="24.7" width="8" height="1.2" fill="#9a9a9a"/><rect x="0" y="33.7" width="8" height="1.4" fill="#e0b030"/></svg>
<svg style="position:absolute;left:61.7px;top:946.4px;" width="367.3" height="164.6" viewBox="0 0 367.3 164.6"><polyline points="0.3,69.71 1.3,69.66 2.3,69.63 3.3,69.6 4.3,69.6 5.3,69.61 6.3,69.64 7.3,69.68 8.3,69.74 9.3,69.81 10.3,69.9 11.3,70 12.3,70.11 13.3,70.23 14.3,70.36 15.3,70.5 16.3,70.61 17.3,70.75 18.3,70.92 19.3,71.11 20.3,71.33 21.3,71.57 22.3,71.84 23.3,72.12 24.3,72.41 25.3,72.71 26.3,73.02 27.3,73.32 28.3,73.62 29.3,73.9 30.3,74.17 31.3,74.42 32.3,74.64 33.3,74.82 34.3,74.97 35.3,75.08 36.3,75.15 37.3,75.16 38.3,75.13 39.3,75.04 40.3,74.9 41.3,74.7 42.3,74.44 43.3,74.13 44.3,73.77 45.3,73.36 46.3,72.9 47.3,72.4 48.3,71.85 49.3,71.28 50.3,70.67 51.3,70.05 52.3,69.41 53.3,68.76 54.3,68.12 55.3,67.48 56.3,66.86 57.3,66.27 58.3,65.71 59.3,65.19 60.3,64.73 61.3,64.31 62.3,63.97 63.3,63.69 64.3,63.48 65.3,63.36 66.3,63.32 67.3,63.37 68.3,63.51 69.3,63.74 70.3,64.06 71.3,64.47 72.3,64.96 73.3,65.54 74.3,66.2 75.3,66.93 76.3,67.73 77.3,68.59 78.3,69.51 79.3,70.46 80.3,71.45 81.3,72.46 82.3,73.48 83.3,74.5 84.3,75.51 85.3,76.49 86.3,77.44 87.3,78.34 88.3,79.18 89.3,79.95 90.3,80.65 91.3,81.25 92.3,81.75 93.3,82.15 94.3,82.43 95.3,82.6 96.3,82.64 97.3,82.55 98.3,82.34 99.3,82 100.3,81.53 101.3,80.93 102.3,80.22 103.3,79.39 104.3,78.45 105.3,77.41 106.3,76.28 107.3,75.07 108.3,73.8 109.3,72.47 110.3,71.1 111.3,69.71 112.3,68.3 113.3,66.9 114.3,65.52 115.3,64.17 116.3,62.88 117.3,61.65 118.3,60.51 119.3,59.46 120.3,58.52 121.3,57.71 122.3,57.02 123.3,56.48 124.3,56.09 125.3,55.85 126.3,55.78 127.3,55.88 128.3,56.14 129.3,56.57 130.3,57.16 131.3,57.92 132.3,58.83 133.3,59.9 134.3,61.1 135.3,62.42 136.3,63.86 137.3,65.41 138.3,67.04 139.3,68.73 140.3,70.48 141.3,72.26 142.3,74.05 143.3,75.84 144.3,77.6 145.3,79.32 146.3,80.97 147.3,82.53 148.3,84 149.3,85.34 150.3,86.55 151.3,87.61 152.3,88.5 153.3,89.21 154.3,89.74 155.3,90.07 156.3,90.2 157.3,90.13 158.3,89.84 159.3,89.35 160.3,88.66 161.3,87.76 162.3,86.68 163.3,85.41 164.3,83.97 165.3,82.37 166.3,80.63 167.3,78.76 168.3,76.79 169.3,74.73 170.3,72.61 171.3,70.45 172.3,68.27 173.3,66.09 174.3,63.94 175.3,61.84 176.3,59.82 177.3,57.9 178.3,56.1 179.3,54.44 180.3,52.94 181.3,51.62 182.3,50.5 183.3,49.59 184.3,48.9 185.3,48.44 186.3,48.23 187.3,48.26 188.3,48.53 189.3,49.06 190.3,49.82 191.3,50.83 192.3,52.07 193.3,53.52 194.3,55.18 195.3,57.03 196.3,59.06 197.3,61.23 198.3,63.53 199.3,65.94 200.3,68.43 201.3,70.97 202.3,73.54 203.3,76.11 204.3,78.65 205.3,81.14 206.3,83.54 207.3,85.83 208.3,87.99 209.3,89.98 210.3,91.79 211.3,93.39 212.3,94.77 213.3,95.9 214.3,96.78 215.3,97.39 216.3,97.72 217.3,97.76 218.3,97.52 219.3,96.99 220.3,96.18 221.3,95.09 222.3,93.73 223.3,92.11 224.3,90.25 225.3,88.17 226.3,85.88 227.3,83.42 228.3,80.8 229.3,78.05 230.3,75.19 231.3,72.27 232.3,69.34 233.3,66.43 234.3,63.58 235.3,60.8 236.3,58.13 237.3,55.6 238.3,53.24 239.3,51.06 240.3,49.11 241.3,47.38 242.3,45.91 243.3,44.72 244.3,43.8 245.3,43.18 246.3,42.85 247.3,42.83 248.3,43.11 249.3,43.69 250.3,44.56 251.3,45.72 252.3,47.15 253.3,48.83 254.3,50.76 255.3,52.9 256.3,55.23 257.3,57.74 258.3,60.39 259.3,63.15 260.3,66 261.3,68.91 262.3,71.83 263.3,74.75 264.3,77.63 265.3,80.44 266.3,83.15 267.3,85.73 268.3,88.16 269.3,90.4 270.3,92.44 271.3,94.24 272.3,95.8 273.3,97.1 274.3,98.11 275.3,98.84 276.3,99.27 277.3,99.4 278.3,99.22 279.3,98.75 280.3,97.98 281.3,96.92 282.3,95.58 283.3,93.99 284.3,92.14 285.3,90.08 286.3,87.81 287.3,85.36 288.3,82.75 289.3,80.03 290.3,77.2 291.3,74.32 292.3,71.39 293.3,68.47 294.3,65.57 295.3,62.73 296.3,59.98 297.3,57.35 298.3,54.87 299.3,52.56 300.3,50.45 301.3,48.56 302.3,46.91 303.3,45.53 304.3,44.41 305.3,43.58 306.3,43.05 307.3,42.81 308.3,42.88 309.3,43.25 310.3,43.92 311.3,44.88 312.3,46.12 313.3,47.63 314.3,49.38 315.3,51.38 316.3,53.58 317.3,55.97 318.3,58.52 319.3,61.21 320.3,64 321.3,66.87 322.3,69.78 323.3,72.71 324.3,75.62 325.3,78.48 326.3,81.27 327.3,83.94 328.3,86.48 329.3,88.85 330.3,91.03 331.3,93 332.3,94.74 333.3,96.22 334.3,97.43 335.3,98.36 336.3,99 337.3,99.34 338.3,99.38 339.3,99.11 340.3,98.55 341.3,97.69 342.3,96.55 343.3,95.13 344.3,93.46 345.3,91.55 346.3,89.42 347.3,87.09 348.3,84.59 349.3,81.95 350.3,79.19 351.3,76.34 352.3,73.44 353.3,70.51 354.3,67.59 355.3,64.71 356.3,61.9 357.3,59.18 358.3,56.59 359.3,54.16 360.3,51.91 361.3,49.86 362.3,48.04 363.3,46.47 364.3,45.16 365.3,44.13 366.3,43.39 367.3,42.94" fill="none" stroke="#f5b025" stroke-width="2.4"/><polyline points="0.3,69.68 1.3,69.63 2.3,69.61 3.3,69.6 4.3,69.61 5.3,69.65 6.3,69.7 7.3,69.77 8.3,69.86 9.3,69.96 10.3,70.08 11.3,70.21 12.3,70.35 13.3,70.51 14.3,70.67 15.3,70.84 16.3,71 17.3,71.19 18.3,71.41 19.3,71.65 20.3,71.92 21.3,72.2 22.3,72.49 23.3,72.78 24.3,73.08 25.3,73.36 26.3,73.64 27.3,73.89 28.3,74.12 29.3,74.32 30.3,74.47 31.3,74.59 32.3,74.65 33.3,74.67 34.3,74.63 35.3,74.53 36.3,74.37 37.3,74.15 38.3,73.87 39.3,73.54 40.3,73.14 41.3,72.7 42.3,72.21 43.3,71.67 44.3,71.1 45.3,70.5 46.3,69.88 47.3,69.25 48.3,68.61 49.3,67.99 50.3,67.38 51.3,66.79 52.3,66.24 53.3,65.74 54.3,65.3 55.3,64.91 56.3,64.6 57.3,64.37 58.3,64.23 59.3,64.17 60.3,64.22 61.3,64.35 62.3,64.59 63.3,64.93 64.3,65.36 65.3,65.88 66.3,66.5 67.3,67.2 68.3,67.97 69.3,68.82 70.3,69.72 71.3,70.66 72.3,71.64 73.3,72.64 74.3,73.65 75.3,74.66 76.3,75.64 77.3,76.59 78.3,77.49 79.3,78.32 80.3,79.09 81.3,79.76 82.3,80.33 83.3,80.79 84.3,81.13 85.3,81.35 86.3,81.43 87.3,81.37 88.3,81.17 89.3,80.84 90.3,80.36 91.3,79.74 92.3,79 93.3,78.13 94.3,77.15 95.3,76.06 96.3,74.89 97.3,73.63 98.3,72.32 99.3,70.96 100.3,69.58 101.3,68.18 102.3,66.8 103.3,65.45 104.3,64.14 105.3,62.9 106.3,61.75 107.3,60.7 108.3,59.77 109.3,58.97 110.3,58.32 111.3,57.83 112.3,57.51 113.3,57.36 114.3,57.4 115.3,57.61 116.3,58.02 117.3,58.6 118.3,59.36 119.3,60.29 120.3,61.38 121.3,62.62 122.3,64 123.3,65.49 124.3,67.08 125.3,68.75 126.3,70.48 127.3,72.25 128.3,74.03 129.3,75.8 130.3,77.54 131.3,79.22 132.3,80.82 133.3,82.31 134.3,83.67 135.3,84.89 136.3,85.95 137.3,86.82 138.3,87.5 139.3,87.97 140.3,88.22 141.3,88.25 142.3,88.06 143.3,87.63 144.3,86.98 145.3,86.1 146.3,85.02 147.3,83.74 148.3,82.27 149.3,80.63 150.3,78.84 151.3,76.93 152.3,74.91 153.3,72.81 154.3,70.67 155.3,68.5 156.3,66.34 157.3,64.21 158.3,62.14 159.3,60.17 160.3,58.31 161.3,56.61 162.3,55.07 163.3,53.72 164.3,52.59 165.3,51.69 166.3,51.03 167.3,50.64 168.3,50.51 169.3,50.64 170.3,51.06 171.3,51.74 172.3,52.69 173.3,53.89 174.3,55.33 175.3,57 176.3,58.87 177.3,60.93 178.3,63.15 179.3,65.5 180.3,67.95 181.3,70.46 182.3,73.02 183.3,75.58 184.3,78.1 185.3,80.57 186.3,82.93 187.3,85.17 188.3,87.24 189.3,89.12 190.3,90.79 191.3,92.21 192.3,93.37 193.3,94.25 194.3,94.83 195.3,95.1 196.3,95.06 197.3,94.7 198.3,94.03 199.3,93.05 200.3,91.76 201.3,90.2 202.3,88.36 203.3,86.28 204.3,83.97 205.3,81.48 206.3,78.82 207.3,76.03 208.3,73.15 209.3,70.22 210.3,67.26 211.3,64.33 212.3,61.47 213.3,58.7 214.3,56.06 215.3,53.61 216.3,51.35 217.3,49.34 218.3,47.6 219.3,46.15 220.3,45.01 221.3,44.21 222.3,43.76 223.3,43.66 224.3,43.92 225.3,44.55 226.3,45.53 227.3,46.85 228.3,48.51 229.3,50.48 230.3,52.79 231.3,55.37 232.3,58.16 233.3,61.12 234.3,64.21 235.3,67.39 236.3,70.61 237.3,73.85 238.3,77.05 239.3,80.17 240.3,83.17 241.3,86.01 242.3,88.66 243.3,91.08 244.3,93.24 245.3,95.11 246.3,96.66 247.3,97.88 248.3,98.75 249.3,99.26 250.3,99.4 251.3,99.17 252.3,98.57 253.3,97.61 254.3,96.3 255.3,94.67 256.3,92.73 257.3,90.5 258.3,88.02 259.3,85.32 260.3,82.43 261.3,79.4 262.3,76.25 263.3,73.04 264.3,69.8 265.3,66.58 266.3,63.42 267.3,60.36 268.3,57.44 269.3,54.7 270.3,52.18 271.3,49.9 272.3,47.89 273.3,46.2 274.3,44.82 275.3,43.8 276.3,43.12 277.3,42.82 278.3,42.88 279.3,43.32 280.3,44.12 281.3,45.27 282.3,46.76 283.3,48.56 284.3,50.66 285.3,53.03 286.3,55.64 287.3,58.45 288.3,61.42 289.3,64.52 290.3,67.71 291.3,70.94 292.3,74.17 293.3,77.36 294.3,80.47 295.3,83.46 296.3,86.29 297.3,88.92 298.3,91.31 299.3,93.44 300.3,95.28 301.3,96.8 302.3,97.98 303.3,98.82 304.3,99.29 305.3,99.39 306.3,99.12 307.3,98.49 308.3,97.49 309.3,96.16 310.3,94.49 311.3,92.52 312.3,90.26 313.3,87.76 314.3,85.04 315.3,82.14 316.3,79.09 317.3,75.93 318.3,72.72 319.3,69.48 320.3,66.27 321.3,63.11 322.3,60.06 323.3,57.16 324.3,54.44 325.3,51.94 326.3,49.68 327.3,47.71 328.3,46.04 329.3,44.71 330.3,43.71 331.3,43.08 332.3,42.81 333.3,42.91 334.3,43.38 335.3,44.22 336.3,45.4 337.3,46.92 338.3,48.76 339.3,50.89 340.3,53.28 341.3,55.91 342.3,58.74 343.3,61.73 344.3,64.84 345.3,68.03 346.3,71.26 347.3,74.49 348.3,77.68 349.3,80.78 350.3,83.75 351.3,86.56 352.3,89.17 353.3,91.54 354.3,93.64 355.3,95.44 356.3,96.93 357.3,98.08 358.3,98.88 359.3,99.32 360.3,99.38 361.3,99.08 362.3,98.4 363.3,97.38 364.3,96 365.3,94.31 366.3,92.3 367.3,90.02" fill="none" stroke="#23cfe3" stroke-width="2.4"/></svg>
<div class="t" style="left:-75px;top:1060px;width:300px;height:20px;line-height:20px;text-align:center;font-size:14px;-webkit-text-stroke:0.45px currentColor;color:#22d3e6;">L</div>
<div class="t" style="left:266px;top:1060px;width:300px;height:20px;line-height:20px;text-align:center;font-size:14px;-webkit-text-stroke:0.45px currentColor;color:#ffab12;">R</div>
<svg style="position:absolute;left:88.5px;top:1065px;" width="320" height="10" viewBox="0 0 320 10"><rect x="0" y="0" width="3.6" height="10" fill="#22c8dc" opacity="0.25"/><rect x="6.08" y="0" width="3.6" height="10" fill="#22c8dc" opacity="0.28"/><rect x="12.16" y="0" width="3.6" height="10" fill="#22c8dc" opacity="0.31"/><rect x="18.24" y="0" width="3.6" height="10" fill="#22c8dc" opacity="0.34"/><rect x="24.32" y="0" width="3.6" height="10" fill="#22c8dc" opacity="0.37"/><rect x="30.4" y="0" width="3.6" height="10" fill="#22c8dc" opacity="0.4"/><rect x="36.48" y="0" width="3.6" height="10" fill="#22c8dc" opacity="0.43"/><rect x="42.56" y="0" width="3.6" height="10" fill="#22c8dc" opacity="0.46"/><rect x="48.64" y="0" width="3.6" height="10" fill="#22c8dc" opacity="0.49"/><rect x="54.72" y="0" width="3.6" height="10" fill="#22c8dc" opacity="0.52"/><rect x="60.8" y="0" width="3.6" height="10" fill="#22c8dc" opacity="0.55"/><rect x="66.88" y="0" width="3.6" height="10" fill="#22c8dc" opacity="0.58"/><rect x="72.96" y="0" width="3.6" height="10" fill="#22c8dc" opacity="0.61"/><rect x="79.04" y="0" width="3.6" height="10" fill="#22c8dc" opacity="0.64"/><rect x="85.12" y="0" width="3.6" height="10" fill="#22c8dc" opacity="0.67"/><rect x="91.2" y="0" width="3.6" height="10" fill="#22c8dc" opacity="0.7"/><rect x="97.28" y="0" width="3.6" height="10" fill="#22c8dc" opacity="0.73"/><rect x="103.36" y="0" width="3.6" height="10" fill="#22c8dc" opacity="0.76"/><rect x="109.44" y="0" width="3.6" height="10" fill="#22c8dc" opacity="0.79"/><rect x="115.52" y="0" width="3.6" height="10" fill="#22c8dc" opacity="0.82"/><rect x="121.6" y="0" width="3.6" height="10" fill="#22c8dc" opacity="0.85"/><rect x="127.68" y="0" width="3.6" height="10" fill="#22c8dc" opacity="0.88"/><rect x="133.76" y="0" width="3.6" height="10" fill="#22c8dc" opacity="0.91"/><rect x="139.84" y="0" width="3.6" height="10" fill="#22c8dc" opacity="0.94"/><rect x="145.92" y="0" width="3.6" height="10" fill="#22c8dc" opacity="0.97"/><rect x="152" y="0" width="3.6" height="10" fill="#22c8dc" opacity="1"/><rect x="158.08" y="0" width="3.6" height="10" fill="#f5b020" opacity="1"/><rect x="164.16" y="0" width="3.6" height="10" fill="#f5b020" opacity="1"/><rect x="170.24" y="0" width="3.6" height="10" fill="#f5b020" opacity="1"/><rect x="176.32" y="0" width="3.6" height="10" fill="#f5b020" opacity="1"/><rect x="182.4" y="0" width="3.6" height="10" fill="#f5b020" opacity="1"/><rect x="188.48" y="0" width="3.6" height="10" fill="#f5b020" opacity="1"/><rect x="194.56" y="0" width="3.6" height="10" fill="#f5b020" opacity="1"/><rect x="200.64" y="0" width="3.6" height="10" fill="#f5b020" opacity="1"/><rect x="206.72" y="0" width="3.6" height="10" fill="#f5b020" opacity="1"/><rect x="212.8" y="0" width="3.6" height="10" fill="#f5b020" opacity="1"/><rect x="218.88" y="0" width="3.6" height="10" fill="#f5b020" opacity="1"/><rect x="224.96" y="0" width="3.6" height="10" fill="#f5b020" opacity="1"/><rect x="231.04" y="0" width="3.6" height="10" fill="#f5b020" opacity="1"/><rect x="237.12" y="0" width="3.6" height="10" fill="#f5b020" opacity="0.6"/><rect x="243.2" y="0" width="3.6" height="10" fill="#f5b020" opacity="0.6"/><rect x="249.28" y="0" width="3.6" height="10" fill="#f5b020" opacity="0.6"/><rect x="255.36" y="0" width="3.6" height="10" fill="#f5b020" opacity="0.25"/><rect x="261.44" y="0" width="3.6" height="10" fill="#f5b020" opacity="0.25"/><rect x="267.52" y="0" width="3.6" height="10" fill="#f5b020" opacity="0.25"/><rect x="273.6" y="0" width="3.6" height="10" fill="#f5b020" opacity="0.25"/><rect x="279.68" y="0" width="3.6" height="10" fill="#f5b020" opacity="0.25"/><rect x="285.76" y="0" width="3.6" height="10" fill="#f5b020" opacity="0.25"/><rect x="291.84" y="0" width="3.6" height="10" fill="#f5b020" opacity="0.25"/><rect x="297.92" y="0" width="3.6" height="10" fill="#f5b020" opacity="0.25"/><rect x="304" y="0" width="3.6" height="10" fill="#f5b020" opacity="0.25"/><rect x="310.08" y="0" width="3.6" height="10" fill="#f5b020" opacity="0.25"/></svg>
<div style="left:68px;top:1085.7px;width:71px;height:19.3px;background:#ffab12;"></div>
<svg style="position:absolute;left:72px;top:1087.5px;" width="66" height="16" viewBox="0 0 66 16"><path d="M2 11C6 0 10 0 13 8S20 16 24 5" fill="none" stroke="#1a1a1a" stroke-width="1.8"/><path d="M52 4H62L57 11Z" fill="#1a1a1a"/></svg>
<div class="t" style="left:42.5px;top:1085.5px;width:300px;height:20px;line-height:20px;text-align:center;font-size:15.5px;color:#ffab12;">Synced</div>
<svg style="position:absolute;left:225px;top:1093px;" width="9" height="6" viewBox="0 0 9 6"><path d="M0 0H9L4.5 5Z" fill="#ffab12"/></svg>
<div style="left:250px;top:1085.5px;width:20px;height:19.5px;background:#22d3e6;"></div>
<svg style="position:absolute;left:252px;top:1087.5px;" width="16" height="16" viewBox="0 0 16 16"><circle cx="8" cy="8" r="5.5" fill="none" stroke="#1a1a1a" stroke-width="1.8"/><circle cx="6.8" cy="8" r="2" fill="#1a1a1a"/></svg>
<div class="t" style="left:145.5px;top:1085.5px;width:300px;height:20px;line-height:20px;text-align:center;font-size:15px;-webkit-text-stroke:0.45px currentColor;color:#22d3e6;">5.5 %</div>
<div style="left:321.5px;top:1085.5px;width:20.5px;height:20px;border:1.5px solid #ffab12;"></div>
<svg style="position:absolute;left:326px;top:1088px;" width="11" height="15" viewBox="0 0 11 15"><path d="M5.5 1L9 5H2Z M5.5 14L9 10H2Z" fill="#e8e8e8"/><rect x="4.7" y="4" width="1.6" height="7" fill="#e8e8e8"/></svg>
<svg style="position:absolute;left:362px;top:1087px;" width="14" height="17" viewBox="0 0 14 17"><path d="M2 6C2.5 1.5 5 1.5 6 6S8 13.5 9.5 11" fill="none" stroke="#a0a0a0" stroke-width="1.6"/><path d="M10.5 8.5L11.5 12M12.8 8L13.3 10" stroke="#a0a0a0" stroke-width="1.2"/></svg>
<div class="t" style="left:247px;top:1085.5px;width:300px;height:20px;line-height:20px;text-align:center;font-size:15px;-webkit-text-stroke:0.45px currentColor;color:#ffab12;">0.0&deg;</div>
<svg style="position:absolute;left:80.5px;top:1132px;" width="47" height="47" viewBox="0 0 47 47"><path d="M12.25 36.91A17.5 17.5 0 1 1 34.75 36.91" fill="none" stroke="#1a1a1a" stroke-width="3.2"/><path d="M12.25 36.91A17.5 17.5 0 1 1 40.97 22.52" fill="none" stroke="#23d6e8" stroke-width="3.6799999999999997"/><line x1="23.5" y1="23.5" x2="41.85" y2="22.47" stroke="#1a1a1a" stroke-width="3.2" stroke-linecap="round"/></svg>
<svg style="position:absolute;left:177.1px;top:1132px;" width="47" height="47" viewBox="0 0 47 47"><path d="M12.25 36.91A17.5 17.5 0 1 1 34.75 36.91" fill="none" stroke="#1a1a1a" stroke-width="3.2"/><path d="M12.25 36.91A17.5 17.5 0 1 1 40.9 21.67" fill="none" stroke="#23d6e8" stroke-width="3.6799999999999997"/><line x1="23.5" y1="23.5" x2="41.77" y2="21.58" stroke="#1a1a1a" stroke-width="3.2" stroke-linecap="round"/></svg>
<svg style="position:absolute;left:273.1px;top:1132px;" width="47" height="47" viewBox="0 0 47 47"><path d="M12.25 36.91A17.5 17.5 0 1 1 34.75 36.91" fill="none" stroke="#1a1a1a" stroke-width="3.2"/><line x1="23.5" y1="23.5" x2="15.36" y2="40.95" stroke="#1a1a1a" stroke-width="3.2" stroke-linecap="round"/></svg>
<div class="t" style="left:-46px;top:1171.5px;width:300px;height:20px;line-height:20px;text-align:center;font-size:15px;color:#1a1a1a;">81 %</div>
<div class="t" style="left:50.6px;top:1171.5px;width:300px;height:20px;line-height:20px;text-align:center;font-size:15px;color:#1a1a1a;">1/16</div>
<div class="t" style="left:146.6px;top:1171.5px;width:300px;height:20px;line-height:20px;text-align:center;font-size:15px;color:#1a1a1a;">0.0 %</div>
<div style="left:355.8px;top:1140.7px;width:67px;height:19px;background:#e8e8e8;border:1.3px solid #3a3a3a;"></div>
<div style="left:357px;top:1141.9px;width:31px;height:16.6px;background:#22d3e6;"></div>
<div class="t" style="left:239.3px;top:1140.2px;width:300px;height:20px;line-height:20px;text-align:center;font-size:15px;color:#111;">447 ms</div>
<div style="left:355.8px;top:1168px;width:67px;height:19px;background:#e0e0e0;border:1.3px solid #3a3a3a;"></div>
<div class="t" style="left:239.3px;top:1167.5px;width:300px;height:20px;line-height:20px;text-align:center;font-size:15px;color:#111;">0.0 %</div>
<svg style="position:absolute;left:454.7px;top:946.4px;" width="367.3" height="164.6" viewBox="0 0 367.3 164.6"><polyline points="0,51.1 106.2,93.1 106.2,49.4 214.3,93.1 214.3,49.4 322.3,93.1 322.3,49.4 366.3,72.1" fill="none" stroke="#f5b025" stroke-width="2.4" stroke-linejoin="miter"/></svg>
<svg style="position:absolute;left:491.7px;top:1065px;" width="300" height="10" viewBox="0 0 300 10"><rect x="0" y="0" width="3.6" height="10" fill="#c89020" opacity="0.18"/><rect x="6.08" y="0" width="3.6" height="10" fill="#c89020" opacity="0.22"/><rect x="12.16" y="0" width="3.6" height="10" fill="#c89020" opacity="0.26"/><rect x="18.24" y="0" width="3.6" height="10" fill="#c89020" opacity="0.3"/><rect x="24.32" y="0" width="3.6" height="10" fill="#c89020" opacity="0.34"/><rect x="30.4" y="0" width="3.6" height="10" fill="#c89020" opacity="0.37"/><rect x="36.48" y="0" width="3.6" height="10" fill="#c89020" opacity="0.41"/><rect x="42.56" y="0" width="3.6" height="10" fill="#c89020" opacity="0.45"/><rect x="48.64" y="0" width="3.6" height="10" fill="#c89020" opacity="0.48"/><rect x="54.72" y="0" width="3.6" height="10" fill="#c89020" opacity="0.51"/><rect x="60.8" y="0" width="3.6" height="10" fill="#c89020" opacity="0.55"/><rect x="66.88" y="0" width="3.6" height="10" fill="#c89020" opacity="0.58"/><rect x="72.96" y="0" width="3.6" height="10" fill="#c89020" opacity="0.6"/><rect x="79.04" y="0" width="3.6" height="10" fill="#c89020" opacity="0.63"/><rect x="85.12" y="0" width="3.6" height="10" fill="#c89020" opacity="0.66"/><rect x="91.2" y="0" width="3.6" height="10" fill="#c89020" opacity="0.68"/><rect x="97.28" y="0" width="3.6" height="10" fill="#c89020" opacity="0.7"/><rect x="103.36" y="0" width="3.6" height="10" fill="#c89020" opacity="0.72"/><rect x="109.44" y="0" width="3.6" height="10" fill="#c89020" opacity="0.73"/><rect x="115.52" y="0" width="3.6" height="10" fill="#c89020" opacity="0.75"/><rect x="121.6" y="0" width="3.6" height="10" fill="#c89020" opacity="0.76"/><rect x="127.68" y="0" width="3.6" height="10" fill="#c89020" opacity="0.77"/><rect x="133.76" y="0" width="3.6" height="10" fill="#c89020" opacity="0.77"/><rect x="139.84" y="0" width="3.6" height="10" fill="#c89020" opacity="0.78"/><rect x="145.92" y="0" width="3.6" height="10" fill="#c89020" opacity="0.78"/><rect x="152" y="0" width="3.6" height="10" fill="#c89020" opacity="0.78"/><rect x="158.08" y="0" width="3.6" height="10" fill="#c89020" opacity="0.77"/><rect x="164.16" y="0" width="3.6" height="10" fill="#c89020" opacity="0.77"/><rect x="170.24" y="0" width="3.6" height="10" fill="#c89020" opacity="0.76"/><rect x="176.32" y="0" width="3.6" height="10" fill="#c89020" opacity="0.75"/><rect x="182.4" y="0" width="3.6" height="10" fill="#c89020" opacity="0.73"/><rect x="188.48" y="0" width="3.6" height="10" fill="#c89020" opacity="0.72"/><rect x="194.56" y="0" width="3.6" height="10" fill="#c89020" opacity="0.7"/><rect x="200.64" y="0" width="3.6" height="10" fill="#c89020" opacity="0.68"/><rect x="206.72" y="0" width="3.6" height="10" fill="#c89020" opacity="0.66"/><rect x="212.8" y="0" width="3.6" height="10" fill="#c89020" opacity="0.63"/><rect x="218.88" y="0" width="3.6" height="10" fill="#c89020" opacity="0.6"/><rect x="224.96" y="0" width="3.6" height="10" fill="#c89020" opacity="0.58"/><rect x="231.04" y="0" width="3.6" height="10" fill="#c89020" opacity="0.55"/><rect x="237.12" y="0" width="3.6" height="10" fill="#c89020" opacity="0.51"/><rect x="243.2" y="0" width="3.6" height="10" fill="#c89020" opacity="0.48"/><rect x="249.28" y="0" width="3.6" height="10" fill="#c89020" opacity="0.45"/><rect x="255.36" y="0" width="3.6" height="10" fill="#c89020" opacity="0.41"/><rect x="261.44" y="0" width="3.6" height="10" fill="#c89020" opacity="0.37"/><rect x="267.52" y="0" width="3.6" height="10" fill="#c89020" opacity="0.34"/><rect x="273.6" y="0" width="3.6" height="10" fill="#c89020" opacity="0.3"/><rect x="279.68" y="0" width="3.6" height="10" fill="#c89020" opacity="0.26"/><rect x="285.76" y="0" width="3.6" height="10" fill="#c89020" opacity="0.22"/><rect x="291.84" y="0" width="3.6" height="10" fill="#c89020" opacity="0.18"/></svg>
<div style="left:460.9px;top:1085.7px;width:30.8px;height:19.3px;border:1.5px solid #ffab12;"></div>
<svg style="position:absolute;left:464px;top:1088px;" width="25" height="15" viewBox="0 0 25 15"><path d="M2 3C9 3 9 12 17 12H23M2 12C9 12 9 3 17 3H23" fill="none" stroke="#ffab12" stroke-width="1.5"/></svg>
<div style="left:499.9px;top:1085.7px;width:31.3px;height:19.3px;border:1.5px solid #ffab12;"></div>
<svg style="position:absolute;left:503px;top:1088px;" width="25" height="15" viewBox="0 0 25 15"><path d="M3 12H8C12 12 13 3 17 3H22" fill="none" stroke="#ffab12" stroke-width="1.5"/></svg>
<div class="t" style="left:435.5px;top:1085.5px;width:300px;height:20px;line-height:20px;text-align:center;font-size:15.5px;color:#ffab12;">Synced</div>
<svg style="position:absolute;left:617px;top:1093px;" width="9" height="6" viewBox="0 0 9 6"><path d="M0 0H9L4.5 5Z" fill="#ffab12"/></svg>
<div style="left:643.6px;top:1085.7px;width:19.2px;height:19.5px;background:#707070;"></div>
<div class="t" style="left:503.2px;top:1085.5px;width:300px;height:20px;line-height:20px;text-align:center;font-size:14px;color:#1a1a1a;">&Oslash;</div>
<div class="t" style="left:538px;top:1085.5px;width:300px;height:20px;line-height:20px;text-align:center;font-size:15px;color:#cfcfcf;">180&deg;</div>
<div style="left:714px;top:1085.5px;width:19.7px;height:20px;border:1.5px solid #ffab12;"></div>
<svg style="position:absolute;left:718px;top:1088px;" width="11" height="15" viewBox="0 0 11 15"><path d="M5.5 1L9 5H2Z M5.5 14L9 10H2Z" fill="#e8e8e8"/><rect x="4.7" y="4" width="1.6" height="7" fill="#e8e8e8"/></svg>
<svg style="position:absolute;left:754px;top:1087px;" width="14" height="17" viewBox="0 0 14 17"><path d="M2 6C2.5 1.5 5 1.5 6 6S8 13.5 9.5 11" fill="none" stroke="#a0a0a0" stroke-width="1.6"/><path d="M10.5 8.5L11.5 12M12.8 8L13.3 10" stroke="#a0a0a0" stroke-width="1.2"/></svg>
<div class="t" style="left:639px;top:1085.5px;width:300px;height:20px;line-height:20px;text-align:center;font-size:15px;-webkit-text-stroke:0.45px currentColor;color:#ffab12;">0.0&deg;</div>
<svg style="position:absolute;left:473.2px;top:1132px;" width="47" height="47" viewBox="0 0 47 47"><path d="M12.25 36.91A17.5 17.5 0 1 1 34.75 36.91" fill="none" stroke="#1a1a1a" stroke-width="3.2"/><path d="M12.25 36.91A17.5 17.5 0 0 1 32.46 8.47" fill="none" stroke="#23d6e8" stroke-width="3.6799999999999997"/><line x1="23.5" y1="23.5" x2="32.91" y2="7.72" stroke="#1a1a1a" stroke-width="3.2" stroke-linecap="round"/></svg>
<svg style="position:absolute;left:570px;top:1132px;" width="47" height="47" viewBox="0 0 47 47"><path d="M12.25 36.91A17.5 17.5 0 1 1 34.75 36.91" fill="none" stroke="#1a1a1a" stroke-width="3.2"/><path d="M12.25 36.91A17.5 17.5 0 0 1 8.99 13.71" fill="none" stroke="#23d6e8" stroke-width="3.6799999999999997"/><line x1="23.5" y1="23.5" x2="8.27" y2="13.22" stroke="#1a1a1a" stroke-width="3.2" stroke-linecap="round"/></svg>
<svg style="position:absolute;left:666.3px;top:1132px;" width="47" height="47" viewBox="0 0 47 47"><path d="M12.25 36.91A17.5 17.5 0 1 1 34.75 36.91" fill="none" stroke="#1a1a1a" stroke-width="3.2"/><path d="M12.25 36.91A17.5 17.5 0 0 1 6 23.38" fill="none" stroke="#23d6e8" stroke-width="3.6799999999999997"/><line x1="23.5" y1="23.5" x2="5.13" y2="23.37" stroke="#1a1a1a" stroke-width="3.2" stroke-linecap="round"/></svg>
<div class="t" style="left:346.7px;top:1171.5px;width:300px;height:20px;line-height:20px;text-align:center;font-size:15px;color:#1a1a1a;">61 %</div>
<div class="t" style="left:443.5px;top:1171.5px;width:300px;height:20px;line-height:20px;text-align:center;font-size:15px;color:#1a1a1a;">3/4</div>
<div class="t" style="left:539.8px;top:1171.5px;width:300px;height:20px;line-height:20px;text-align:center;font-size:15px;color:#1a1a1a;">-60 %</div>
<div style="left:748.5px;top:1140.7px;width:67px;height:19px;background:#e8e8e8;border:1.3px solid #3a3a3a;"></div>
<div class="t" style="left:632px;top:1140.2px;width:300px;height:20px;line-height:20px;text-align:center;font-size:15px;color:#111;">0.00 ms</div>
<div style="left:748.5px;top:1168px;width:67px;height:19px;background:#e0e0e0;border:1.3px solid #3a3a3a;"></div>
<div class="t" style="left:632px;top:1167.5px;width:300px;height:20px;line-height:20px;text-align:center;font-size:15px;color:#111;">0.0 %</div>
<div style="left:841px;top:914.6px;width:667.6px;height:284.2px;background:#b9b9b9;border-radius:5px;"></div>
<div style="left:841px;top:914.6px;width:667.6px;height:25px;background:#c1c1c1;border-radius:5px 5px 0 0;"></div>
<div class="t" style="left:871px;top:917.3px;width:300px;height:20px;line-height:20px;text-align:left;font-size:15px;letter-spacing:0.3px;color:#1a1a1a;-webkit-text-stroke:0.5px #1a1a1a;">Auto Filter</div>
<svg style="position:absolute;left:1436px;top:916.6px;" width="22" height="22" viewBox="0 0 22 22"><circle cx="11" cy="11" r="9.3" fill="#d4d4d4" stroke="#333" stroke-width="1.5"/><path d="M11.3 6.3A4.7 4.7 0 0 0 6.4 10.6" fill="none" stroke="#1a1a1a" stroke-width="1.9"/><path d="M10.7 15.7A4.7 4.7 0 0 0 15.6 11.4" fill="none" stroke="#1a1a1a" stroke-width="1.9"/><path d="M4.2 9.6L8.6 9.6L6.4 12.6Z M17.8 12.4L13.4 12.4L15.6 9.4Z" fill="#1a1a1a"/></svg>
<svg style="position:absolute;left:1460px;top:916.6px;" width="22" height="22" viewBox="0 0 22 22"><circle cx="11" cy="11" r="9.3" fill="#d4d4d4" stroke="#333" stroke-width="1.5"/><path d="M6.2 6.2H14.2L15.8 7.8V15.8H6.2Z" fill="#111"/><rect x="8.4" y="7" width="4.4" height="3" fill="#d4d4d4"/></svg>
<svg style="position:absolute;left:1484px;top:916.6px;" width="22" height="22" viewBox="0 0 22 22"><circle cx="11" cy="11" r="9.3" fill="#d4d4d4" stroke="#333" stroke-width="1.5"/><circle cx="6.8" cy="11.2" r="1.5" fill="#111"/><circle cx="11" cy="11.2" r="1.5" fill="#111"/><circle cx="15.2" cy="11.2" r="1.5" fill="#111"/></svg>
<div style="left:846px;top:918.3px;width:18px;height:18px;background:#fdb213;border-radius:50%;border:1.5px solid #5a4410;"></div>
<div style="left:844.8px;top:940.7px;width:27.2px;height:254.3px;background:#a9a9a9;border-radius:4px;"></div>
<svg style="position:absolute;left:847.4px;top:944.6px;" width="22" height="22" viewBox="0 0 22 22"><circle cx="11" cy="11" r="9.3" fill="#d4d4d4" stroke="#333" stroke-width="1.5"/><path d="M6 8H16L11 15Z" fill="#111"/></svg>
<svg style="position:absolute;left:847.4px;top:969.5px;" width="22" height="22" viewBox="0 0 22 22"><circle cx="11" cy="11" r="9.3" fill="#d4d4d4" stroke="#333" stroke-width="1.5"/><path d="M6.5 14V11A4.5 4.5 0 0 1 15.5 11V14" fill="none" stroke="#1a1a1a" stroke-width="1.8"/><rect x="5.5" y="11.5" width="3" height="4.5" rx="1" fill="#1a1a1a"/><rect x="13.5" y="11.5" width="3" height="4.5" rx="1" fill="#1a1a1a"/></svg>
<div class="t" style="left:813.4px;top:1127px;width:90px;height:20px;line-height:20px;text-align:center;transform:rotate(-90deg);font-size:16px;letter-spacing:0.3px;color:#1a1a1a;-webkit-text-stroke:0.35px #1a1a1a;">Sidechain</div>
<div style="left:853.4px;top:1177.7px;width:10px;height:10px;background:#808080;border-radius:50%;"></div>
<div style="left:876.4px;top:940.7px;width:88.2px;height:254.3px;background:#a9a9a9;border-radius:4px;"></div>
<div class="t" style="left:770.5px;top:945px;width:300px;height:20px;line-height:20px;text-align:center;font-size:15px;letter-spacing:0.5px;color:#1a1a1a;-webkit-text-stroke:0.25px #1a1a1a;">Freq</div>
<svg style="position:absolute;left:888.5px;top:960.6px;" width="64" height="64" viewBox="0 0 64 64"><path d="M15.29 51.92A26 26 0 1 1 48.71 51.92" fill="none" stroke="#1a1a1a" stroke-width="3.4"/><path d="M15.29 51.92A26 26 0 1 1 57.47 26.77" fill="none" stroke="#23d6e8" stroke-width="3.9099999999999997"/><line x1="32" y1="32" x2="57.47" y2="26.77" stroke="#1a1a1a" stroke-width="3.4" stroke-linecap="round"/></svg>
<div class="t" style="left:770.5px;top:1020.9px;width:300px;height:20px;line-height:20px;text-align:center;font-size:15px;color:#1a1a1a;">3.28 kHz</div>
<div style="left:881.9px;top:1057.5px;width:76.5px;height:18.3px;background:#dedede;border:1.3px solid #3a3a3a;"></div>
<svg style="position:absolute;left:885px;top:1059.5px;" width="70" height="14" viewBox="0 0 70 14"><path d="M2 13V6Q2 2 5.5 2Q9 2 9 6V13M9 6Q9 2 12.5 2Q16 2 16 6V13M16 6Q16 2 19.5 2Q23 2 23 6V13" fill="none" stroke="#1a1a1a" stroke-width="1.6"/><path d="M59 3H69L64 10Z" fill="#1a1a1a"/></svg>
<div style="left:881.9px;top:1081.5px;width:35.8px;height:18.5px;background:#c4c4c4;border:1.3px solid #6a6a6a;"></div>
<div class="t" style="left:749.8px;top:1080.8px;width:300px;height:20px;line-height:20px;text-align:center;font-size:15px;color:#7a7a7a;">12</div>
<div style="left:922.6px;top:1081.5px;width:35.8px;height:18.5px;background:#ececec;border:1.3px solid #3a3a3a;"></div>
<div class="t" style="left:790.5px;top:1080.8px;width:300px;height:20px;line-height:20px;text-align:center;font-size:15px;color:#111;">24</div>
<div class="t" style="left:770.5px;top:1106px;width:300px;height:20px;line-height:20px;text-align:center;font-size:15px;letter-spacing:0.5px;color:#1a1a1a;-webkit-text-stroke:0.25px #1a1a1a;">Res</div>
<div style="left:881.9px;top:1126px;width:76.5px;height:18.3px;background:#e6e6e6;border:1.3px solid #3a3a3a;"></div>
<div style="left:883.1px;top:1127.2px;width:33.5px;height:15.9px;background:#1fc6dc;"></div>
<div class="t" style="left:770.5px;top:1125.2px;width:300px;height:20px;line-height:20px;text-align:center;font-size:15px;color:#111;">44 %</div>
<div class="t" style="left:770.5px;top:1150.5px;width:300px;height:20px;line-height:20px;text-align:center;font-size:15px;letter-spacing:0.5px;color:#1a1a1a;-webkit-text-stroke:0.25px #1a1a1a;">Morph</div>
<div style="left:881.9px;top:1171.6px;width:76.5px;height:17.5px;background:#e4e4e4;border:1.3px solid #3a3a3a;"></div>
<div class="t" style="left:770.5px;top:1170.5px;width:300px;height:20px;line-height:20px;text-align:center;font-size:15px;color:#111;">0.0 %</div>
<div style="left:968.3px;top:940.7px;width:446.5px;height:165.5px;background:#1f1f1f;border-radius:4px;"></div>
<div style="left:968.3px;top:1072.8px;width:446.5px;height:33.4px;background:#191919;border-radius:0 0 4px 4px;"></div>
<svg style="position:absolute;left:968.3px;top:940.7px;" width="446.5" height="132" viewBox="0 0 446.5 132"><rect x="104.9" y="0" width="1" height="132" fill="#3c3c3c"/><rect x="252.7" y="0" width="1" height="132" fill="#3c3c3c"/><rect x="400.7" y="0" width="1" height="132" fill="#3c3c3c"/><rect x="150" y="66.7" width="296.5" height="1" fill="#3c3c3c"/><path d="M0 132 L0 106.98 L1 106.94 L2 106.89 L3 106.84 L4 106.78 L5 106.73 L6 106.69 L7 106.64 L8 106.59 L9 106.53 L10 106.48 L11 106.44 L12 106.39 L13 106.34 L14 106.28 L15 106.23 L16 106.19 L17 106.14 L18 106.09 L19 106.03 L20 105.98 L21 105.94 L22 105.89 L23 105.84 L24 105.78 L25 105.73 L26 105.69 L27 105.64 L28 105.59 L29 105.53 L30 105.48 L31 105.44 L32 105.39 L33 105.34 L34 105.28 L35 105.23 L36 105.19 L37 105.14 L38 105.09 L39 105.03 L40 104.98 L41 104.94 L42 104.89 L43 104.84 L44 104.78 L45 104.73 L46 104.69 L47 104.64 L48 104.59 L49 104.53 L50 104.48 L51 104.44 L52 104.39 L53 104.34 L54 104.28 L55 104.23 L56 104.19 L57 104.14 L58 104.09 L59 104.03 L60 103.98 L61 103.94 L62 103.89 L63 103.84 L64 103.78 L65 103.73 L66 103.69 L67 103.64 L68 103.59 L69 103.53 L70 103.48 L71 103.44 L72 103.39 L73 103.34 L74 103.28 L75 103.23 L76 103.19 L77 103.14 L78 103.09 L79 103.03 L80 102.98 L81 102.94 L82 102.89 L83 102.84 L84 102.78 L85 102.73 L86 102.69 L87 102.64 L88 102.59 L89 102.53 L90 102.48 L91 102.44 L92 102.39 L93 102.34 L94 102.28 L95 102.23 L96 102.19 L97 102.14 L98 102.09 L99 102.03 L100 101.98 L101 101.94 L102 101.89 L103 101.84 L104 101.78 L105 101.73 L106 101.69 L107 102.14 L108 103.7 L109 105.19 L110 106.6 L111 107.93 L112 109.19 L113 110.39 L114 111.53 L115 110.1 L116 107.22 L117 103.83 L118 99.81 L119 95.06 L120 89.47 L121 82.94 L122 75.48 L123 67.21 L124 58.53 L125 50.17 L126 43.24 L127 38.93 L128 38.17 L129 41.13 L130 47.16 L131 55.09 L132 63.75 L133 72.25 L134 80.07 L135 86.97 L136 92.93 L137 98 L138 102.3 L139 105.93 L140 109 L141 111.61 L142 113.83 L143 115.73 L144 117.36 L145 118.78 L146 120 L147 121.07 L148 122.01 L149 122.84 L150 123.57 L151 124.22 L152 124.8 L153 125.32 L154 125.78 L155 126.2 L156 126.18 L157 125.47 L158 124.63 L159 123.62 L160 122.41 L161 120.92 L162 119.08 L163 116.77 L164 113.85 L165 110.11 L166 105.27 L167 98.98 L168 90.87 L169 80.69 L170 68.76 L171 56.74 L172 48.03 L173 46.38 L174 52.62 L175 63.81 L176 76.08 L177 87.05 L178 95.97 L179 102.95 L180 108.32 L181 112.46 L182 115.68 L183 118.22 L184 120.23 L185 121.85 L186 123.17 L187 124.25 L188 125.15 L189 125.91 L190 126.55 L191 127.1 L192 127.18 L193 125.25 L194 122.05 L195 116.41 L196 106.46 L197 92.8 L198 88.97 L199 101.07 L200 113.05 L201 120.18 L202 124.17 L203 126.52 L204 127.97 L205 128.73 L206 128.12 L207 127.33 L208 126.28 L209 124.85 L210 122.83 L211 119.9 L212 115.46 L213 108.49 L214 97.38 L215 80.71 L216 62.45 L217 58.06 L218 72.96 L219 91.38 L220 104.65 L221 113.05 L222 118.35 L223 121.8 L224 124.13 L225 125.76 L226 126.95 L227 127.83 L228 128.5 L229 129.02 L230 129.44 L231 129.78 L232 130.05 L233 129.91 L234 129.47 L235 128.89 L236 128.08 L237 126.93 L238 125.2 L239 122.49 L240 117.98 L241 110.03 L242 96.01 L243 76.77 L244 71.36 L245 88.41 L246 105.3 L247 115.34 L248 120.97 L249 124.27 L250 126.32 L251 127.67 L252 128.59 L253 127.58 L254 126.08 L255 123.72 L256 119.79 L257 112.87 L258 100.65 L259 83.89 L260 79.19 L261 94.04 L262 108.75 L263 117.49 L264 122.4 L265 125.27 L266 127.06 L267 128.23 L268 127.38 L269 124.1 L270 116.5 L271 99.44 L272 92.12 L273 111 L274 121.83 L275 126.36 L276 126.78 L277 123.36 L278 115.76 L279 97.65 L280 77.32 L281 97.65 L282 115.76 L283 123.36 L284 126.51 L285 126.22 L286 123.28 L287 113.99 L288 97.8 L289 104.07 L290 118.71 L291 124.5 L292 124.23 L293 123.96 L294 123.69 L295 121.88 L296 111.03 L297 108.76 L298 120.22 L299 122.44 L300 122.2 L301 121.97 L302 121.75 L303 117.93 L304 102.18 L305 88.14 L306 106.29 L307 119.78 L308 120.52 L309 120.34 L310 120.16 L311 119.79 L312 106.53 L313 85.91 L314 97.78 L315 115.83 L316 119.24 L317 119.11 L318 118.98 L319 118.87 L320 118.76 L321 110.22 L322 110.22 L323 118.47 L324 118.39 L325 118.32 L326 118.25 L327 118.2 L328 118.15 L329 113.91 L330 107.63 L331 118.04 L332 118.02 L333 118.01 L334 118 L335 118 L336 118.01 L337 106.11 L338 87.83 L339 101.97 L340 117.83 L341 118.17 L342 118.23 L343 118.29 L344 118.36 L345 114.98 L346 98.42 L347 101.7 L348 117.38 L349 118.82 L350 118.94 L351 119.06 L352 119.18 L353 119.32 L354 119.18 L355 116.3 L356 119.76 L357 119.92 L358 120.09 L359 120.27 L360 120.45 L361 120.64 L362 115.22 L363 105.29 L364 115.22 L365 121.44 L366 121.66 L367 121.88 L368 122.11 L369 121.93 L370 111.2 L371 92.51 L372 99.75 L373 116.65 L374 123.59 L375 123.85 L376 124.12 L377 124.39 L378 122.11 L379 111.49 L380 109.27 L381 120.48 L382 125.8 L383 126.1 L384 126.4 L385 126.7 L386 127 L387 124.16 L388 120.47 L389 125.24 L390 128.24 L391 128.55 L392 128.87 L393 127.89 L394 124.49 L395 116.33 L396 103.64 L397 110.95 L398 122.05 L399 126.85 L400 128.96 L401 130.02 L402 130.61 L403 130.98 L404 131.22 L405 131.38 L406 131.5 L407 131.59 L408 131.65 L409 131.7 L410 131.74 L411 131.78 L412 131.8 L413 131.83 L414 131.85 L415 131.86 L416 131.88 L417 131.89 L418 131.9 L419 131.91 L420 131.91 L421 131.92 L422 131.93 L423 131.93 L424 131.94 L425 131.94 L426 131.94 L427 131.95 L428 131.95 L429 131.95 L430 131.95 L431 131.95 L432 131.95 L433 131.95 L434 131.95 L435 131.95 L436 131.95 L437 131.95 L438 131.95 L439 131.95 L440 131.95 L441 131.95 L442 131.95 L443 131.95 L444 131.95 L445 131.95 L446 131.95 L446.5 132Z" fill="#4d4d4d"/><path d="M0 66.7 L181.7 67.3 C256.7 69.3 296.7 89.3 329.2 114.8 L332.91 113.97 L336.62 111.55 L340.33 107.7 L344.03 102.67 L347.74 96.83 L351.45 90.55 L355.16 84.27 L358.87 78.42 L362.58 73.4 L366.28 69.55 L369.99 67.13 L373.7 66.3 L375.87 67.12 L378.03 69.52 L380.2 73.33 L382.37 78.3 L384.53 84.09 L386.7 90.3 L388.87 96.51 L391.03 102.3 L393.2 107.27 L395.37 111.08 L397.53 113.48 L399.7 114.3 L401.33 113.48 L402.97 111.08 L404.6 107.27 L406.23 102.3 L407.87 96.51 L409.5 90.3 L411.13 84.09 L412.77 78.3 L414.4 73.33 L416.03 69.52 L417.67 67.12 L419.3 66.3 L420.42 67.12 L421.53 69.52 L422.65 73.33 L423.77 78.3 L424.88 84.09 L426 90.3 L427.12 96.51 L428.23 102.3 L429.35 107.27 L430.47 111.08 L431.58 113.48 L432.7 114.3 L433.83 113.48 L434.95 111.08 L436.08 107.27 L437.2 102.3 L438.33 96.51 L439.45 90.3 L440.58 84.09 L441.7 78.3 L442.83 73.33 L443.95 69.52 L445.08 67.12 L446.2 66.3" fill="none" stroke="#22d3e6" stroke-width="2.6" stroke-linejoin="round"/><circle cx="324.3" cy="72.9" r="8" fill="none" stroke="#f5b020" stroke-width="2.4"/></svg>
<div class="t" style="left:840.5px;top:1080.5px;width:300px;height:20px;line-height:20px;text-align:center;font-size:15px;-webkit-text-stroke:0.45px currentColor;color:#e6e6e6;">LFO</div>
<div style="left:1026.3px;top:1082.7px;width:53.6px;height:17px;background:#ffab12;"></div>
<div class="t" style="left:903px;top:1081.2px;width:300px;height:20px;line-height:20px;text-align:center;font-size:15px;color:#1a1a1a;">Phase</div>
<div class="t" style="left:959px;top:1080.5px;width:300px;height:20px;line-height:20px;text-align:center;font-size:15px;color:#8a8a8a;">&Oslash;</div>
<div class="t" style="left:987.4px;top:1080.5px;width:300px;height:20px;line-height:20px;text-align:center;font-size:15px;color:#ffab12;">0.0&deg;</div>
<svg style="position:absolute;left:1186px;top:1082px;" width="14" height="17" viewBox="0 0 14 17"><path d="M2 6C2.5 1.5 5 1.5 6 6S8 13.5 9.5 11" fill="none" stroke="#a0a0a0" stroke-width="1.6"/><path d="M10.5 8.5L11.5 12M12.8 8L13.3 10" stroke="#a0a0a0" stroke-width="1.2"/></svg>
<div class="t" style="left:1073.5px;top:1080.5px;width:300px;height:20px;line-height:20px;text-align:center;font-size:15px;color:#9a9a9a;">0.0&deg;</div>
<svg style="position:absolute;left:1274px;top:1082px;" width="14" height="17" viewBox="0 0 14 17"><path d="M2 15L6 2H8L12 15Z M4 11H10 M7 11L11 5" fill="none" stroke="#8a8a8a" stroke-width="1.4"/></svg>
<div class="t" style="left:1164.8px;top:1080.5px;width:300px;height:20px;line-height:20px;text-align:center;font-size:15px;-webkit-text-stroke:0.45px currentColor;color:#ffab12;">None</div>
<svg style="position:absolute;left:1341px;top:1088px;" width="9" height="6" viewBox="0 0 9 6"><path d="M0 0H9L4.5 5Z" fill="#ffab12"/></svg>
<div class="t" style="left:1216px;top:1080.5px;width:300px;height:20px;line-height:20px;text-align:center;font-size:15px;color:#9a9a9a;">8</div>
<div class="t" style="left:869.6px;top:1116px;width:300px;height:20px;line-height:20px;text-align:center;font-size:15px;letter-spacing:0.5px;color:#1a1a1a;-webkit-text-stroke:0.25px #1a1a1a;">LFO Amt</div>
<svg style="position:absolute;left:996.1px;top:1129.5px;" width="47" height="47" viewBox="0 0 47 47"><path d="M12.25 36.91A17.5 17.5 0 1 1 34.75 36.91" fill="none" stroke="#1a1a1a" stroke-width="3.2"/><line x1="23.5" y1="23.5" x2="15.36" y2="40.95" stroke="#1a1a1a" stroke-width="3.2" stroke-linecap="round"/></svg>
<div class="t" style="left:869.6px;top:1170px;width:300px;height:20px;line-height:20px;text-align:center;font-size:15px;color:#1a1a1a;">0.0 %</div>
<div class="t" style="left:951px;top:1116px;width:300px;height:20px;line-height:20px;text-align:center;font-size:15px;letter-spacing:0.5px;color:#1a1a1a;-webkit-text-stroke:0.25px #1a1a1a;">Rate</div>
<svg style="position:absolute;left:1077.5px;top:1129.5px;" width="47" height="47" viewBox="0 0 47 47"><path d="M12.25 36.91A17.5 17.5 0 1 1 34.75 36.91" fill="none" stroke="#1a1a1a" stroke-width="3.2"/><path d="M12.25 36.91A17.5 17.5 0 0 1 11.17 11.08" fill="none" stroke="#23d6e8" stroke-width="3.6799999999999997"/><line x1="23.5" y1="23.5" x2="11.17" y2="11.08" stroke="#1a1a1a" stroke-width="3.2" stroke-linecap="round"/></svg>
<div class="t" style="left:951px;top:1170px;width:300px;height:20px;line-height:20px;text-align:center;font-size:15px;color:#1a1a1a;">1.00 Hz</div>
<div class="t" style="left:1147.3px;top:1116px;width:300px;height:20px;line-height:20px;text-align:left;font-size:15px;letter-spacing:0.5px;color:#1a1a1a;-webkit-text-stroke:0.25px #1a1a1a;">Wave</div>
<div class="t" style="left:1147.3px;top:1143px;width:300px;height:20px;line-height:20px;text-align:left;font-size:15px;letter-spacing:0.5px;color:#1a1a1a;-webkit-text-stroke:0.25px #1a1a1a;">Morph</div>
<div class="t" style="left:1147.3px;top:1170px;width:300px;height:20px;line-height:20px;text-align:left;font-size:15px;letter-spacing:0.5px;color:#1a1a1a;-webkit-text-stroke:0.25px #1a1a1a;">Mode</div>
<div style="left:1207px;top:1117.3px;width:75.7px;height:17.3px;background:#e4e4e4;border:1.3px solid #3a3a3a;"></div>
<svg style="position:absolute;left:1210px;top:1119px;" width="72" height="14" viewBox="0 0 72 14"><path d="M2 11C5 1 8 1 11 6S16 13 20 3" fill="none" stroke="#1a1a1a" stroke-width="1.5"/><path d="M62 3H72L67 10Z" fill="#1a1a1a"/></svg>
<div style="left:1207px;top:1144px;width:75.7px;height:17.7px;background:#e4e4e4;border:1.3px solid #3a3a3a;"></div>
<div class="t" style="left:1095px;top:1143px;width:300px;height:20px;line-height:20px;text-align:center;font-size:15px;color:#111;">0.0 %</div>
<div style="left:1207px;top:1171px;width:75.7px;height:17.9px;background:#e4e4e4;border:1.3px solid #3a3a3a;"></div>
<div class="t" style="left:1212px;top:1170px;width:300px;height:20px;line-height:20px;text-align:left;font-size:15px;color:#111;">Rate</div>
<svg style="position:absolute;left:1269px;top:1176px;" width="10" height="7" viewBox="0 0 10 7"><path d="M0 0H10L5 7Z" fill="#1a1a1a"/></svg>
<div style="left:1292.6px;top:1110.6px;width:121.7px;height:84.4px;background:#a9a9a9;border-radius:4px;"></div>
<div class="t" style="left:1203.5px;top:1116px;width:300px;height:20px;line-height:20px;text-align:center;font-size:15px;letter-spacing:0.5px;color:#1a1a1a;-webkit-text-stroke:0.25px #1a1a1a;">Envelope</div>
<svg style="position:absolute;left:1330px;top:1129.5px;" width="47" height="47" viewBox="0 0 47 47"><path d="M12.25 36.91A17.5 17.5 0 1 1 34.75 36.91" fill="none" stroke="#1a1a1a" stroke-width="3.2"/><line x1="23.5" y1="23.5" x2="23.5" y2="6" stroke="#1a1a1a" stroke-width="3.2" stroke-linecap="round"/></svg>
<div class="t" style="left:1203.5px;top:1170px;width:300px;height:20px;line-height:20px;text-align:center;font-size:15px;color:#1a1a1a;">0.0 %</div>
<div style="left:1418.5px;top:940.7px;width:87.5px;height:254.3px;background:#a9a9a9;border-radius:4px;"></div>
<div class="t" style="left:1312.5px;top:945px;width:300px;height:20px;line-height:20px;text-align:center;font-size:15px;letter-spacing:0.5px;color:#1a1a1a;-webkit-text-stroke:0.25px #1a1a1a;">Drive</div>
<svg style="position:absolute;left:1439px;top:960.5px;" width="47" height="47" viewBox="0 0 47 47"><path d="M12.25 36.91A17.5 17.5 0 1 1 34.75 36.91" fill="none" stroke="#1a1a1a" stroke-width="3.2"/><line x1="23.5" y1="23.5" x2="15.36" y2="40.95" stroke="#1a1a1a" stroke-width="3.2" stroke-linecap="round"/></svg>
<div class="t" style="left:1312.5px;top:999px;width:300px;height:20px;line-height:20px;text-align:center;font-size:15px;color:#1a1a1a;">0.0 %</div>
<div style="left:1424.2px;top:1024.7px;width:75.8px;height:18px;background:#b0b0b0;border:1.3px solid #3a3a3a;"></div>
<div class="t" style="left:1429px;top:1023.7px;width:300px;height:20px;line-height:20px;text-align:left;font-size:15px;color:#111;">SVF</div>
<svg style="position:absolute;left:1487px;top:1030px;" width="10" height="7" viewBox="0 0 10 7"><path d="M0 0H10L5 7Z" fill="#1a1a1a"/></svg>
<div style="left:1424.2px;top:1058px;width:59.3px;height:17.3px;background:#dcdcdc;border:1.3px solid #3a3a3a;"></div>
<div class="t" style="left:1303.8px;top:1056.7px;width:300px;height:20px;line-height:20px;text-align:center;font-size:15px;color:#111;">Clip</div>
<div style="left:1490.5px;top:1062.2px;width:9px;height:9px;background:#7c7c7c;border-radius:50%;"></div>
<div style="left:1424.2px;top:1082.2px;width:75.8px;height:17.3px;background:#1fc6dc;border:1.3px solid #3a3a3a;"></div>
<div class="t" style="left:1312px;top:1081px;width:300px;height:20px;line-height:20px;text-align:center;font-size:15px;color:#111;">0.0 dB</div>
<div class="t" style="left:1312.5px;top:1116px;width:300px;height:20px;line-height:20px;text-align:center;font-size:15px;letter-spacing:0.5px;color:#1a1a1a;-webkit-text-stroke:0.25px #1a1a1a;">Dry/Wet</div>
<svg style="position:absolute;left:1439px;top:1129.5px;" width="47" height="47" viewBox="0 0 47 47"><path d="M12.25 36.91A17.5 17.5 0 1 1 34.75 36.91" fill="none" stroke="#1a1a1a" stroke-width="3.2"/><path d="M12.25 36.91A17.5 17.5 0 0 1 7.72 15.94" fill="none" stroke="#23d6e8" stroke-width="3.6799999999999997"/><line x1="23.5" y1="23.5" x2="7.72" y2="15.94" stroke="#1a1a1a" stroke-width="3.2" stroke-linecap="round"/></svg>
<div class="t" style="left:1312.5px;top:1170px;width:300px;height:20px;line-height:20px;text-align:center;font-size:15px;color:#1a1a1a;">27 %</div>
<svg style="position:absolute;left:1513.6px;top:975.3px;" width="7.5" height="163" viewBox="0 0 7.5 163"><rect x="0" y="0" width="3.25" height="163" fill="#2a2a2a"/><rect x="0" y="70.7" width="3.25" height="92.3" fill="#22dd55"/><rect x="4.25" y="0" width="3.25" height="163" fill="#2a2a2a"/><rect x="4.25" y="70.7" width="3.25" height="92.3" fill="#22dd55"/><rect x="0" y="24.7" width="7.5" height="1.2" fill="#9a9a9a"/><rect x="0" y="40.7" width="7.5" height="1.4" fill="#e0b030"/></svg>
<div style="left:1522.7px;top:915.6px;width:342.8px;height:282.4px;background:#b9b9b9;border-radius:5px;"></div>
<div style="left:1522.7px;top:915.6px;width:342.8px;height:25px;background:#c1c1c1;border-radius:5px 5px 0 0;"></div>
<div class="t" style="left:1579.4px;top:917.3px;width:300px;height:20px;line-height:20px;text-align:left;font-size:15px;letter-spacing:0.3px;color:#1a1a1a;-webkit-text-stroke:0.5px #1a1a1a;">Saturator</div>
<svg style="position:absolute;left:1791.6px;top:916.6px;" width="22" height="22" viewBox="0 0 22 22"><circle cx="11" cy="11" r="9.3" fill="#d4d4d4" stroke="#333" stroke-width="1.5"/><path d="M11.3 6.3A4.7 4.7 0 0 0 6.4 10.6" fill="none" stroke="#1a1a1a" stroke-width="1.9"/><path d="M10.7 15.7A4.7 4.7 0 0 0 15.6 11.4" fill="none" stroke="#1a1a1a" stroke-width="1.9"/><path d="M4.2 9.6L8.6 9.6L6.4 12.6Z M17.8 12.4L13.4 12.4L15.6 9.4Z" fill="#1a1a1a"/></svg>
<svg style="position:absolute;left:1816.3px;top:916.6px;" width="22" height="22" viewBox="0 0 22 22"><circle cx="11" cy="11" r="9.3" fill="#d4d4d4" stroke="#333" stroke-width="1.5"/><path d="M6.2 6.2H14.2L15.8 7.8V15.8H6.2Z" fill="#111"/><rect x="8.4" y="7" width="4.4" height="3" fill="#d4d4d4"/></svg>
<svg style="position:absolute;left:1840.4px;top:916.6px;" width="22" height="22" viewBox="0 0 22 22"><circle cx="11" cy="11" r="9.3" fill="#d4d4d4" stroke="#333" stroke-width="1.5"/><circle cx="6.8" cy="11.2" r="1.5" fill="#111"/><circle cx="11" cy="11.2" r="1.5" fill="#111"/><circle cx="15.2" cy="11.2" r="1.5" fill="#111"/></svg>
<div style="left:1527.9px;top:918.5px;width:18px;height:18px;background:#fdb213;border-radius:50%;border:1.5px solid #5a4410;"></div>
<svg style="position:absolute;left:1552px;top:916.5px;" width="22" height="22" viewBox="0 0 22 22"><circle cx="11" cy="11" r="9.3" fill="#d4d4d4" stroke="#333" stroke-width="1.5"/><path d="M6 8H16L11 15Z" fill="#111"/></svg>
<div style="left:1529.3px;top:946.7px;width:330.6px;height:164.3px;background:#1f1f1f;border-radius:4px;"></div>
<div style="left:1535.5px;top:953.3px;width:158.1px;height:18.9px;background:#1ee6fb;"></div>
<div class="t" style="left:1541px;top:952.8px;width:300px;height:20px;line-height:20px;text-align:left;font-size:15px;color:#111;">Medium Curve</div>
<svg style="position:absolute;left:1678px;top:958.5px;" width="11" height="8" viewBox="0 0 11 8"><path d="M0 0H11L5.5 8Z" fill="#111"/></svg>
<svg style="position:absolute;left:1536px;top:979.3px;" width="317.6" height="99.7" viewBox="0 0 317.6 99.7"><rect x="0.5" y="0.5" width="316.6" height="98.7" fill="none" stroke="#444" stroke-width="1"/><rect x="143" y="1" width="26.5" height="98" fill="#1d4c55"/><rect x="158.7" y="1" width="1" height="98" fill="#3a7a85"/><rect x="1" y="48.7" width="316" height="1" fill="#444"/><path d="M1 82.2 L112.8 82.2 C134 82.2 144 60.7 158 48.7 C182 18.7 189 17 209 17 L316 17" fill="none" stroke="#22d3e6" stroke-width="2.6"/></svg>
<div style="left:1541px;top:1091.5px;width:8px;height:8px;background:#4a4a4a;border-radius:50%;"></div>
<div class="t" style="left:1556.7px;top:1085.5px;width:300px;height:20px;line-height:20px;text-align:left;font-size:15px;-webkit-text-stroke:0.45px currentColor;color:#22d3e6;">No Clip</div>
<svg style="position:absolute;left:1629px;top:1093px;" width="10" height="6" viewBox="0 0 10 6"><path d="M0 0H10L5 6Z" fill="#22d3e6"/></svg>
<div style="left:1663.8px;top:1086px;width:61.5px;height:18.5px;border:1.5px solid #ffab12;"></div>
<div class="t" style="left:1544.5px;top:1085.5px;width:300px;height:20px;line-height:20px;text-align:center;font-size:15px;color:#ffab12;">Color</div>
<div class="t" style="left:1744.6px;top:1085.5px;width:300px;height:20px;line-height:20px;text-align:left;font-size:15px;color:#bdbdbd;">Amt Lo&nbsp;&nbsp;0.0 %</div>
<div class="t" style="left:1442px;top:1116.6px;width:300px;height:20px;line-height:20px;text-align:center;font-size:15px;letter-spacing:0.5px;color:#1a1a1a;-webkit-text-stroke:0.25px #1a1a1a;">Drive</div>
<svg style="position:absolute;left:1568.5px;top:1130px;" width="47" height="47" viewBox="0 0 47 47"><path d="M12.25 36.91A17.5 17.5 0 1 1 34.75 36.91" fill="none" stroke="#1a1a1a" stroke-width="3.2"/><path d="M12.25 36.91A17.5 17.5 0 0 1 30.17 7.32" fill="none" stroke="#23d6e8" stroke-width="3.6799999999999997"/><line x1="23.5" y1="23.5" x2="30.17" y2="7.32" stroke="#1a1a1a" stroke-width="3.2" stroke-linecap="round"/></svg>
<div class="t" style="left:1442px;top:1170.5px;width:300px;height:20px;line-height:20px;text-align:center;font-size:15px;color:#1a1a1a;">6.3 dB</div>
<div class="t" style="left:1544px;top:1116.6px;width:300px;height:20px;line-height:20px;text-align:center;font-size:15px;letter-spacing:0.5px;color:#1a1a1a;-webkit-text-stroke:0.25px #1a1a1a;">Output</div>
<svg style="position:absolute;left:1670.5px;top:1130px;" width="47" height="47" viewBox="0 0 47 47"><path d="M12.25 36.91A17.5 17.5 0 1 1 34.75 36.91" fill="none" stroke="#1a1a1a" stroke-width="3.2"/><path d="M12.25 36.91A17.5 17.5 0 1 1 39.28 15.94" fill="none" stroke="#23d6e8" stroke-width="3.6799999999999997"/><line x1="23.5" y1="23.5" x2="39.28" y2="15.94" stroke="#1a1a1a" stroke-width="3.2" stroke-linecap="round"/></svg>
<div class="t" style="left:1544px;top:1170.5px;width:300px;height:20px;line-height:20px;text-align:center;font-size:15px;color:#1a1a1a;">-10 dB</div>
<div class="t" style="left:1647.5px;top:1116.6px;width:300px;height:20px;line-height:20px;text-align:center;font-size:15px;letter-spacing:0.5px;color:#1a1a1a;-webkit-text-stroke:0.25px #1a1a1a;">Dry/Wet</div>
<svg style="position:absolute;left:1774px;top:1130px;" width="47" height="47" viewBox="0 0 47 47"><path d="M12.25 36.91A17.5 17.5 0 1 1 34.75 36.91" fill="none" stroke="#1a1a1a" stroke-width="3.2"/><path d="M12.25 36.91A17.5 17.5 0 1 1 40.69 26.78" fill="none" stroke="#23d6e8" stroke-width="3.6799999999999997"/><line x1="23.5" y1="23.5" x2="40.69" y2="26.78" stroke="#1a1a1a" stroke-width="3.2" stroke-linecap="round"/></svg>
<div class="t" style="left:1647.5px;top:1170.5px;width:300px;height:20px;line-height:20px;text-align:center;font-size:15px;color:#1a1a1a;">84 %</div>
<svg style="position:absolute;left:1868.4px;top:975.3px;" width="8.5" height="163" viewBox="0 0 8.5 163"><rect x="0" y="0" width="3.75" height="163" fill="#2a2a2a"/><rect x="0" y="64.7" width="3.75" height="98.3" fill="#22dd55"/><rect x="4.75" y="0" width="3.75" height="163" fill="#2a2a2a"/><rect x="4.75" y="64.7" width="3.75" height="98.3" fill="#22dd55"/><rect x="0" y="24.7" width="8.5" height="1.2" fill="#9a9a9a"/><rect x="0" y="43.7" width="8.5" height="1.4" fill="#e0b030"/></svg>
<div style="left:1879.7px;top:915.6px;width:25.3px;height:282.4px;background:#b9b9b9;border-radius:5px;"></div>
<div style="left:17px;top:1216px;width:22px;height:22px;background:#a3a3a3;border-radius:50%;"></div>
<div class="t" style="left:-122px;top:1217.5px;width:300px;height:20px;line-height:20px;text-align:center;font-size:15px;font-weight:bold;color:#7a7a7a;">i</div>
<div style="left:63px;top:1212px;width:1133px;height:29px;background:#9f9f9f;border-radius:4px;"></div>
<div style="left:1209px;top:1212px;width:332px;height:29px;background:#9f9f9f;border-radius:4px;"></div>
<div style="left:1237.5px;top:1212px;width:1.5px;height:29px;background:#7f7f7f;"></div>
<svg style="position:absolute;left:1218px;top:1220px;" width="11" height="13" viewBox="0 0 11 13"><path d="M0 0L11 6.5L0 13Z" fill="#111"/></svg>
<div style="left:1555px;top:1210.5px;width:29.5px;height:32px;background:#ffab12;border-radius:3px 0 0 3px;"></div>
<svg style="position:absolute;left:1563px;top:1219px;" width="14" height="12" viewBox="0 0 14 12"><path d="M7 0L14 12H0Z" fill="#111"/></svg>
<div style="left:1584.5px;top:1210.5px;width:56px;height:32px;background:#a5a5a5;"></div>
<div class="t" style="left:1462px;top:1217px;width:300px;height:20px;line-height:20px;text-align:center;font-size:16px;color:#1a1a1a;-webkit-text-stroke:0.5px #1a1a1a;">Keys</div>
<div style="left:1821.6px;top:1215.5px;width:11px;height:22px;background:#262626;border:1px solid #8a9a9a;"></div>
<svg style="position:absolute;left:1640.6px;top:1210px;" width="181.6" height="33.7" viewBox="0 0 181.6 33.7"><rect x="1" y="1" width="179.6" height="30.7" rx="5" fill="#a9adad" stroke="#2e2e2e" stroke-width="2.2"/><rect x="5.4" y="5.5" width="37" height="16.5" fill="#262626"/><rect x="46.4" y="5.5" width="37" height="16.5" fill="#262626"/><rect x="100" y="5.5" width="45" height="16.5" fill="#262626"/><rect x="158" y="5.5" width="19.4" height="16.5" fill="#262626"/><rect x="87" y="3" width="2" height="27" fill="#c0c0c0"/><rect x="6" y="6" width="18" height="2" fill="#f0b020"/><rect x="66" y="6" width="16" height="2" fill="#f0b020"/><rect x="158" y="6" width="17" height="3" fill="#22c8dc"/><path d="M6 13L10 11L14 14L18 11L22 14L26 11L30 14L34 11L42 13" stroke="#23cfe3" stroke-width="0.9" fill="none"/><path d="M6 15L12 12L18 16L24 12L30 15L42 12" stroke="#f0b020" stroke-width="0.8" fill="none"/><path d="M47 10L59 15L60 9L72 15L73 9L83 13" stroke="#f0b020" stroke-width="0.9" fill="none"/><path d="M101 14L120 14L130 17L136 12L144 15" stroke="#23cfe3" stroke-width="0.9" fill="none"/><path d="M105 21L110 17L114 21L118 16L124 21Z" fill="#555"/><rect x="7" y="24" width="1.6" height="5" fill="#707070"/><rect x="12.9" y="24" width="1.6" height="5" fill="#707070"/><rect x="18.8" y="24" width="1.6" height="5" fill="#707070"/><rect x="24.7" y="24" width="1.6" height="5" fill="#707070"/><rect x="30.6" y="24" width="1.6" height="5" fill="#707070"/><rect x="36.5" y="24" width="1.6" height="5" fill="#707070"/><rect x="42.4" y="24" width="1.6" height="5" fill="#707070"/><rect x="48.3" y="24" width="1.6" height="5" fill="#707070"/><rect x="54.2" y="24" width="1.6" height="5" fill="#707070"/><rect x="60.1" y="24" width="1.6" height="5" fill="#707070"/><rect x="66" y="24" width="1.6" height="5" fill="#707070"/><rect x="71.9" y="24" width="1.6" height="5" fill="#707070"/><rect x="77.8" y="24" width="1.6" height="5" fill="#707070"/><rect x="83.7" y="24" width="1.6" height="5" fill="#707070"/><rect x="89.6" y="24" width="1.6" height="5" fill="#707070"/><rect x="95.5" y="24" width="1.6" height="5" fill="#707070"/><rect x="101.4" y="24" width="1.6" height="5" fill="#707070"/><rect x="107.3" y="24" width="1.6" height="5" fill="#707070"/><rect x="113.2" y="24" width="1.6" height="5" fill="#707070"/><rect x="119.1" y="24" width="1.6" height="5" fill="#707070"/><rect x="125" y="24" width="1.6" height="5" fill="#707070"/><rect x="130.9" y="24" width="1.6" height="5" fill="#707070"/><rect x="136.8" y="24" width="1.6" height="5" fill="#707070"/><rect x="142.7" y="24" width="1.6" height="5" fill="#707070"/><rect x="148.6" y="24" width="1.6" height="5" fill="#707070"/><rect x="154.5" y="24" width="1.6" height="5" fill="#707070"/><rect x="160.4" y="24" width="1.6" height="5" fill="#707070"/><rect x="166.3" y="24" width="1.6" height="5" fill="#707070"/></svg>
<div style="left:1859px;top:1226px;width:3.5px;height:14px;background:#f0b020;"></div>
<div style="left:1865.5px;top:1218px;width:3.5px;height:22px;background:#f0b020;"></div>
<div style="left:1872px;top:1228px;width:3.5px;height:12px;background:#f0b020;"></div>
<div style="left:1878.5px;top:1222px;width:3.5px;height:18px;background:#f0b020;"></div>
<svg style="position:absolute;left:1889px;top:1222px;" width="11" height="7" viewBox="0 0 11 7"><path d="M0 0H11L5.5 7Z" fill="#a0a0a0"/></svg></body></html>
